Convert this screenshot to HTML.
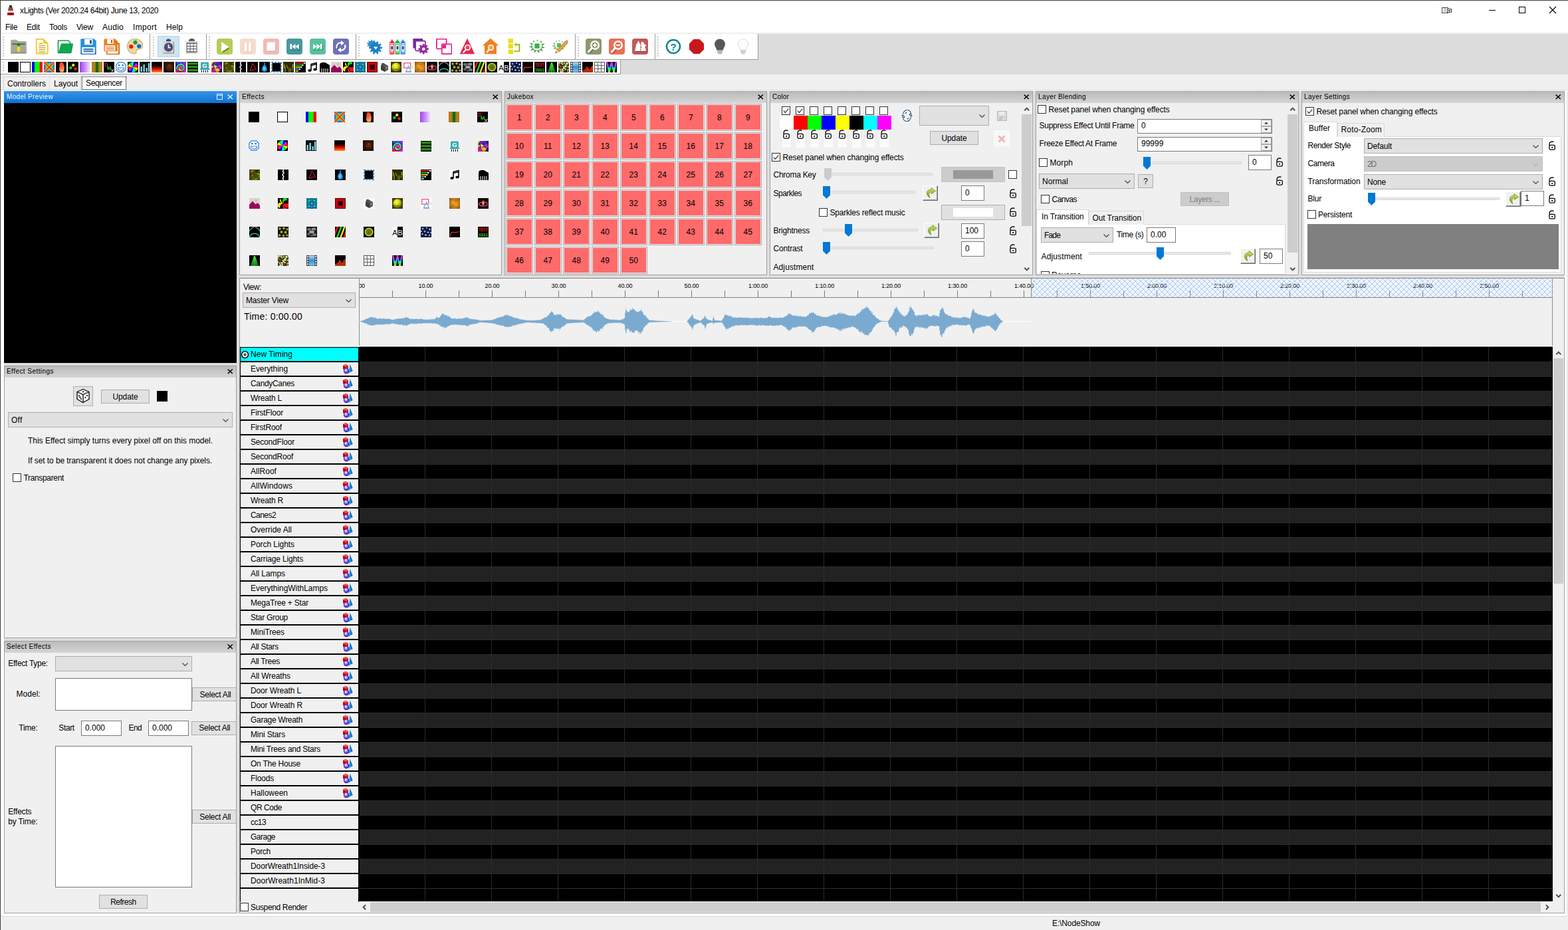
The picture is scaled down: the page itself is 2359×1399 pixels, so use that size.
<!DOCTYPE html>
<html lang="en"><head><meta charset="utf-8"><title>xLights</title><style>
html,body{margin:0;padding:0;background:#f0f0f0}
body{width:2359px;height:1399px;position:relative;overflow:hidden;font:12px/16px "Liberation Sans",sans-serif;color:#000}
div,span.t,svg{position:absolute;box-sizing:border-box}
span.t{white-space:nowrap;line-height:16px}
svg{overflow:visible}
</style></head><body>
<div style="left:0px;top:0px;width:2359px;height:1399px;background:#f0f0f0"></div>
<div style="left:0px;top:0px;width:2359px;height:50px;background:#fff"></div>
<div style="left:0px;top:0px;width:2359px;height:1px;background:#3c3c3c"></div>
<svg style="left:9px;top:7px;" width="14" height="17" viewBox="0 0 14 17"><path d="M5 1h4v3h-4z" fill="#3a2418"/><path d="M4 4h6l1 5h-8z" fill="#8a4a30"/><path d="M3 9h8v3h-8z" fill="#e8d8d0"/><path d="M2 12h10v4h-10z" fill="#b01828"/><path d="M5 13h4v3h-4z" fill="#7a0f1a"/></svg>
<span class="t" style="left:30px;top:8px;line-height:16px;letter-spacing:-0.360px;">xLights (Ver 2020.24 64bit) June 13, 2020</span>
<svg style="left:2165px;top:8px;" width="24" height="16" viewBox="0 0 24 16"><rect x="4.5" y="3.5" width="9" height="8" fill="#fff" stroke="#444" /><path d="M8 4v8M10 4v8" stroke="#999"/><rect x="12.5" y="5.5" width="6" height="5" fill="#fff" stroke="#444"/><rect x="14" y="7" width="3" height="2" fill="#444"/></svg>
<svg style="left:2235px;top:5px;" width="20" height="20" viewBox="0 0 20 20"><path d="M5 10.5h10" stroke="#000" stroke-width="1"/></svg>
<svg style="left:2280px;top:5px;" width="20" height="20" viewBox="0 0 20 20"><rect x="5.5" y="5.5" width="9" height="9" fill="none" stroke="#000"/></svg>
<svg style="left:2326px;top:5px;" width="20" height="20" viewBox="0 0 20 20"><path d="M5 5l10 10M15 5l-10 10" stroke="#000" stroke-width="1.1"/></svg>
<span class="t" style="left:8px;top:33px;line-height:16px;letter-spacing:-0.336px;">File</span>
<span class="t" style="left:40px;top:33px;line-height:16px;letter-spacing:-0.168px;">Edit</span>
<span class="t" style="left:74px;top:33px;line-height:16px;letter-spacing:-0.203px;">Tools</span>
<span class="t" style="left:115px;top:33px;line-height:16px;letter-spacing:-0.199px;">View</span>
<span class="t" style="left:154px;top:33px;line-height:16px;letter-spacing:0.263px;">Audio</span>
<span class="t" style="left:200px;top:33px;line-height:16px;letter-spacing:0.333px;">Import</span>
<span class="t" style="left:250px;top:33px;line-height:16px;letter-spacing:0.078px;">Help</span>
<div style="left:0px;top:51px;width:2359px;height:61px;background:#dcdcdc"></div>
<div style="left:0px;top:49px;width:2359px;height:2px;background:#f0f0f0"></div>
<div style="left:1px;top:51px;width:1140px;height:39px;background:#fff;border-right:1px solid #9a9a9a;border-bottom:1px solid #9a9a9a"></div>
<div style="left:1px;top:90px;width:933px;height:22px;background:#fff;border-right:1px solid #9a9a9a;border-bottom:1px solid #9a9a9a"></div>
<div style="left:225px;top:51px;width:1px;height:38px;background:#9a9a9a"></div>
<div style="left:310px;top:51px;width:1px;height:38px;background:#9a9a9a"></div>
<div style="left:535px;top:51px;width:1px;height:38px;background:#9a9a9a"></div>
<div style="left:865px;top:51px;width:1px;height:38px;background:#9a9a9a"></div>
<div style="left:985px;top:51px;width:1px;height:38px;background:#9a9a9a"></div>
<div style="left:4px;top:55px;width:2px;height:30px;background:repeating-linear-gradient(#c8c8c8 0 2px,#fff 2px 4px)"></div>
<div style="left:230px;top:55px;width:2px;height:30px;background:repeating-linear-gradient(#c8c8c8 0 2px,#fff 2px 4px)"></div>
<div style="left:314px;top:55px;width:2px;height:30px;background:repeating-linear-gradient(#c8c8c8 0 2px,#fff 2px 4px)"></div>
<div style="left:539px;top:55px;width:2px;height:30px;background:repeating-linear-gradient(#c8c8c8 0 2px,#fff 2px 4px)"></div>
<div style="left:869px;top:55px;width:2px;height:30px;background:repeating-linear-gradient(#c8c8c8 0 2px,#fff 2px 4px)"></div>
<div style="left:989px;top:55px;width:2px;height:30px;background:repeating-linear-gradient(#c8c8c8 0 2px,#fff 2px 4px)"></div>
<div style="left:4px;top:93px;width:2px;height:16px;background:repeating-linear-gradient(#c8c8c8 0 2px,#fff 2px 4px)"></div>
<div style="left:5px;top:115px;width:70px;height:21px;background:#f0f0f0;border:1px solid #d9d9d9;border-bottom:none"></div>
<div style="left:74px;top:115px;width:48px;height:21px;background:#f0f0f0;border:1px solid #d9d9d9;border-bottom:none"></div>
<div style="left:122px;top:113px;width:69px;height:23px;background:#fff;border:1px solid #d9d9d9;border-bottom:none"></div>
<div style="left:123px;top:115px;width:67px;height:20px;border:1px dotted #000"></div>
<span class="t" style="left:11px;top:118px;line-height:16px;letter-spacing:-0.003px;">Controllers</span>
<span class="t" style="left:81px;top:118px;line-height:16px;letter-spacing:-0.003px;">Layout</span>
<span class="t" style="left:129px;top:117px;line-height:16px;letter-spacing:-0.337px;">Sequencer</span>
<div style="left:0px;top:0px;width:1px;height:1399px;background:#3c3c3c"></div>
<div style="left:1px;top:137px;width:2355px;height:1237px;background:#dedede"></div>
<div style="left:1px;top:135px;width:2358px;height:1px;background:#dcdcdc"></div>
<div style="left:1px;top:136px;width:2358px;height:1px;background:#fff"></div>
<div style="left:1px;top:137px;width:5px;height:1241px;background:#fff"></div>
<div style="left:1px;top:1374px;width:2358px;height:4px;background:#fff"></div>
<div style="left:2354px;top:137px;width:3px;height:1241px;background:#fff"></div>
<div style="left:2357px;top:137px;width:1px;height:1241px;background:#e6e6e6"></div>
<div style="left:1px;top:1378px;width:2358px;height:1px;background:#dadada"></div>
<div style="left:1px;top:1379px;width:2358px;height:20px;background:#f0f0f0"></div>
<span class="t" style="left:1583px;top:1381px;line-height:16px;letter-spacing:-0.124px;">E:\NodeShow</span>
<div style="left:6px;top:137px;width:350px;height:409px;background:#000"></div>
<div style="left:6px;top:137px;width:350px;height:18px;background:linear-gradient(#3a92e6,#0b74d4)"></div>
<span class="t" style="left:10px;top:138px;font-size:10px;line-height:15px;color:#e6f6ff;letter-spacing:0.340px;">Model Preview</span>
<svg style="left:342px;top:142px;" width="9" height="8" viewBox="0 0 9 8"><path d="M0.7 0.5L7.8 7M7.8 0.5L0.7 7" stroke="#e0f4ff" stroke-width="1.6" fill="none"/></svg>
<svg style="left:326px;top:141px;" width="10" height="10" viewBox="0 0 10 10"><rect x="0.5" y="0.5" width="8" height="8" fill="none" stroke="#e0f4ff"/><path d="M0 2.5h9" stroke="#e0f4ff"/></svg>
<div style="left:6px;top:550px;width:350px;height:410px;background:#f0f0f0;border:1px solid #a0a0a0"></div>
<div style="left:7px;top:551px;width:348px;height:17px;background:linear-gradient(#bbbbbb,#d5d5d5)"></div>
<span class="t" style="left:10px;top:551px;font-size:10px;line-height:15px;letter-spacing:0.446px;">Effect Settings</span>
<svg style="left:342px;top:555px;" width="9" height="8" viewBox="0 0 9 8"><path d="M0.7 0.5L7.8 7M7.8 0.5L0.7 7" stroke="#000" stroke-width="1.6" fill="none"/></svg>
<div style="left:6px;top:964px;width:350px;height:410px;background:#f0f0f0;border:1px solid #a0a0a0"></div>
<div style="left:7px;top:965px;width:348px;height:17px;background:linear-gradient(#bbbbbb,#d5d5d5)"></div>
<span class="t" style="left:10px;top:965px;font-size:10px;line-height:15px;letter-spacing:0.431px;">Select Effects</span>
<svg style="left:342px;top:969px;" width="9" height="8" viewBox="0 0 9 8"><path d="M0.7 0.5L7.8 7M7.8 0.5L0.7 7" stroke="#000" stroke-width="1.6" fill="none"/></svg>
<div style="left:360px;top:137px;width:395px;height:277px;background:#f0f0f0;border:1px solid #a0a0a0"></div>
<div style="left:361px;top:138px;width:393px;height:17px;background:linear-gradient(#bbbbbb,#d5d5d5)"></div>
<span class="t" style="left:364px;top:138px;font-size:10px;line-height:15px;letter-spacing:0.516px;">Effects</span>
<svg style="left:741px;top:142px;" width="9" height="8" viewBox="0 0 9 8"><path d="M0.7 0.5L7.8 7M7.8 0.5L0.7 7" stroke="#000" stroke-width="1.6" fill="none"/></svg>
<div style="left:759px;top:137px;width:395px;height:277px;background:#f0f0f0;border:1px solid #a0a0a0"></div>
<div style="left:760px;top:138px;width:393px;height:17px;background:linear-gradient(#bbbbbb,#d5d5d5)"></div>
<span class="t" style="left:763px;top:138px;font-size:10px;line-height:15px;letter-spacing:0.393px;">Jukebox</span>
<svg style="left:1140px;top:142px;" width="9" height="8" viewBox="0 0 9 8"><path d="M0.7 0.5L7.8 7M7.8 0.5L0.7 7" stroke="#000" stroke-width="1.6" fill="none"/></svg>
<div style="left:1158px;top:137px;width:396px;height:277px;background:#f0f0f0;border:1px solid #a0a0a0"></div>
<div style="left:1159px;top:138px;width:394px;height:17px;background:linear-gradient(#bbbbbb,#d5d5d5)"></div>
<span class="t" style="left:1162px;top:138px;font-size:10px;line-height:15px;letter-spacing:0.222px;">Color</span>
<svg style="left:1540px;top:142px;" width="9" height="8" viewBox="0 0 9 8"><path d="M0.7 0.5L7.8 7M7.8 0.5L0.7 7" stroke="#000" stroke-width="1.6" fill="none"/></svg>
<div style="left:1558px;top:137px;width:396px;height:277px;background:#f0f0f0;border:1px solid #a0a0a0"></div>
<div style="left:1559px;top:138px;width:394px;height:17px;background:linear-gradient(#bbbbbb,#d5d5d5)"></div>
<span class="t" style="left:1562px;top:138px;font-size:10px;line-height:15px;letter-spacing:0.377px;">Layer Blending</span>
<svg style="left:1940px;top:142px;" width="9" height="8" viewBox="0 0 9 8"><path d="M0.7 0.5L7.8 7M7.8 0.5L0.7 7" stroke="#000" stroke-width="1.6" fill="none"/></svg>
<div style="left:1958px;top:137px;width:396px;height:277px;background:#f0f0f0;border:1px solid #a0a0a0"></div>
<div style="left:1959px;top:138px;width:394px;height:17px;background:linear-gradient(#bbbbbb,#d5d5d5)"></div>
<span class="t" style="left:1962px;top:138px;font-size:10px;line-height:15px;letter-spacing:0.362px;">Layer Settings</span>
<svg style="left:2340px;top:142px;" width="9" height="8" viewBox="0 0 9 8"><path d="M0.7 0.5L7.8 7M7.8 0.5L0.7 7" stroke="#000" stroke-width="1.6" fill="none"/></svg>
<div style="left:360px;top:418px;width:1994px;height:956px;background:#f0f0f0;border:1px solid #a0a0a0;border-top-color:#828282"></div>
<div style="left:110px;top:581px;width:30px;height:30px;background:#e1e1e1;border:1px solid #adadad"></div>
<svg style="left:114px;top:584px;" width="22" height="23" viewBox="0 0 22 23"><path d="M11 1.500L20 5.500V16.500L11 21.500L2 16.500V5.500Z" fill="#fff" stroke="#000" stroke-width="1.3" stroke-linejoin="round"/><path d="M2 5.500L11 9.500L20 5.500M11 9.500V21.500" fill="none" stroke="#000" stroke-width="1.3"/><circle cx="11" cy="5.300" r="1.1"/><circle cx="5" cy="11.500" r="1.1"/><circle cx="8" cy="16" r="1.1"/><circle cx="6.500" cy="13.700" r="1.1"/><circle cx="14.500" cy="14" r="1.1"/><circle cx="17" cy="11" r="1.1"/></svg>
<div style="left:152px;top:586px;width:73px;height:21px;background:#e1e1e1;border:1px solid #adadad"></div>
<span class="t" style="left:169.5px;top:588.5px;letter-spacing:-0.115px;">Update</span>
<div style="left:236px;top:588px;width:16px;height:16px;background:#000"></div>
<div style="left:12px;top:620px;width:338px;height:23px;background:#e1e1e1;border:1px solid #adadad"></div>
<span class="t" style="left:17px;top:624px;letter-spacing:0.245px;">Off</span>
<svg style="left:335px;top:630px;" width="9" height="5" viewBox="0 0 9 5"><path d="M0.5 0.5L4.5 4.5L8.5 0.5" fill="none" stroke="#444" stroke-width="1.2"/></svg>
<span class="t" style="left:42px;top:655px;line-height:16px;letter-spacing:-0.017px;">This Effect simply turns every pixel off on this model.</span>
<span class="t" style="left:42px;top:685px;line-height:16px;letter-spacing:-0.080px;">If set to be transparent it does not change any pixels.</span>
<div style="left:19px;top:712px;width:13px;height:13px;background:#fff;border:1px solid #333"></div>
<span class="t" style="left:35.5px;top:711px;line-height:16px;letter-spacing:-0.341px;">Transparent</span>
<span class="t" style="left:12.3px;top:990px;line-height:16px;letter-spacing:-0.283px;">Effect Type:</span>
<div style="left:83px;top:987px;width:206px;height:23px;background:#e1e1e1;border:1px solid #adadad"></div>
<svg style="left:274px;top:997px;" width="9" height="5" viewBox="0 0 9 5"><path d="M0.5 0.5L4.5 4.5L8.5 0.5" fill="none" stroke="#444" stroke-width="1.2"/></svg>
<span class="t" style="left:24.4px;top:1036px;line-height:16px;letter-spacing:0.081px;">Model:</span>
<div style="left:83px;top:1020px;width:206px;height:49px;background:#fff;border:1px solid #7a7a7a"></div>
<div style="left:289px;top:1034px;width:66px;height:21px;background:#e1e1e1;border:1px solid #adadad;border-right:none"></div>
<span class="t" style="left:300.5px;top:1037px;line-height:16px;letter-spacing:-0.236px;">Select All</span>
<span class="t" style="left:28.3px;top:1087px;line-height:16px;letter-spacing:-0.252px;">Time:</span>
<span class="t" style="left:88.3px;top:1087px;line-height:16px;letter-spacing:-0.366px;">Start</span>
<div style="left:122px;top:1084px;width:61px;height:23px;background:#fff;border:1px solid #7a7a7a"></div>
<span class="t" style="left:128px;top:1087px;">0.000</span>
<span class="t" style="left:193.5px;top:1087px;line-height:16px;letter-spacing:-0.615px;">End</span>
<div style="left:223px;top:1084px;width:61px;height:23px;background:#fff;border:1px solid #7a7a7a"></div>
<span class="t" style="left:229px;top:1087px;">0.000</span>
<div style="left:288px;top:1085px;width:67px;height:21px;background:#e1e1e1;border:1px solid #adadad;border-right:none"></div>
<span class="t" style="left:299.3px;top:1087px;line-height:16px;letter-spacing:-0.236px;">Select All</span>
<div style="left:83px;top:1122px;width:206px;height:213px;background:#fff;border:1px solid #7a7a7a"></div>
<span class="t" style="left:12.3px;top:1213px;line-height:16px;letter-spacing:-0.205px;">Effects</span>
<span class="t" style="left:12.3px;top:1228px;line-height:16px;letter-spacing:-0.168px;">by Time:</span>
<div style="left:289px;top:1218px;width:66px;height:21px;background:#e1e1e1;border:1px solid #adadad;border-right:none"></div>
<span class="t" style="left:300.2px;top:1221px;line-height:16px;letter-spacing:-0.236px;">Select All</span>
<div style="left:149px;top:1346px;width:73px;height:21px;background:#e1e1e1;border:1px solid #adadad"></div>
<span class="t" style="left:166.2px;top:1348.5px;letter-spacing:-0.502px;">Refresh</span>
<svg style="left:12px;top:93px;overflow:hidden" width="16" height="16" viewBox="0 0 16 16"><rect width="16" height="16" fill="#000"/></svg>
<svg style="left:30px;top:93px;overflow:hidden" width="16" height="16" viewBox="0 0 16 16"><rect x="0.5" y="0.5" width="15" height="15" fill="#fff" stroke="#000" stroke-width="1.1"/></svg>
<svg style="left:48px;top:93px;overflow:hidden" width="16" height="16" viewBox="0 0 16 16"><rect width="4.2" height="16" fill="#0000ff"/><rect x="4" width="7.7" height="16" fill="#00ff00"/><rect x="11.5" width="4.5" height="16" fill="#ff0000"/></svg>
<svg style="left:66px;top:93px;overflow:hidden" width="16" height="16" viewBox="0 0 16 16"><radialGradient id="bft3" cx="0.5" cy="0.5" r="0.56"><stop offset="0" stop-color="#ff1000"/><stop offset="0.18" stop-color="#ff9000"/><stop offset="0.3" stop-color="#e0e020"/><stop offset="0.45" stop-color="#30d030"/><stop offset="0.62" stop-color="#20c0d0"/><stop offset="0.8" stop-color="#3050f0"/><stop offset="1" stop-color="#d020c0"/></radialGradient><rect width="16" height="16" fill="url(#bft3)"/><path d="M0 0L16 16M16 0L0 16" stroke="#40d040" stroke-width="5.5" opacity=".55"/><path d="M0 0L16 16M16 0L0 16" stroke="#e8d020" stroke-width="3.6" opacity=".8"/><path d="M0 0L16 16M16 0L0 16" stroke="#ff2a08" stroke-width="1.9"/></svg>
<svg style="left:84px;top:93px;overflow:hidden" width="16" height="16" viewBox="0 0 16 16"><rect width="16" height="16" fill="#0c0400"/><linearGradient id="cdt4" x1="0" y1="0" x2="0.3" y2="1"><stop offset="0" stop-color="#e83818"/><stop offset="0.5" stop-color="#ff5a30"/><stop offset="1" stop-color="#ffb070"/></linearGradient><path d="M7 0.500C9.500 0.500 11.500 2 12 4.500C12.500 7 13 8.500 12.500 11C12.300 13 12 14.500 11 15.500H6.500C6.500 14 5.500 13.500 5 12C4.500 10.500 5.500 9.500 5.500 8C5 6 5.500 2 7 0.500Z" fill="url(#cdt4)"/><path d="M6 10C7 9 8 9.500 8 11" stroke="#ff8050" stroke-width="1" fill="none"/></svg>
<svg style="left:102px;top:93px;overflow:hidden" width="16" height="16" viewBox="0 0 16 16"><rect width="16" height="16" fill="#000"/><circle cx="4.5" cy="9" r="2.3" fill="#18c818"/><circle cx="8.2" cy="5" r="2.2" fill="#f0e020"/><circle cx="11.5" cy="10.5" r="2.3" fill="#e82020"/></svg>
<svg style="left:120px;top:93px;overflow:hidden" width="16" height="16" viewBox="0 0 16 16"><linearGradient id="cwt6"><stop offset="0" stop-color="#a040f0"/><stop offset="0.5" stop-color="#c890f8"/><stop offset="1" stop-color="#f4e8ff"/></linearGradient><rect width="16" height="16" fill="url(#cwt6)"/></svg>
<svg style="left:138px;top:93px;overflow:hidden" width="16" height="16" viewBox="0 0 16 16"><linearGradient id="cut7"><stop offset="0" stop-color="#e86010"/><stop offset="0.25" stop-color="#a09020"/><stop offset="0.45" stop-color="#207010"/><stop offset="0.5" stop-color="#0a3a08"/><stop offset="0.55" stop-color="#207010"/><stop offset="0.75" stop-color="#a09020"/><stop offset="1" stop-color="#e86010"/></linearGradient><rect width="16" height="16" fill="url(#cut7)"/></svg>
<svg style="left:156px;top:93px;overflow:hidden" width="16" height="16" viewBox="0 0 16 16"><rect width="16" height="16" fill="#000"/><text x="1" y="7" font-family="Liberation Sans, sans-serif" font-size="7.5" font-weight="bold" fill="#e01818">D</text><text x="5" y="12" font-family="Liberation Sans, sans-serif" font-size="7.5" font-weight="bold" fill="#20d020">M</text><text x="10.5" y="16" font-family="Liberation Sans, sans-serif" font-size="7.5" fill="#fff">X</text></svg>
<svg style="left:174px;top:93px;overflow:hidden" width="16" height="16" viewBox="0 0 16 16"><path d="M4.5 0.8h7l3.7 3.7v7l-3.7 3.7h-7l-3.7-3.7v-7z" fill="#fff" stroke="#2a7fd8" stroke-width="1.2"/><rect x="4" y="4" width="2.6" height="2.3" fill="#2a7fd8"/><rect x="9.4" y="4" width="2.6" height="2.3" fill="#2a7fd8"/><path d="M3.3 9h9.4c0 2.5-2 4-4.7 4s-4.7-1.5-4.7-4z" fill="#fff" stroke="#2a7fd8" stroke-width="1.1"/></svg>
<svg style="left:192px;top:93px;overflow:hidden" width="16" height="16" viewBox="0 0 16 16"><rect width="16" height="16" fill="#000"/><path d="M8 8L15.05 5.43A7.5 7.5 0 0 1 15.39 9.30Z" fill="#ff0000" stroke="#ff0000" stroke-width="0.4"/><path d="M8 8L15.39 9.30A7.5 7.5 0 0 1 13.75 12.82Z" fill="#ffff00" stroke="#ffff00" stroke-width="0.4"/><path d="M8 8L13.75 12.82A7.5 7.5 0 0 1 10.57 15.05Z" fill="#00ff00" stroke="#00ff00" stroke-width="0.4"/><path d="M8 8L10.57 15.05A7.5 7.5 0 0 1 6.70 15.39Z" fill="#00ffff" stroke="#00ffff" stroke-width="0.4"/><path d="M8 8L6.70 15.39A7.5 7.5 0 0 1 3.18 13.75Z" fill="#0000ff" stroke="#0000ff" stroke-width="0.4"/><path d="M8 8L3.18 13.75A7.5 7.5 0 0 1 0.95 10.57Z" fill="#ff00ff" stroke="#ff00ff" stroke-width="0.4"/><path d="M8 8L0.95 10.57A7.5 7.5 0 0 1 0.61 6.70Z" fill="#ff0000" stroke="#ff0000" stroke-width="0.4"/><path d="M8 8L0.61 6.70A7.5 7.5 0 0 1 2.25 3.18Z" fill="#ffff00" stroke="#ffff00" stroke-width="0.4"/><path d="M8 8L2.25 3.18A7.5 7.5 0 0 1 5.43 0.95Z" fill="#00ff00" stroke="#00ff00" stroke-width="0.4"/><path d="M8 8L5.43 0.95A7.5 7.5 0 0 1 9.30 0.61Z" fill="#00ffff" stroke="#00ffff" stroke-width="0.4"/><path d="M8 8L9.30 0.61A7.5 7.5 0 0 1 12.82 2.25Z" fill="#0000ff" stroke="#0000ff" stroke-width="0.4"/><path d="M8 8L12.82 2.25A7.5 7.5 0 0 1 15.05 5.43Z" fill="#ff00ff" stroke="#ff00ff" stroke-width="0.4"/></svg>
<svg style="left:210px;top:93px;overflow:hidden" width="16" height="16" viewBox="0 0 16 16"><rect width="16" height="16" fill="#0a1018"/><rect x="1.5" y="7" width="2.3" height="8" fill="#88d8e0"/><rect x="5.5" y="4" width="2.3" height="11" fill="#88d8e0"/><rect x="9.5" y="9" width="2.3" height="6" fill="#88d8e0"/><rect x="13" y="2" width="2.3" height="13" fill="#88d8e0"/></svg>
<svg style="left:228px;top:93px;overflow:hidden" width="16" height="16" viewBox="0 0 16 16"><linearGradient id="fit12" x1="0" y1="0" x2="0" y2="1"><stop offset="0" stop-color="#000"/><stop offset="0.35" stop-color="#100000"/><stop offset="0.6" stop-color="#a00800"/><stop offset="0.8" stop-color="#ff3000"/><stop offset="1" stop-color="#ff9020"/></linearGradient><rect width="16" height="16" fill="url(#fit12)"/></svg>
<svg style="left:246px;top:93px;overflow:hidden" width="16" height="16" viewBox="0 0 16 16"><radialGradient id="fwt13" cx="0.55" cy="0.45" r="0.6"><stop offset="0" stop-color="#7a3010"/><stop offset="0.5" stop-color="#3a1808"/><stop offset="1" stop-color="#180a06"/></radialGradient><rect width="16" height="16" fill="url(#fwt13)"/><circle cx="9" cy="5" r="0.8" fill="#c05020"/><circle cx="6" cy="9" r="0.7" fill="#904018"/><circle cx="11" cy="10" r="0.7" fill="#a04818"/><circle cx="8" cy="12" r="0.6" fill="#803010"/></svg>
<svg style="left:264px;top:93px;overflow:hidden" width="16" height="16" viewBox="0 0 16 16"><linearGradient id="gxt14" x1="0" y1="0" x2="1" y2="1"><stop offset="0" stop-color="#2060ff"/><stop offset="0.5" stop-color="#8030f0"/><stop offset="1" stop-color="#ff10d0"/></linearGradient><rect width="16" height="16" fill="url(#gxt14)"/><path d="M0 16V11.500C2 13 4 14 6.500 14.500L4 16Z" fill="#e81020"/><path d="M0 0V11C1 6 4 3 8 3C11.500 3 13.500 5.500 13.500 8.500C13.500 11.500 11.500 13.500 8.500 13.500C6 13.500 4.500 11.500 4.500 9.500C4.500 7.500 6 6.500 7.500 6.500" fill="none" stroke="#101018" stroke-width="2.6"/><path d="M2 11C1.500 7 4.500 3.500 8 3.500" fill="none" stroke="#20d8e8" stroke-width="2.4"/><path d="M8 3.500C11 3.500 13 5.800 13 8.500" fill="none" stroke="#30e0a0" stroke-width="2.4"/><path d="M13 8.500C13 11 11 13 8.500 13" fill="none" stroke="#40e020" stroke-width="2.4"/><path d="M8.500 13C6.500 13 5 11.500 5 9.800" fill="none" stroke="#e0e020" stroke-width="2.2"/><path d="M5 9.800C5 8 6.300 7 7.600 7C9 7 9.800 8 9.800 9" fill="none" stroke="#f06010" stroke-width="1.8"/><circle cx="8.300" cy="9.300" r="1" fill="#e01080"/></svg>
<svg style="left:282px;top:93px;overflow:hidden" width="16" height="16" viewBox="0 0 16 16"><linearGradient id="gat15" x1="0" y1="0" x2="0" y2="1"><stop offset="0" stop-color="#40c020"/><stop offset="1" stop-color="#186008"/></linearGradient><rect width="16" height="16" fill="#000"/><rect x="0.5" y="1.5" width="15" height="3.2" fill="url(#gat15)"/><rect x="0.5" y="6.4" width="15" height="3.2" fill="url(#gat15)"/><rect x="0.5" y="11.3" width="15" height="3.2" fill="url(#gat15)"/></svg>
<svg style="left:300px;top:93px;overflow:hidden" width="16" height="16" viewBox="0 0 16 16"><rect width="16" height="16" fill="#fff" opacity=".9"/><path d="M3.500 0.500h9c1 0 1.500 .500 1.500 1.500v7.500l2 2.500H0l2-2.500V2c0-1 .500-1.500 1.500-1.500z" fill="#38a8b0"/><text x="4.3" y="9.3" font-family="Liberation Sans, sans-serif" font-size="9.5" font-weight="bold" fill="#fff">G</text><path d="M3.500 12.500v3.500M6.500 12.500v3.500M9.500 12.500v3.500M12.500 12.500v3.500" stroke="#101010" stroke-width="1.1"/></svg>
<svg style="left:318px;top:93px;overflow:hidden" width="16" height="16" viewBox="0 0 16 16"><rect width="16" height="16" fill="#4020b0"/><path d="M0 0h3.500L0 5z" fill="#f0d020"/><path d="M3 0h5L5 4z" fill="#c01880"/><path d="M8 0h5l-2 6z" fill="#3030d0"/><path d="M13 0h3v6z" fill="#181030"/><path d="M0 5l4 2-4 4z" fill="#e8a818"/><path d="M4 4l5 3-4 4z" fill="#f0d820"/><path d="M9 7l4-3 3 5-4 3z" fill="#e02090"/><path d="M0 11l5 0 2 5H0z" fill="#d01888"/><path d="M5 11l5-2 3 4-5 3z" fill="#f0c020"/><path d="M13 13l3-4v7h-5z" fill="#181030"/><path d="M7 16l2-3 3 3z" fill="#e86818"/><path d="M10 6l3 3-3 2z" fill="#2840d8"/></svg>
<svg style="left:336px;top:93px;overflow:hidden" width="16" height="16" viewBox="0 0 16 16"><rect width="16" height="16" fill="#4a4a08"/><ellipse cx="4.1" cy="8.7" rx="1.3" ry="1.2" fill="#8a8a18"/><ellipse cx="9.6" cy="14.1" rx="1.4" ry="1.1" fill="#9a9820"/><ellipse cx="15.4" cy="7.6" rx="1.7" ry="1.1" fill="#9a9820"/><ellipse cx="4.0" cy="2.8" rx="1.7" ry="1.0" fill="#8a8a18"/><ellipse cx="10.6" cy="1.5" rx="1.6" ry="1.2" fill="#2a2a04"/><ellipse cx="12.2" cy="12.9" rx="1.2" ry="1.2" fill="#707010"/><ellipse cx="11.2" cy="14.3" rx="1.3" ry="1.3" fill="#707010"/><ellipse cx="15.0" cy="2.5" rx="1.3" ry="0.8" fill="#707010"/><ellipse cx="3.8" cy="15.0" rx="1.3" ry="1.2" fill="#2a2a04"/><ellipse cx="6.8" cy="13.0" rx="1.5" ry="1.1" fill="#707010"/><ellipse cx="9.3" cy="14.1" rx="1.5" ry="1.4" fill="#2a2a04"/><ellipse cx="15.4" cy="10.6" rx="1.1" ry="1.3" fill="#8a8a18"/><ellipse cx="11.2" cy="3.7" rx="1.7" ry="1.1" fill="#2a2a04"/><ellipse cx="2.4" cy="7.7" rx="1.5" ry="1.1" fill="#2a2a04"/><ellipse cx="12.5" cy="6.7" rx="1.1" ry="1.0" fill="#707010"/><ellipse cx="13.6" cy="1.2" rx="1.5" ry="0.8" fill="#2a2a04"/><ellipse cx="8.8" cy="14.3" rx="1.2" ry="0.9" fill="#8a8a18"/><ellipse cx="5.1" cy="1.7" rx="1.5" ry="0.8" fill="#9a9820"/><ellipse cx="15.1" cy="4.9" rx="1.2" ry="1.2" fill="#2a2a04"/><ellipse cx="5.2" cy="14.9" rx="1.7" ry="1.0" fill="#707010"/><ellipse cx="13.5" cy="6.3" rx="1.7" ry="1.2" fill="#8a8a18"/><ellipse cx="9.8" cy="14.6" rx="1.4" ry="1.1" fill="#9a9820"/></svg>
<svg style="left:354px;top:93px;overflow:hidden" width="16" height="16" viewBox="0 0 16 16"><rect width="16" height="16" fill="#000"/><path d="M8.5 0L7.5 3 9 5 7 8 8.8 10.5 7.5 13 8.5 16" fill="none" stroke="#fff" stroke-width="1.5"/></svg>
<svg style="left:372px;top:93px;overflow:hidden" width="16" height="16" viewBox="0 0 16 16"><rect width="16" height="16" fill="#080004"/><path d="M8 2.5L13.5 10.5 4 13Z" fill="none" stroke="#e02038" stroke-width="1"/></svg>
<svg style="left:390px;top:93px;overflow:hidden" width="16" height="16" viewBox="0 0 16 16"><rect width="16" height="16" fill="#02040c"/><radialGradient id="lqt21" cx="0.45" cy="0.6" r="0.6"><stop offset="0" stop-color="#80e0ff"/><stop offset="0.6" stop-color="#1890e0"/><stop offset="1" stop-color="#0850a0"/></radialGradient><path d="M8 2.5C8.5 5 12 7.5 12 11A4 4 0 0 1 4 11C4 7.5 7.5 5 8 2.5Z" fill="url(#lqt21)"/><rect x="7.2" y="1" width="1.6" height="5" fill="#2080d0"/></svg>
<svg style="left:408px;top:93px;overflow:hidden" width="16" height="16" viewBox="0 0 16 16"><rect x="1.5" y="1.5" width="13" height="13" fill="#000"/><rect x="1" y="1" width="14" height="14" fill="none" stroke="#3a78c8" stroke-width="2" stroke-dasharray="2.2 2.45"/></svg>
<svg style="left:426px;top:93px;overflow:hidden" width="16" height="16" viewBox="0 0 16 16"><rect width="16" height="16" fill="#2a2a04"/><rect x="9.8" y="8.9" width="1.4" height="6.8" fill="#8a8a18"/><rect x="13.1" y="9.3" width="1.0" height="3.2" fill="#a0a028"/><rect x="2.2" y="5.6" width="1.0" height="5.2" fill="#a0a028"/><rect x="0.7" y="2.6" width="1.0" height="6.7" fill="#6a6a10"/><rect x="2.9" y="9.6" width="0.9" height="5.5" fill="#a0a028"/><rect x="2.5" y="11.7" width="0.8" height="6.1" fill="#a0a028"/><rect x="13.6" y="3.5" width="1.5" height="5.2" fill="#a0a028"/><rect x="3.2" y="11.6" width="0.9" height="6.9" fill="#6a6a10"/><rect x="5.0" y="4.3" width="0.9" height="3.6" fill="#8a8a18"/><rect x="5.5" y="9.8" width="1.2" height="5.4" fill="#1a1a02"/><rect x="1.5" y="4.3" width="1.0" height="5.8" fill="#a0a028"/><rect x="7.7" y="8.5" width="0.8" height="6.9" fill="#8a8a18"/><rect x="14.7" y="4.3" width="1.1" height="5.2" fill="#6a6a10"/><rect x="6.0" y="6.9" width="0.8" height="3.2" fill="#a0a028"/></svg>
<svg style="left:444px;top:93px;overflow:hidden" width="16" height="16" viewBox="0 0 16 16"><rect width="16" height="16" fill="#000"/><rect x="0.5" y="1" width="14" height="1.8" fill="#e82020"/><rect x="13" y="1" width="2.5" height="1.8" fill="#fff"/><rect x="0.5" y="4" width="11" height="1.8" fill="#20c020"/><rect x="10" y="4" width="2.5" height="1.8" fill="#fff"/><rect x="0.5" y="7" width="9" height="1.8" fill="#f0d020"/><rect x="8.5" y="7" width="2" height="1.8" fill="#fff"/><rect x="0.5" y="10" width="6.5" height="1.8" fill="#40b0e8"/><rect x="6" y="10" width="2" height="1.8" fill="#fff"/><rect x="0.5" y="13" width="4.5" height="1.8" fill="#f0d020"/></svg>
<svg style="left:462px;top:93px;overflow:hidden" width="16" height="16" viewBox="0 0 16 16"><rect width="16" height="16" fill="#fff" opacity=".85"/><path d="M6 3.5L14 1.5V11.5M6 3.5V13" fill="none" stroke="#000" stroke-width="1.6"/><path d="M6 5.5L14 3.5" stroke="#000" stroke-width="1.6"/><ellipse cx="4" cy="13" rx="2.7" ry="2" fill="#000"/><ellipse cx="12" cy="11.5" rx="2.7" ry="2" fill="#000"/></svg>
<svg style="left:480px;top:93px;overflow:hidden" width="16" height="16" viewBox="0 0 16 16"><rect width="16" height="16" fill="#fff" opacity=".85"/><path d="M1 16V4.5C1 2 3 1 5 1h3c3 0 4 2.5 6.5 3 1 .3 1.500 1 1.500 2V16z" fill="#000"/><path d="M4 10v6M7 10v6M10 10v6M13 10v6" stroke="#fff" stroke-width="1"/></svg>
<svg style="left:498px;top:93px;overflow:hidden" width="16" height="16" viewBox="0 0 16 16"><rect width="16" height="16" fill="#d8d4d0"/><circle cx="10.5" cy="3.5" r="1.8" fill="#f0b0a0"/><path d="M0 16V10L5 4.500 9.500 9.500 12.500 7 16 11V16Z" fill="#980858"/></svg>
<svg style="left:516px;top:93px;overflow:hidden" width="16" height="16" viewBox="0 0 16 16"><rect width="16" height="16" fill="#000"/><path d="M8 8C8.500 5 10 3 13.500 3.500C15 1.500 13 0 10.500 0C7 0 6 4.500 8 8Z" fill="#10e020"/><path d="M8 8C5 8.500 3 10.500 3.500 14C1.500 16 0 13 0 10.500C0 6.500 4.500 5.500 8 8Z" fill="#f8f010"/><path d="M3.500 1C2 3.500 3.500 6.500 8 8C4.500 5.500 5.500 2.500 3.500 1Z" fill="#f8f010"/><path d="M8 8C11 8 13.500 9 16 7.500V14C14 15.500 9 14 8 8Z" fill="#f01010"/><path d="M8 8C8 11.500 10 14.500 13.500 16H8.500C6.500 13.500 7 10.500 8 8Z" fill="#f01010"/></svg>
<svg style="left:534px;top:93px;overflow:hidden" width="16" height="16" viewBox="0 0 16 16"><rect width="16" height="16" fill="#18c040"/><circle cx="4" cy="4" r="2.6" fill="none" stroke="#1850d8" stroke-width="1.5"/><circle cx="4" cy="4" r="0.9" fill="#20e0c0"/><circle cx="12" cy="4" r="2.6" fill="none" stroke="#1850d8" stroke-width="1.5"/><circle cx="12" cy="4" r="0.9" fill="#20e0c0"/><circle cx="4" cy="12" r="2.6" fill="none" stroke="#1850d8" stroke-width="1.5"/><circle cx="4" cy="12" r="0.9" fill="#20e0c0"/><circle cx="12" cy="12" r="2.6" fill="none" stroke="#1850d8" stroke-width="1.5"/><circle cx="12" cy="12" r="0.9" fill="#20e0c0"/><circle cx="8" cy="8" r="2.6" fill="none" stroke="#1850d8" stroke-width="1.5"/><circle cx="8" cy="8" r="0.9" fill="#20e0c0"/><circle cx="0" cy="8" r="1.8" fill="#1040c0"/><circle cx="8" cy="0" r="1.8" fill="#1040c0"/><circle cx="16" cy="8" r="1.8" fill="#1040c0"/><circle cx="8" cy="16" r="1.8" fill="#1040c0"/><circle cx="0" cy="0" r="1.8" fill="#1040c0"/><circle cx="16" cy="0" r="1.8" fill="#1040c0"/><circle cx="0" cy="16" r="1.8" fill="#1040c0"/><circle cx="16" cy="16" r="1.8" fill="#1040c0"/></svg>
<svg style="left:552px;top:93px;overflow:hidden" width="16" height="16" viewBox="0 0 16 16"><rect width="16" height="16" fill="#700000"/><rect x="1.5" y="1.5" width="13" height="13" fill="#e00808"/><rect x="3.5" y="3.5" width="9" height="9" fill="#900000"/><rect x="5" y="5" width="6" height="6" fill="#100000"/></svg>
<svg style="left:570px;top:93px;overflow:hidden" width="16" height="16" viewBox="0 0 16 16"><rect width="16" height="16" fill="#fff" opacity=".7"/><path d="M3 5l6-2 5 3v6l-5 3-6-3z" fill="#5a5a58"/><path d="M3 5l6 3v7l-6-3z" fill="#3e3e3c"/><path d="M4 2.500c1.500-1 3.500-1 4.500 0v3h-4.500z" fill="#484846"/><circle cx="11.500" cy="9" r="1.500" fill="#8a8a88"/></svg>
<svg style="left:588px;top:93px;overflow:hidden" width="16" height="16" viewBox="0 0 16 16"><radialGradient id="sht32" cx="0.4" cy="0.35" r="0.65"><stop offset="0" stop-color="#ffff60"/><stop offset="0.5" stop-color="#d0d010"/><stop offset="1" stop-color="#606000"/></radialGradient><rect width="16" height="16" fill="#3a3a08"/><circle cx="8" cy="8" r="6.8" fill="url(#sht32)"/><path d="M1.500 10c4 2 9 2 13 0" stroke="#707008" stroke-width="1" fill="none"/></svg>
<svg style="left:606px;top:93px;overflow:hidden" width="16" height="16" viewBox="0 0 16 16"><rect width="16" height="16" fill="#fff" opacity=".85"/><rect x="1.700" y="1.700" width="10" height="7.500" fill="none" stroke="#f06080" stroke-width="1.400"/><path d="M8.500 6L12.500 14.500H4.500Z" fill="none" stroke="#88a8e0" stroke-width="1.300"/><path d="M4 15.300h9" stroke="#88a8e0" stroke-width="1.200"/><circle cx="13.500" cy="8.500" r="1.800" fill="none" stroke="#a8e0b8" stroke-width="1"/></svg>
<svg style="left:624px;top:93px;overflow:hidden" width="16" height="16" viewBox="0 0 16 16"><radialGradient id="smt34" cx="0.5" cy="0.5" r="0.7"><stop offset="0" stop-color="#f0a020"/><stop offset="0.6" stop-color="#c07818"/><stop offset="1" stop-color="#7a4a10"/></radialGradient><rect width="16" height="16" fill="url(#smt34)"/><circle cx="5" cy="6" r="1.500" fill="#f8b838" opacity=".7"/><circle cx="11" cy="10" r="1.500" fill="#f8b838" opacity=".6"/><circle cx="10" cy="4" r="1" fill="#905810" opacity=".7"/><circle cx="5" cy="12" r="1.200" fill="#905810" opacity=".7"/></svg>
<svg style="left:642px;top:93px;overflow:hidden" width="16" height="16" viewBox="0 0 16 16"><radialGradient id="swt35" cx="0.5" cy="0.5" r="0.5"><stop offset="0" stop-color="#ffe060"/><stop offset="0.35" stop-color="#f09040"/><stop offset="1" stop-color="#301010" stop-opacity="0"/></radialGradient><rect width="16" height="16" fill="#100808"/><ellipse cx="8" cy="9" rx="6.500" ry="3" fill="none" stroke="#e83898" stroke-width="1.300"/><ellipse cx="8" cy="7.500" rx="3" ry="6" fill="url(#swt35)"/></svg>
<svg style="left:660px;top:93px;overflow:hidden" width="16" height="16" viewBox="0 0 16 16"><rect width="16" height="16" fill="#000"/><path d="M0.500 16C2 8.500 14 8.500 15.500 16" fill="none" stroke="#20d8c0" stroke-width="1.300"/><path d="M0 6.500C2.500 3 5 1 7 0M16 6.500C13.500 3 11 1 9 0" fill="none" stroke="#20d8c0" stroke-width="1.100"/><path d="M4.500 2.500C5.500 1.500 6.500 0.800 8 0.300C9.500 0.800 10.500 1.500 11.500 2.500" fill="none" stroke="#e82840" stroke-width="1.200"/></svg>
<svg style="left:678px;top:93px;overflow:hidden" width="16" height="16" viewBox="0 0 16 16"><rect width="16" height="16" fill="#0c0c02"/><circle cx="3" cy="3" r="2" fill="#8a8a30"/><circle cx="3" cy="3" r="1.0" fill="#b0b050"/><circle cx="9" cy="2.5" r="2" fill="#8a8a30"/><circle cx="9" cy="2.5" r="1.0" fill="#b0b050"/><circle cx="14" cy="4" r="1.8" fill="#8a8a30"/><circle cx="14" cy="4" r="0.9" fill="#b0b050"/><circle cx="5.5" cy="8" r="2.2" fill="#8a8a30"/><circle cx="5.5" cy="8" r="1.1" fill="#b0b050"/><circle cx="11.5" cy="8.5" r="2.2" fill="#8a8a30"/><circle cx="11.5" cy="8.5" r="1.1" fill="#b0b050"/><circle cx="2.5" cy="13" r="2" fill="#8a8a30"/><circle cx="2.5" cy="13" r="1.0" fill="#b0b050"/><circle cx="8.5" cy="13.5" r="2" fill="#8a8a30"/><circle cx="8.5" cy="13.5" r="1.0" fill="#b0b050"/><circle cx="14" cy="13" r="1.8" fill="#8a8a30"/><circle cx="14" cy="13" r="0.9" fill="#b0b050"/></svg>
<svg style="left:696px;top:93px;overflow:hidden" width="16" height="16" viewBox="0 0 16 16"><rect width="16" height="16" fill="#181818"/><ellipse cx="4" cy="4" rx="3" ry="2" fill="#707070"/><ellipse cx="11" cy="3.5" rx="3.5" ry="2" fill="#8a8a8a"/><ellipse cx="8" cy="8" rx="4" ry="2.2" fill="#a0a0a0"/><ellipse cx="3.5" cy="11" rx="2.5" ry="2" fill="#606060"/><ellipse cx="12" cy="12" rx="3" ry="2" fill="#787878"/><ellipse cx="8" cy="13.5" rx="2.5" ry="1.5" fill="#505050"/></svg>
<svg style="left:714px;top:93px;overflow:hidden" width="16" height="16" viewBox="0 0 16 16"><rect width="16" height="16" fill="#000"/><path d="M-8.5 16L-2.5 0h2.700L-5.8 16z" fill="#f0e020"/><path d="M-3.3 16L2.7 0h2.700L-0.6 16z" fill="#e01818"/><path d="M1.9 16L7.9 0h2.700L4.6 16z" fill="#20d020"/><path d="M7.1 16L13.1 0h2.700L9.8 16z" fill="#f0e020"/><path d="M12.3 16L18.3 0h2.700L15.0 16z" fill="#e01818"/><path d="M17.5 16L23.5 0h2.700L20.2 16z" fill="#20d020"/></svg>
<svg style="left:732px;top:93px;overflow:hidden" width="16" height="16" viewBox="0 0 16 16"><rect width="16" height="16" fill="#000"/><circle cx="8" cy="8" r="5.600" fill="#607010" stroke="#b8d020" stroke-width="1.800"/><circle cx="8" cy="8" r="3.200" fill="#30a020"/><path d="M8 5.500l.800 1.700 1.800.300-1.300 1.300.300 1.800L8 9.800l-1.600.800.300-1.800-1.300-1.300 1.800-.300z" fill="#e01818"/></svg>
<svg style="left:750px;top:93px;overflow:hidden" width="16" height="16" viewBox="0 0 16 16"><rect width="8" height="16" fill="#fff"/><rect x="8" width="8" height="16" fill="#000"/><text x="0.3" y="13" font-family="Liberation Sans, sans-serif" font-size="11" fill="#000" textLength="7.4" lengthAdjust="spacingAndGlyphs">A</text><text x="8.6" y="13" font-family="Liberation Sans, sans-serif" font-size="11" fill="#fff" textLength="7" lengthAdjust="spacingAndGlyphs">B</text></svg>
<svg style="left:768px;top:93px;overflow:hidden" width="16" height="16" viewBox="0 0 16 16"><rect width="16" height="16" fill="#0a1840"/><path d="M1.6 3h2.8M3 1.6v2.8" stroke="#fff" stroke-width="0.9"/><path d="M2.2 2.2l1.7 1.7M3.8 2.2l-1.7 1.7" stroke="#6090e0" stroke-width="0.6"/><path d="M8 2h2M9 1v2" stroke="#fff" stroke-width="0.9"/><path d="M8.4 1.4l1.2 1.2M9.6 1.4l-1.2 1.2" stroke="#6090e0" stroke-width="0.6"/><path d="M12.1 4h2.8M13.5 2.6v2.8" stroke="#fff" stroke-width="0.9"/><path d="M12.7 3.2l1.7 1.7M14.3 3.2l-1.7 1.7" stroke="#6090e0" stroke-width="0.6"/><path d="M4.6 7h2.8M6 5.6v2.8" stroke="#fff" stroke-width="0.9"/><path d="M5.2 6.2l1.7 1.7M6.8 6.2l-1.7 1.7" stroke="#6090e0" stroke-width="0.6"/><path d="M9.6 8.5h2.8M11 7.1v2.8" stroke="#fff" stroke-width="0.9"/><path d="M10.2 7.7l1.7 1.7M11.8 7.7l-1.7 1.7" stroke="#6090e0" stroke-width="0.6"/><path d="M1.3 11h2.4M2.5 9.8v2.4" stroke="#fff" stroke-width="0.9"/><path d="M1.8 10.3l1.4 1.4M3.2 10.3l-1.4 1.4" stroke="#6090e0" stroke-width="0.6"/><path d="M6.1 12.5h2.8M7.5 11.1v2.8" stroke="#fff" stroke-width="0.9"/><path d="M6.7 11.7l1.7 1.7M8.3 11.7l-1.7 1.7" stroke="#6090e0" stroke-width="0.6"/><path d="M11.8 13h2.4M13 11.8v2.4" stroke="#fff" stroke-width="0.9"/><path d="M12.3 12.3l1.4 1.4M13.7 12.3l-1.4 1.4" stroke="#6090e0" stroke-width="0.6"/><path d="M14.2 9h1.6M15 8.2v1.6" stroke="#fff" stroke-width="0.9"/><path d="M14.5 8.5l1.0 1.0M15.5 8.5l-1.0 1.0" stroke="#6090e0" stroke-width="0.6"/><path d="M0.19999999999999996 7h1.6M1 6.2v1.6" stroke="#fff" stroke-width="0.9"/><path d="M0.5 6.5l1.0 1.0M1.5 6.5l-1.0 1.0" stroke="#6090e0" stroke-width="0.6"/></svg>
<svg style="left:786px;top:93px;overflow:hidden" width="16" height="16" viewBox="0 0 16 16"><rect width="16" height="16" fill="#0a0000"/><path d="M1.500 14.500C1.500 9 3 7.500 7 8.500C10 9.200 12 8 14.500 7.500" fill="none" stroke="#e83040" stroke-width="1.200"/></svg>
<svg style="left:804px;top:93px;overflow:hidden" width="16" height="16" viewBox="0 0 16 16"><rect width="16" height="16" fill="#100000"/><text x="1" y="7" font-family="Liberation Sans, sans-serif" font-size="6.5" font-weight="bold" fill="#e01818" textLength="14" lengthAdjust="spacingAndGlyphs">TEXT</text><text x="1" y="14.5" font-family="Liberation Sans, sans-serif" font-size="6.5" font-weight="bold" fill="#18b818" textLength="14" lengthAdjust="spacingAndGlyphs">XMAS</text></svg>
<svg style="left:822px;top:93px;overflow:hidden" width="16" height="16" viewBox="0 0 16 16"><rect width="16" height="16" fill="#000"/><linearGradient id="trt45" x1="0" y1="0" x2="0" y2="1"><stop offset="0" stop-color="#40e040"/><stop offset="1" stop-color="#107010"/></linearGradient><path d="M7 1h2l5 15H2z" fill="url(#trt45)"/><path d="M8 1v15" stroke="#60ff60" stroke-width="0.8" opacity=".6"/></svg>
<svg style="left:840px;top:93px;overflow:hidden" width="16" height="16" viewBox="0 0 16 16"><rect width="16" height="16" fill="#283808"/><rect x="6.2" y="8.0" width="2.9" height="2.2" fill="#d0d8a0"/><rect x="12.7" y="2.0" width="2.7" height="2.2" fill="#20a020"/><rect x="0.5" y="3.9" width="1.6" height="2.7" fill="#f0e8c0"/><rect x="8.5" y="5.3" width="2.2" height="2.6" fill="#20a020"/><rect x="9.0" y="12.3" width="1.6" height="1.6" fill="#d82020"/><rect x="8.6" y="11.4" width="2.0" height="2.4" fill="#d82020"/><rect x="7.3" y="9.2" width="2.2" height="2.5" fill="#101808"/><rect x="9.5" y="5.5" width="2.3" height="2.9" fill="#e8e0b0"/><rect x="10.3" y="4.0" width="1.8" height="1.9" fill="#e8e0b0"/><rect x="8.0" y="0.7" width="1.7" height="1.9" fill="#e8e0b0"/><rect x="14.3" y="12.6" width="1.5" height="1.8" fill="#f0e8c0"/><rect x="6.5" y="14.7" width="2.1" height="1.6" fill="#d82020"/><rect x="11.5" y="3.3" width="1.6" height="2.0" fill="#c8c890"/><rect x="11.1" y="0.9" width="1.9" height="1.7" fill="#f0e8c0"/><rect x="6.4" y="6.8" width="2.5" height="1.8" fill="#d0d8a0"/><rect x="2.1" y="10.7" width="1.7" height="2.5" fill="#e8e0b0"/><rect x="5.3" y="14.8" width="1.5" height="2.8" fill="#f8f0d8"/><rect x="15.0" y="-0.7" width="1.8" height="3.0" fill="#e8e0b0"/><rect x="-0.3" y="1.3" width="2.2" height="1.5" fill="#a8b840"/><rect x="12.3" y="5.2" width="1.6" height="1.8" fill="#d82020"/><rect x="-0.8" y="4.9" width="2.4" height="1.7" fill="#101808"/><rect x="12.3" y="1.2" width="2.1" height="2.4" fill="#f8f0d8"/><rect x="13.5" y="12.1" width="1.9" height="1.8" fill="#d0d8a0"/><rect x="2.1" y="14.2" width="2.8" height="2.4" fill="#c8c890"/><rect x="-0.2" y="0.7" width="2.3" height="1.9" fill="#c8c890"/><rect x="3.1" y="12.2" width="2.4" height="1.9" fill="#20a020"/><rect x="13.9" y="14.6" width="1.7" height="2.2" fill="#e8e0b0"/><rect x="3.5" y="13.7" width="1.8" height="1.5" fill="#f8f0d8"/><rect x="5.6" y="3.0" width="1.6" height="1.9" fill="#d0d8a0"/><rect x="8.2" y="1.1" width="2.0" height="2.8" fill="#a8b840"/><rect x="9.5" y="10.1" width="2.4" height="1.7" fill="#f0e8c0"/><rect x="13.8" y="6.6" width="2.0" height="2.0" fill="#f0e8c0"/><rect x="-0.7" y="9.2" width="2.2" height="2.6" fill="#a8b840"/><rect x="1.2" y="0.2" width="2.2" height="2.1" fill="#f0e8c0"/><rect x="13.4" y="10.8" width="2.6" height="2.7" fill="#a8b840"/><rect x="4.6" y="10.0" width="2.9" height="2.8" fill="#c8c890"/><rect x="14.1" y="-0.5" width="2.2" height="1.5" fill="#c8c890"/><rect x="5.1" y="-0.8" width="1.6" height="1.6" fill="#e8e0b0"/><rect x="14.9" y="13.1" width="2.6" height="2.1" fill="#101808"/><rect x="6.0" y="12.4" width="1.6" height="2.6" fill="#f0e8c0"/><rect x="4.0" y="0.4" width="1.5" height="2.9" fill="#e8e0b0"/><rect x="7.0" y="8.8" width="2.9" height="1.9" fill="#f0e8c0"/><rect x="4.9" y="1.3" width="2.4" height="2.3" fill="#a8b840"/><rect x="9.6" y="6.1" width="2.8" height="2.0" fill="#f8f0d8"/><rect x="2.2" y="5.9" width="2.7" height="2.9" fill="#d82020"/><rect x="5.2" y="8.3" width="2.0" height="1.7" fill="#101808"/></svg>
<svg style="left:858px;top:93px;overflow:hidden" width="16" height="16" viewBox="0 0 16 16"><linearGradient id="vdt47" x1="0" y1="0" x2="0" y2="1"><stop offset="0" stop-color="#b0e0f8"/><stop offset="0.5" stop-color="#3890d0"/><stop offset="1" stop-color="#80c8f0"/></linearGradient><rect width="16" height="16" rx="1" fill="#202830"/><rect x="3.500" y="0.500" width="9" height="15" fill="url(#vdt47)"/><rect x="0.800" y="1" width="1.900" height="2.400" fill="#fff"/><rect x="13.300" y="1" width="1.900" height="2.400" fill="#fff"/><rect x="0.800" y="4.7" width="1.900" height="2.400" fill="#fff"/><rect x="13.300" y="4.7" width="1.900" height="2.400" fill="#fff"/><rect x="0.800" y="8.4" width="1.900" height="2.400" fill="#fff"/><rect x="13.300" y="8.4" width="1.900" height="2.400" fill="#fff"/><rect x="0.800" y="12.1" width="1.900" height="2.400" fill="#fff"/><rect x="13.300" y="12.1" width="1.900" height="2.400" fill="#fff"/></svg>
<svg style="left:876px;top:93px;overflow:hidden" width="16" height="16" viewBox="0 0 16 16"><rect width="16" height="16" fill="#080000"/><rect x="0.3" y="13" width="1.400" height="3" fill="#ff4010"/><rect x="2.3" y="12" width="1.400" height="4" fill="#ff4010"/><rect x="4.3" y="10" width="1.400" height="6" fill="#ff4010"/><rect x="6.3" y="7" width="1.400" height="9" fill="#ff4010"/><rect x="8.3" y="9" width="1.400" height="7" fill="#ff4010"/><rect x="10.3" y="11" width="1.400" height="5" fill="#ff4010"/><rect x="12.3" y="8" width="1.400" height="8" fill="#ff4010"/><rect x="14.3" y="6" width="1.400" height="10" fill="#ff4010"/></svg>
<svg style="left:894px;top:93px;overflow:hidden" width="16" height="16" viewBox="0 0 16 16"><rect x="0.500" y="0.500" width="15" height="15" fill="#fff" stroke="#555" stroke-width="1"/><path d="M5 0.500C6 3 4.500 5 5.500 8S5 13 5.500 15.500M10.500 0.500C9.500 3 11.500 6 10.500 9S11 13 10.500 15.500M0.500 5C3 6 5 4.500 8 5.500S13 5 15.500 5.500M0.500 10.500C3 9.500 6 11.500 9 10.500S13 11 15.500 10.500" fill="none" stroke="#555" stroke-width="1"/></svg>
<svg style="left:912px;top:93px;overflow:hidden" width="16" height="16" viewBox="0 0 16 16"><rect width="16" height="16" fill="#000"/><linearGradient id="wvt50" x1="0" y1="0" x2="0" y2="1"><stop offset="0" stop-color="#b020e0"/><stop offset="0.3" stop-color="#e040e0"/><stop offset="0.45" stop-color="#2080ff"/><stop offset="0.6" stop-color="#20e0e0"/><stop offset="0.78" stop-color="#40e040"/><stop offset="1" stop-color="#f0e020"/></linearGradient><path d="M0 0H2.500L4.500 9.500L6.800 0H9.200L11.500 9.500L13.500 0H16L13 16H10.200L8 6.500L5.800 16H3Z" fill="url(#wvt50)"/></svg>
<svg style="left:374px;top:168px;overflow:hidden" width="16" height="16" viewBox="0 0 16 16"><rect width="16" height="16" fill="#000"/></svg>
<svg style="left:417px;top:168px;overflow:hidden" width="16" height="16" viewBox="0 0 16 16"><rect x="0.5" y="0.5" width="15" height="15" fill="#fff" stroke="#000" stroke-width="1.1"/></svg>
<svg style="left:460px;top:168px;overflow:hidden" width="16" height="16" viewBox="0 0 16 16"><rect width="4.2" height="16" fill="#0000ff"/><rect x="4" width="7.7" height="16" fill="#00ff00"/><rect x="11.5" width="4.5" height="16" fill="#ff0000"/></svg>
<svg style="left:503px;top:168px;overflow:hidden" width="16" height="16" viewBox="0 0 16 16"><radialGradient id="bfp3" cx="0.5" cy="0.5" r="0.56"><stop offset="0" stop-color="#ff1000"/><stop offset="0.18" stop-color="#ff9000"/><stop offset="0.3" stop-color="#e0e020"/><stop offset="0.45" stop-color="#30d030"/><stop offset="0.62" stop-color="#20c0d0"/><stop offset="0.8" stop-color="#3050f0"/><stop offset="1" stop-color="#d020c0"/></radialGradient><rect width="16" height="16" fill="url(#bfp3)"/><path d="M0 0L16 16M16 0L0 16" stroke="#40d040" stroke-width="5.5" opacity=".55"/><path d="M0 0L16 16M16 0L0 16" stroke="#e8d020" stroke-width="3.6" opacity=".8"/><path d="M0 0L16 16M16 0L0 16" stroke="#ff2a08" stroke-width="1.9"/></svg>
<svg style="left:546px;top:168px;overflow:hidden" width="16" height="16" viewBox="0 0 16 16"><rect width="16" height="16" fill="#0c0400"/><linearGradient id="cdp4" x1="0" y1="0" x2="0.3" y2="1"><stop offset="0" stop-color="#e83818"/><stop offset="0.5" stop-color="#ff5a30"/><stop offset="1" stop-color="#ffb070"/></linearGradient><path d="M7 0.500C9.500 0.500 11.500 2 12 4.500C12.500 7 13 8.500 12.500 11C12.300 13 12 14.500 11 15.500H6.500C6.500 14 5.500 13.500 5 12C4.500 10.500 5.500 9.500 5.500 8C5 6 5.500 2 7 0.500Z" fill="url(#cdp4)"/><path d="M6 10C7 9 8 9.500 8 11" stroke="#ff8050" stroke-width="1" fill="none"/></svg>
<svg style="left:589px;top:168px;overflow:hidden" width="16" height="16" viewBox="0 0 16 16"><rect width="16" height="16" fill="#000"/><circle cx="4.5" cy="9" r="2.3" fill="#18c818"/><circle cx="8.2" cy="5" r="2.2" fill="#f0e020"/><circle cx="11.5" cy="10.5" r="2.3" fill="#e82020"/></svg>
<svg style="left:632px;top:168px;overflow:hidden" width="16" height="16" viewBox="0 0 16 16"><linearGradient id="cwp6"><stop offset="0" stop-color="#a040f0"/><stop offset="0.5" stop-color="#c890f8"/><stop offset="1" stop-color="#f4e8ff"/></linearGradient><rect width="16" height="16" fill="url(#cwp6)"/></svg>
<svg style="left:675px;top:168px;overflow:hidden" width="16" height="16" viewBox="0 0 16 16"><linearGradient id="cup7"><stop offset="0" stop-color="#e86010"/><stop offset="0.25" stop-color="#a09020"/><stop offset="0.45" stop-color="#207010"/><stop offset="0.5" stop-color="#0a3a08"/><stop offset="0.55" stop-color="#207010"/><stop offset="0.75" stop-color="#a09020"/><stop offset="1" stop-color="#e86010"/></linearGradient><rect width="16" height="16" fill="url(#cup7)"/></svg>
<svg style="left:718px;top:168px;overflow:hidden" width="16" height="16" viewBox="0 0 16 16"><rect width="16" height="16" fill="#000"/><text x="1" y="7" font-family="Liberation Sans, sans-serif" font-size="7.5" font-weight="bold" fill="#e01818">D</text><text x="5" y="12" font-family="Liberation Sans, sans-serif" font-size="7.5" font-weight="bold" fill="#20d020">M</text><text x="10.5" y="16" font-family="Liberation Sans, sans-serif" font-size="7.5" fill="#fff">X</text></svg>
<svg style="left:374px;top:211px;overflow:hidden" width="16" height="16" viewBox="0 0 16 16"><path d="M4.5 0.8h7l3.7 3.7v7l-3.7 3.7h-7l-3.7-3.7v-7z" fill="#fff" stroke="#2a7fd8" stroke-width="1.2"/><rect x="4" y="4" width="2.6" height="2.3" fill="#2a7fd8"/><rect x="9.4" y="4" width="2.6" height="2.3" fill="#2a7fd8"/><path d="M3.3 9h9.4c0 2.5-2 4-4.7 4s-4.7-1.5-4.7-4z" fill="#fff" stroke="#2a7fd8" stroke-width="1.1"/></svg>
<svg style="left:417px;top:211px;overflow:hidden" width="16" height="16" viewBox="0 0 16 16"><rect width="16" height="16" fill="#000"/><path d="M8 8L15.05 5.43A7.5 7.5 0 0 1 15.39 9.30Z" fill="#ff0000" stroke="#ff0000" stroke-width="0.4"/><path d="M8 8L15.39 9.30A7.5 7.5 0 0 1 13.75 12.82Z" fill="#ffff00" stroke="#ffff00" stroke-width="0.4"/><path d="M8 8L13.75 12.82A7.5 7.5 0 0 1 10.57 15.05Z" fill="#00ff00" stroke="#00ff00" stroke-width="0.4"/><path d="M8 8L10.57 15.05A7.5 7.5 0 0 1 6.70 15.39Z" fill="#00ffff" stroke="#00ffff" stroke-width="0.4"/><path d="M8 8L6.70 15.39A7.5 7.5 0 0 1 3.18 13.75Z" fill="#0000ff" stroke="#0000ff" stroke-width="0.4"/><path d="M8 8L3.18 13.75A7.5 7.5 0 0 1 0.95 10.57Z" fill="#ff00ff" stroke="#ff00ff" stroke-width="0.4"/><path d="M8 8L0.95 10.57A7.5 7.5 0 0 1 0.61 6.70Z" fill="#ff0000" stroke="#ff0000" stroke-width="0.4"/><path d="M8 8L0.61 6.70A7.5 7.5 0 0 1 2.25 3.18Z" fill="#ffff00" stroke="#ffff00" stroke-width="0.4"/><path d="M8 8L2.25 3.18A7.5 7.5 0 0 1 5.43 0.95Z" fill="#00ff00" stroke="#00ff00" stroke-width="0.4"/><path d="M8 8L5.43 0.95A7.5 7.5 0 0 1 9.30 0.61Z" fill="#00ffff" stroke="#00ffff" stroke-width="0.4"/><path d="M8 8L9.30 0.61A7.5 7.5 0 0 1 12.82 2.25Z" fill="#0000ff" stroke="#0000ff" stroke-width="0.4"/><path d="M8 8L12.82 2.25A7.5 7.5 0 0 1 15.05 5.43Z" fill="#ff00ff" stroke="#ff00ff" stroke-width="0.4"/></svg>
<svg style="left:460px;top:211px;overflow:hidden" width="16" height="16" viewBox="0 0 16 16"><rect width="16" height="16" fill="#0a1018"/><rect x="1.5" y="7" width="2.3" height="8" fill="#88d8e0"/><rect x="5.5" y="4" width="2.3" height="11" fill="#88d8e0"/><rect x="9.5" y="9" width="2.3" height="6" fill="#88d8e0"/><rect x="13" y="2" width="2.3" height="13" fill="#88d8e0"/></svg>
<svg style="left:503px;top:211px;overflow:hidden" width="16" height="16" viewBox="0 0 16 16"><linearGradient id="fip12" x1="0" y1="0" x2="0" y2="1"><stop offset="0" stop-color="#000"/><stop offset="0.35" stop-color="#100000"/><stop offset="0.6" stop-color="#a00800"/><stop offset="0.8" stop-color="#ff3000"/><stop offset="1" stop-color="#ff9020"/></linearGradient><rect width="16" height="16" fill="url(#fip12)"/></svg>
<svg style="left:546px;top:211px;overflow:hidden" width="16" height="16" viewBox="0 0 16 16"><radialGradient id="fwp13" cx="0.55" cy="0.45" r="0.6"><stop offset="0" stop-color="#7a3010"/><stop offset="0.5" stop-color="#3a1808"/><stop offset="1" stop-color="#180a06"/></radialGradient><rect width="16" height="16" fill="url(#fwp13)"/><circle cx="9" cy="5" r="0.8" fill="#c05020"/><circle cx="6" cy="9" r="0.7" fill="#904018"/><circle cx="11" cy="10" r="0.7" fill="#a04818"/><circle cx="8" cy="12" r="0.6" fill="#803010"/></svg>
<svg style="left:590px;top:212px;overflow:hidden" width="16" height="16" viewBox="0 0 16 16"><linearGradient id="gxp14" x1="0" y1="0" x2="1" y2="1"><stop offset="0" stop-color="#2060ff"/><stop offset="0.5" stop-color="#8030f0"/><stop offset="1" stop-color="#ff10d0"/></linearGradient><rect width="16" height="16" fill="url(#gxp14)"/><path d="M0 16V11.500C2 13 4 14 6.500 14.500L4 16Z" fill="#e81020"/><path d="M0 0V11C1 6 4 3 8 3C11.500 3 13.500 5.500 13.500 8.500C13.500 11.500 11.500 13.500 8.500 13.500C6 13.500 4.500 11.500 4.500 9.500C4.500 7.500 6 6.500 7.500 6.500" fill="none" stroke="#101018" stroke-width="2.6"/><path d="M2 11C1.500 7 4.500 3.500 8 3.500" fill="none" stroke="#20d8e8" stroke-width="2.4"/><path d="M8 3.500C11 3.500 13 5.800 13 8.500" fill="none" stroke="#30e0a0" stroke-width="2.4"/><path d="M13 8.500C13 11 11 13 8.500 13" fill="none" stroke="#40e020" stroke-width="2.4"/><path d="M8.500 13C6.500 13 5 11.500 5 9.800" fill="none" stroke="#e0e020" stroke-width="2.2"/><path d="M5 9.800C5 8 6.300 7 7.600 7C9 7 9.800 8 9.800 9" fill="none" stroke="#f06010" stroke-width="1.8"/><circle cx="8.300" cy="9.300" r="1" fill="#e01080"/></svg>
<svg style="left:633px;top:212px;overflow:hidden" width="16" height="16" viewBox="0 0 16 16"><linearGradient id="gap15" x1="0" y1="0" x2="0" y2="1"><stop offset="0" stop-color="#40c020"/><stop offset="1" stop-color="#186008"/></linearGradient><rect width="16" height="16" fill="#000"/><rect x="0.5" y="1.5" width="15" height="3.2" fill="url(#gap15)"/><rect x="0.5" y="6.4" width="15" height="3.2" fill="url(#gap15)"/><rect x="0.5" y="11.3" width="15" height="3.2" fill="url(#gap15)"/></svg>
<svg style="left:676px;top:212px;overflow:hidden" width="16" height="16" viewBox="0 0 16 16"><rect width="16" height="16" fill="#fff" opacity=".9"/><path d="M3.500 0.500h9c1 0 1.500 .500 1.500 1.500v7.500l2 2.500H0l2-2.500V2c0-1 .500-1.500 1.500-1.500z" fill="#38a8b0"/><text x="4.3" y="9.3" font-family="Liberation Sans, sans-serif" font-size="9.5" font-weight="bold" fill="#fff">G</text><path d="M3.500 12.500v3.500M6.500 12.500v3.500M9.500 12.500v3.500M12.500 12.500v3.500" stroke="#101010" stroke-width="1.1"/></svg>
<svg style="left:719px;top:212px;overflow:hidden" width="16" height="16" viewBox="0 0 16 16"><rect width="16" height="16" fill="#4020b0"/><path d="M0 0h3.500L0 5z" fill="#f0d020"/><path d="M3 0h5L5 4z" fill="#c01880"/><path d="M8 0h5l-2 6z" fill="#3030d0"/><path d="M13 0h3v6z" fill="#181030"/><path d="M0 5l4 2-4 4z" fill="#e8a818"/><path d="M4 4l5 3-4 4z" fill="#f0d820"/><path d="M9 7l4-3 3 5-4 3z" fill="#e02090"/><path d="M0 11l5 0 2 5H0z" fill="#d01888"/><path d="M5 11l5-2 3 4-5 3z" fill="#f0c020"/><path d="M13 13l3-4v7h-5z" fill="#181030"/><path d="M7 16l2-3 3 3z" fill="#e86818"/><path d="M10 6l3 3-3 2z" fill="#2840d8"/></svg>
<svg style="left:375px;top:255px;overflow:hidden" width="16" height="16" viewBox="0 0 16 16"><rect width="16" height="16" fill="#4a4a08"/><ellipse cx="4.1" cy="8.7" rx="1.3" ry="1.2" fill="#8a8a18"/><ellipse cx="9.6" cy="14.1" rx="1.4" ry="1.1" fill="#9a9820"/><ellipse cx="15.4" cy="7.6" rx="1.7" ry="1.1" fill="#9a9820"/><ellipse cx="4.0" cy="2.8" rx="1.7" ry="1.0" fill="#8a8a18"/><ellipse cx="10.6" cy="1.5" rx="1.6" ry="1.2" fill="#2a2a04"/><ellipse cx="12.2" cy="12.9" rx="1.2" ry="1.2" fill="#707010"/><ellipse cx="11.2" cy="14.3" rx="1.3" ry="1.3" fill="#707010"/><ellipse cx="15.0" cy="2.5" rx="1.3" ry="0.8" fill="#707010"/><ellipse cx="3.8" cy="15.0" rx="1.3" ry="1.2" fill="#2a2a04"/><ellipse cx="6.8" cy="13.0" rx="1.5" ry="1.1" fill="#707010"/><ellipse cx="9.3" cy="14.1" rx="1.5" ry="1.4" fill="#2a2a04"/><ellipse cx="15.4" cy="10.6" rx="1.1" ry="1.3" fill="#8a8a18"/><ellipse cx="11.2" cy="3.7" rx="1.7" ry="1.1" fill="#2a2a04"/><ellipse cx="2.4" cy="7.7" rx="1.5" ry="1.1" fill="#2a2a04"/><ellipse cx="12.5" cy="6.7" rx="1.1" ry="1.0" fill="#707010"/><ellipse cx="13.6" cy="1.2" rx="1.5" ry="0.8" fill="#2a2a04"/><ellipse cx="8.8" cy="14.3" rx="1.2" ry="0.9" fill="#8a8a18"/><ellipse cx="5.1" cy="1.7" rx="1.5" ry="0.8" fill="#9a9820"/><ellipse cx="15.1" cy="4.9" rx="1.2" ry="1.2" fill="#2a2a04"/><ellipse cx="5.2" cy="14.9" rx="1.7" ry="1.0" fill="#707010"/><ellipse cx="13.5" cy="6.3" rx="1.7" ry="1.2" fill="#8a8a18"/><ellipse cx="9.8" cy="14.6" rx="1.4" ry="1.1" fill="#9a9820"/></svg>
<svg style="left:418px;top:255px;overflow:hidden" width="16" height="16" viewBox="0 0 16 16"><rect width="16" height="16" fill="#000"/><path d="M8.5 0L7.5 3 9 5 7 8 8.8 10.5 7.5 13 8.5 16" fill="none" stroke="#fff" stroke-width="1.5"/></svg>
<svg style="left:461px;top:255px;overflow:hidden" width="16" height="16" viewBox="0 0 16 16"><rect width="16" height="16" fill="#080004"/><path d="M8 2.5L13.5 10.5 4 13Z" fill="none" stroke="#e02038" stroke-width="1"/></svg>
<svg style="left:504px;top:255px;overflow:hidden" width="16" height="16" viewBox="0 0 16 16"><rect width="16" height="16" fill="#02040c"/><radialGradient id="lqp21" cx="0.45" cy="0.6" r="0.6"><stop offset="0" stop-color="#80e0ff"/><stop offset="0.6" stop-color="#1890e0"/><stop offset="1" stop-color="#0850a0"/></radialGradient><path d="M8 2.5C8.5 5 12 7.5 12 11A4 4 0 0 1 4 11C4 7.5 7.5 5 8 2.5Z" fill="url(#lqp21)"/><rect x="7.2" y="1" width="1.6" height="5" fill="#2080d0"/></svg>
<svg style="left:547px;top:255px;overflow:hidden" width="16" height="16" viewBox="0 0 16 16"><rect x="1.5" y="1.5" width="13" height="13" fill="#000"/><rect x="1" y="1" width="14" height="14" fill="none" stroke="#3a78c8" stroke-width="2" stroke-dasharray="2.2 2.45"/></svg>
<svg style="left:590px;top:255px;overflow:hidden" width="16" height="16" viewBox="0 0 16 16"><rect width="16" height="16" fill="#2a2a04"/><rect x="9.8" y="8.9" width="1.4" height="6.8" fill="#8a8a18"/><rect x="13.1" y="9.3" width="1.0" height="3.2" fill="#a0a028"/><rect x="2.2" y="5.6" width="1.0" height="5.2" fill="#a0a028"/><rect x="0.7" y="2.6" width="1.0" height="6.7" fill="#6a6a10"/><rect x="2.9" y="9.6" width="0.9" height="5.5" fill="#a0a028"/><rect x="2.5" y="11.7" width="0.8" height="6.1" fill="#a0a028"/><rect x="13.6" y="3.5" width="1.5" height="5.2" fill="#a0a028"/><rect x="3.2" y="11.6" width="0.9" height="6.9" fill="#6a6a10"/><rect x="5.0" y="4.3" width="0.9" height="3.6" fill="#8a8a18"/><rect x="5.5" y="9.8" width="1.2" height="5.4" fill="#1a1a02"/><rect x="1.5" y="4.3" width="1.0" height="5.8" fill="#a0a028"/><rect x="7.7" y="8.5" width="0.8" height="6.9" fill="#8a8a18"/><rect x="14.7" y="4.3" width="1.1" height="5.2" fill="#6a6a10"/><rect x="6.0" y="6.9" width="0.8" height="3.2" fill="#a0a028"/></svg>
<svg style="left:633px;top:255px;overflow:hidden" width="16" height="16" viewBox="0 0 16 16"><rect width="16" height="16" fill="#000"/><rect x="0.5" y="1" width="14" height="1.8" fill="#e82020"/><rect x="13" y="1" width="2.5" height="1.8" fill="#fff"/><rect x="0.5" y="4" width="11" height="1.8" fill="#20c020"/><rect x="10" y="4" width="2.5" height="1.8" fill="#fff"/><rect x="0.5" y="7" width="9" height="1.8" fill="#f0d020"/><rect x="8.5" y="7" width="2" height="1.8" fill="#fff"/><rect x="0.5" y="10" width="6.5" height="1.8" fill="#40b0e8"/><rect x="6" y="10" width="2" height="1.8" fill="#fff"/><rect x="0.5" y="13" width="4.5" height="1.8" fill="#f0d020"/></svg>
<svg style="left:676px;top:255px;overflow:hidden" width="16" height="16" viewBox="0 0 16 16"><rect width="16" height="16" fill="#fff" opacity=".85"/><path d="M6 3.5L14 1.5V11.5M6 3.5V13" fill="none" stroke="#000" stroke-width="1.6"/><path d="M6 5.5L14 3.5" stroke="#000" stroke-width="1.6"/><ellipse cx="4" cy="13" rx="2.7" ry="2" fill="#000"/><ellipse cx="12" cy="11.5" rx="2.7" ry="2" fill="#000"/></svg>
<svg style="left:719px;top:255px;overflow:hidden" width="16" height="16" viewBox="0 0 16 16"><rect width="16" height="16" fill="#fff" opacity=".85"/><path d="M1 16V4.5C1 2 3 1 5 1h3c3 0 4 2.5 6.5 3 1 .3 1.500 1 1.500 2V16z" fill="#000"/><path d="M4 10v6M7 10v6M10 10v6M13 10v6" stroke="#fff" stroke-width="1"/></svg>
<svg style="left:375px;top:298px;overflow:hidden" width="16" height="16" viewBox="0 0 16 16"><rect width="16" height="16" fill="#d8d4d0"/><circle cx="10.5" cy="3.5" r="1.8" fill="#f0b0a0"/><path d="M0 16V10L5 4.500 9.500 9.500 12.500 7 16 11V16Z" fill="#980858"/></svg>
<svg style="left:418px;top:298px;overflow:hidden" width="16" height="16" viewBox="0 0 16 16"><rect width="16" height="16" fill="#000"/><path d="M8 8C8.500 5 10 3 13.500 3.500C15 1.500 13 0 10.500 0C7 0 6 4.500 8 8Z" fill="#10e020"/><path d="M8 8C5 8.500 3 10.500 3.500 14C1.500 16 0 13 0 10.500C0 6.500 4.500 5.500 8 8Z" fill="#f8f010"/><path d="M3.500 1C2 3.500 3.500 6.500 8 8C4.500 5.500 5.500 2.500 3.500 1Z" fill="#f8f010"/><path d="M8 8C11 8 13.500 9 16 7.500V14C14 15.500 9 14 8 8Z" fill="#f01010"/><path d="M8 8C8 11.500 10 14.500 13.500 16H8.500C6.500 13.500 7 10.500 8 8Z" fill="#f01010"/></svg>
<svg style="left:461px;top:298px;overflow:hidden" width="16" height="16" viewBox="0 0 16 16"><rect width="16" height="16" fill="#18c040"/><circle cx="4" cy="4" r="2.6" fill="none" stroke="#1850d8" stroke-width="1.5"/><circle cx="4" cy="4" r="0.9" fill="#20e0c0"/><circle cx="12" cy="4" r="2.6" fill="none" stroke="#1850d8" stroke-width="1.5"/><circle cx="12" cy="4" r="0.9" fill="#20e0c0"/><circle cx="4" cy="12" r="2.6" fill="none" stroke="#1850d8" stroke-width="1.5"/><circle cx="4" cy="12" r="0.9" fill="#20e0c0"/><circle cx="12" cy="12" r="2.6" fill="none" stroke="#1850d8" stroke-width="1.5"/><circle cx="12" cy="12" r="0.9" fill="#20e0c0"/><circle cx="8" cy="8" r="2.6" fill="none" stroke="#1850d8" stroke-width="1.5"/><circle cx="8" cy="8" r="0.9" fill="#20e0c0"/><circle cx="0" cy="8" r="1.8" fill="#1040c0"/><circle cx="8" cy="0" r="1.8" fill="#1040c0"/><circle cx="16" cy="8" r="1.8" fill="#1040c0"/><circle cx="8" cy="16" r="1.8" fill="#1040c0"/><circle cx="0" cy="0" r="1.8" fill="#1040c0"/><circle cx="16" cy="0" r="1.8" fill="#1040c0"/><circle cx="0" cy="16" r="1.8" fill="#1040c0"/><circle cx="16" cy="16" r="1.8" fill="#1040c0"/></svg>
<svg style="left:504px;top:298px;overflow:hidden" width="16" height="16" viewBox="0 0 16 16"><rect width="16" height="16" fill="#700000"/><rect x="1.5" y="1.5" width="13" height="13" fill="#e00808"/><rect x="3.5" y="3.5" width="9" height="9" fill="#900000"/><rect x="5" y="5" width="6" height="6" fill="#100000"/></svg>
<svg style="left:547px;top:298px;overflow:hidden" width="16" height="16" viewBox="0 0 16 16"><rect width="16" height="16" fill="#fff" opacity=".7"/><path d="M3 5l6-2 5 3v6l-5 3-6-3z" fill="#5a5a58"/><path d="M3 5l6 3v7l-6-3z" fill="#3e3e3c"/><path d="M4 2.500c1.500-1 3.500-1 4.500 0v3h-4.500z" fill="#484846"/><circle cx="11.500" cy="9" r="1.500" fill="#8a8a88"/></svg>
<svg style="left:590px;top:298px;overflow:hidden" width="16" height="16" viewBox="0 0 16 16"><radialGradient id="shp32" cx="0.4" cy="0.35" r="0.65"><stop offset="0" stop-color="#ffff60"/><stop offset="0.5" stop-color="#d0d010"/><stop offset="1" stop-color="#606000"/></radialGradient><rect width="16" height="16" fill="#3a3a08"/><circle cx="8" cy="8" r="6.8" fill="url(#shp32)"/><path d="M1.500 10c4 2 9 2 13 0" stroke="#707008" stroke-width="1" fill="none"/></svg>
<svg style="left:633px;top:298px;overflow:hidden" width="16" height="16" viewBox="0 0 16 16"><rect width="16" height="16" fill="#fff" opacity=".85"/><rect x="1.700" y="1.700" width="10" height="7.500" fill="none" stroke="#f06080" stroke-width="1.400"/><path d="M8.500 6L12.500 14.500H4.500Z" fill="none" stroke="#88a8e0" stroke-width="1.300"/><path d="M4 15.300h9" stroke="#88a8e0" stroke-width="1.200"/><circle cx="13.500" cy="8.500" r="1.800" fill="none" stroke="#a8e0b8" stroke-width="1"/></svg>
<svg style="left:676px;top:298px;overflow:hidden" width="16" height="16" viewBox="0 0 16 16"><radialGradient id="smp34" cx="0.5" cy="0.5" r="0.7"><stop offset="0" stop-color="#f0a020"/><stop offset="0.6" stop-color="#c07818"/><stop offset="1" stop-color="#7a4a10"/></radialGradient><rect width="16" height="16" fill="url(#smp34)"/><circle cx="5" cy="6" r="1.500" fill="#f8b838" opacity=".7"/><circle cx="11" cy="10" r="1.500" fill="#f8b838" opacity=".6"/><circle cx="10" cy="4" r="1" fill="#905810" opacity=".7"/><circle cx="5" cy="12" r="1.200" fill="#905810" opacity=".7"/></svg>
<svg style="left:719px;top:298px;overflow:hidden" width="16" height="16" viewBox="0 0 16 16"><radialGradient id="swp35" cx="0.5" cy="0.5" r="0.5"><stop offset="0" stop-color="#ffe060"/><stop offset="0.35" stop-color="#f09040"/><stop offset="1" stop-color="#301010" stop-opacity="0"/></radialGradient><rect width="16" height="16" fill="#100808"/><ellipse cx="8" cy="9" rx="6.500" ry="3" fill="none" stroke="#e83898" stroke-width="1.300"/><ellipse cx="8" cy="7.500" rx="3" ry="6" fill="url(#swp35)"/></svg>
<svg style="left:375px;top:341px;overflow:hidden" width="16" height="16" viewBox="0 0 16 16"><rect width="16" height="16" fill="#000"/><path d="M0.500 16C2 8.500 14 8.500 15.500 16" fill="none" stroke="#20d8c0" stroke-width="1.300"/><path d="M0 6.500C2.500 3 5 1 7 0M16 6.500C13.500 3 11 1 9 0" fill="none" stroke="#20d8c0" stroke-width="1.100"/><path d="M4.500 2.500C5.500 1.500 6.500 0.800 8 0.300C9.500 0.800 10.500 1.500 11.500 2.500" fill="none" stroke="#e82840" stroke-width="1.200"/></svg>
<svg style="left:418px;top:341px;overflow:hidden" width="16" height="16" viewBox="0 0 16 16"><rect width="16" height="16" fill="#0c0c02"/><circle cx="3" cy="3" r="2" fill="#8a8a30"/><circle cx="3" cy="3" r="1.0" fill="#b0b050"/><circle cx="9" cy="2.5" r="2" fill="#8a8a30"/><circle cx="9" cy="2.5" r="1.0" fill="#b0b050"/><circle cx="14" cy="4" r="1.8" fill="#8a8a30"/><circle cx="14" cy="4" r="0.9" fill="#b0b050"/><circle cx="5.5" cy="8" r="2.2" fill="#8a8a30"/><circle cx="5.5" cy="8" r="1.1" fill="#b0b050"/><circle cx="11.5" cy="8.5" r="2.2" fill="#8a8a30"/><circle cx="11.5" cy="8.5" r="1.1" fill="#b0b050"/><circle cx="2.5" cy="13" r="2" fill="#8a8a30"/><circle cx="2.5" cy="13" r="1.0" fill="#b0b050"/><circle cx="8.5" cy="13.5" r="2" fill="#8a8a30"/><circle cx="8.5" cy="13.5" r="1.0" fill="#b0b050"/><circle cx="14" cy="13" r="1.8" fill="#8a8a30"/><circle cx="14" cy="13" r="0.9" fill="#b0b050"/></svg>
<svg style="left:461px;top:341px;overflow:hidden" width="16" height="16" viewBox="0 0 16 16"><rect width="16" height="16" fill="#181818"/><ellipse cx="4" cy="4" rx="3" ry="2" fill="#707070"/><ellipse cx="11" cy="3.5" rx="3.5" ry="2" fill="#8a8a8a"/><ellipse cx="8" cy="8" rx="4" ry="2.2" fill="#a0a0a0"/><ellipse cx="3.5" cy="11" rx="2.5" ry="2" fill="#606060"/><ellipse cx="12" cy="12" rx="3" ry="2" fill="#787878"/><ellipse cx="8" cy="13.5" rx="2.5" ry="1.5" fill="#505050"/></svg>
<svg style="left:504px;top:341px;overflow:hidden" width="16" height="16" viewBox="0 0 16 16"><rect width="16" height="16" fill="#000"/><path d="M-8.5 16L-2.5 0h2.700L-5.8 16z" fill="#f0e020"/><path d="M-3.3 16L2.7 0h2.700L-0.6 16z" fill="#e01818"/><path d="M1.9 16L7.9 0h2.700L4.6 16z" fill="#20d020"/><path d="M7.1 16L13.1 0h2.700L9.8 16z" fill="#f0e020"/><path d="M12.3 16L18.3 0h2.700L15.0 16z" fill="#e01818"/><path d="M17.5 16L23.5 0h2.700L20.2 16z" fill="#20d020"/></svg>
<svg style="left:547px;top:341px;overflow:hidden" width="16" height="16" viewBox="0 0 16 16"><rect width="16" height="16" fill="#000"/><circle cx="8" cy="8" r="5.600" fill="#607010" stroke="#b8d020" stroke-width="1.800"/><circle cx="8" cy="8" r="3.200" fill="#30a020"/><path d="M8 5.500l.800 1.700 1.800.300-1.300 1.300.300 1.800L8 9.800l-1.600.800.300-1.800-1.300-1.300 1.800-.300z" fill="#e01818"/></svg>
<svg style="left:590px;top:341px;overflow:hidden" width="16" height="16" viewBox="0 0 16 16"><rect width="8" height="16" fill="#fff"/><rect x="8" width="8" height="16" fill="#000"/><text x="0.3" y="13" font-family="Liberation Sans, sans-serif" font-size="11" fill="#000" textLength="7.4" lengthAdjust="spacingAndGlyphs">A</text><text x="8.6" y="13" font-family="Liberation Sans, sans-serif" font-size="11" fill="#fff" textLength="7" lengthAdjust="spacingAndGlyphs">B</text></svg>
<svg style="left:633px;top:341px;overflow:hidden" width="16" height="16" viewBox="0 0 16 16"><rect width="16" height="16" fill="#0a1840"/><path d="M1.6 3h2.8M3 1.6v2.8" stroke="#fff" stroke-width="0.9"/><path d="M2.2 2.2l1.7 1.7M3.8 2.2l-1.7 1.7" stroke="#6090e0" stroke-width="0.6"/><path d="M8 2h2M9 1v2" stroke="#fff" stroke-width="0.9"/><path d="M8.4 1.4l1.2 1.2M9.6 1.4l-1.2 1.2" stroke="#6090e0" stroke-width="0.6"/><path d="M12.1 4h2.8M13.5 2.6v2.8" stroke="#fff" stroke-width="0.9"/><path d="M12.7 3.2l1.7 1.7M14.3 3.2l-1.7 1.7" stroke="#6090e0" stroke-width="0.6"/><path d="M4.6 7h2.8M6 5.6v2.8" stroke="#fff" stroke-width="0.9"/><path d="M5.2 6.2l1.7 1.7M6.8 6.2l-1.7 1.7" stroke="#6090e0" stroke-width="0.6"/><path d="M9.6 8.5h2.8M11 7.1v2.8" stroke="#fff" stroke-width="0.9"/><path d="M10.2 7.7l1.7 1.7M11.8 7.7l-1.7 1.7" stroke="#6090e0" stroke-width="0.6"/><path d="M1.3 11h2.4M2.5 9.8v2.4" stroke="#fff" stroke-width="0.9"/><path d="M1.8 10.3l1.4 1.4M3.2 10.3l-1.4 1.4" stroke="#6090e0" stroke-width="0.6"/><path d="M6.1 12.5h2.8M7.5 11.1v2.8" stroke="#fff" stroke-width="0.9"/><path d="M6.7 11.7l1.7 1.7M8.3 11.7l-1.7 1.7" stroke="#6090e0" stroke-width="0.6"/><path d="M11.8 13h2.4M13 11.8v2.4" stroke="#fff" stroke-width="0.9"/><path d="M12.3 12.3l1.4 1.4M13.7 12.3l-1.4 1.4" stroke="#6090e0" stroke-width="0.6"/><path d="M14.2 9h1.6M15 8.2v1.6" stroke="#fff" stroke-width="0.9"/><path d="M14.5 8.5l1.0 1.0M15.5 8.5l-1.0 1.0" stroke="#6090e0" stroke-width="0.6"/><path d="M0.19999999999999996 7h1.6M1 6.2v1.6" stroke="#fff" stroke-width="0.9"/><path d="M0.5 6.5l1.0 1.0M1.5 6.5l-1.0 1.0" stroke="#6090e0" stroke-width="0.6"/></svg>
<svg style="left:676px;top:341px;overflow:hidden" width="16" height="16" viewBox="0 0 16 16"><rect width="16" height="16" fill="#0a0000"/><path d="M1.500 14.500C1.500 9 3 7.500 7 8.500C10 9.200 12 8 14.500 7.500" fill="none" stroke="#e83040" stroke-width="1.200"/></svg>
<svg style="left:719px;top:341px;overflow:hidden" width="16" height="16" viewBox="0 0 16 16"><rect width="16" height="16" fill="#100000"/><text x="1" y="7" font-family="Liberation Sans, sans-serif" font-size="6.5" font-weight="bold" fill="#e01818" textLength="14" lengthAdjust="spacingAndGlyphs">TEXT</text><text x="1" y="14.5" font-family="Liberation Sans, sans-serif" font-size="6.5" font-weight="bold" fill="#18b818" textLength="14" lengthAdjust="spacingAndGlyphs">XMAS</text></svg>
<svg style="left:375px;top:384px;overflow:hidden" width="16" height="16" viewBox="0 0 16 16"><rect width="16" height="16" fill="#000"/><linearGradient id="trp45" x1="0" y1="0" x2="0" y2="1"><stop offset="0" stop-color="#40e040"/><stop offset="1" stop-color="#107010"/></linearGradient><path d="M7 1h2l5 15H2z" fill="url(#trp45)"/><path d="M8 1v15" stroke="#60ff60" stroke-width="0.8" opacity=".6"/></svg>
<svg style="left:418px;top:384px;overflow:hidden" width="16" height="16" viewBox="0 0 16 16"><rect width="16" height="16" fill="#283808"/><rect x="6.2" y="8.0" width="2.9" height="2.2" fill="#d0d8a0"/><rect x="12.7" y="2.0" width="2.7" height="2.2" fill="#20a020"/><rect x="0.5" y="3.9" width="1.6" height="2.7" fill="#f0e8c0"/><rect x="8.5" y="5.3" width="2.2" height="2.6" fill="#20a020"/><rect x="9.0" y="12.3" width="1.6" height="1.6" fill="#d82020"/><rect x="8.6" y="11.4" width="2.0" height="2.4" fill="#d82020"/><rect x="7.3" y="9.2" width="2.2" height="2.5" fill="#101808"/><rect x="9.5" y="5.5" width="2.3" height="2.9" fill="#e8e0b0"/><rect x="10.3" y="4.0" width="1.8" height="1.9" fill="#e8e0b0"/><rect x="8.0" y="0.7" width="1.7" height="1.9" fill="#e8e0b0"/><rect x="14.3" y="12.6" width="1.5" height="1.8" fill="#f0e8c0"/><rect x="6.5" y="14.7" width="2.1" height="1.6" fill="#d82020"/><rect x="11.5" y="3.3" width="1.6" height="2.0" fill="#c8c890"/><rect x="11.1" y="0.9" width="1.9" height="1.7" fill="#f0e8c0"/><rect x="6.4" y="6.8" width="2.5" height="1.8" fill="#d0d8a0"/><rect x="2.1" y="10.7" width="1.7" height="2.5" fill="#e8e0b0"/><rect x="5.3" y="14.8" width="1.5" height="2.8" fill="#f8f0d8"/><rect x="15.0" y="-0.7" width="1.8" height="3.0" fill="#e8e0b0"/><rect x="-0.3" y="1.3" width="2.2" height="1.5" fill="#a8b840"/><rect x="12.3" y="5.2" width="1.6" height="1.8" fill="#d82020"/><rect x="-0.8" y="4.9" width="2.4" height="1.7" fill="#101808"/><rect x="12.3" y="1.2" width="2.1" height="2.4" fill="#f8f0d8"/><rect x="13.5" y="12.1" width="1.9" height="1.8" fill="#d0d8a0"/><rect x="2.1" y="14.2" width="2.8" height="2.4" fill="#c8c890"/><rect x="-0.2" y="0.7" width="2.3" height="1.9" fill="#c8c890"/><rect x="3.1" y="12.2" width="2.4" height="1.9" fill="#20a020"/><rect x="13.9" y="14.6" width="1.7" height="2.2" fill="#e8e0b0"/><rect x="3.5" y="13.7" width="1.8" height="1.5" fill="#f8f0d8"/><rect x="5.6" y="3.0" width="1.6" height="1.9" fill="#d0d8a0"/><rect x="8.2" y="1.1" width="2.0" height="2.8" fill="#a8b840"/><rect x="9.5" y="10.1" width="2.4" height="1.7" fill="#f0e8c0"/><rect x="13.8" y="6.6" width="2.0" height="2.0" fill="#f0e8c0"/><rect x="-0.7" y="9.2" width="2.2" height="2.6" fill="#a8b840"/><rect x="1.2" y="0.2" width="2.2" height="2.1" fill="#f0e8c0"/><rect x="13.4" y="10.8" width="2.6" height="2.7" fill="#a8b840"/><rect x="4.6" y="10.0" width="2.9" height="2.8" fill="#c8c890"/><rect x="14.1" y="-0.5" width="2.2" height="1.5" fill="#c8c890"/><rect x="5.1" y="-0.8" width="1.6" height="1.6" fill="#e8e0b0"/><rect x="14.9" y="13.1" width="2.6" height="2.1" fill="#101808"/><rect x="6.0" y="12.4" width="1.6" height="2.6" fill="#f0e8c0"/><rect x="4.0" y="0.4" width="1.5" height="2.9" fill="#e8e0b0"/><rect x="7.0" y="8.8" width="2.9" height="1.9" fill="#f0e8c0"/><rect x="4.9" y="1.3" width="2.4" height="2.3" fill="#a8b840"/><rect x="9.6" y="6.1" width="2.8" height="2.0" fill="#f8f0d8"/><rect x="2.2" y="5.9" width="2.7" height="2.9" fill="#d82020"/><rect x="5.2" y="8.3" width="2.0" height="1.7" fill="#101808"/></svg>
<svg style="left:461px;top:384px;overflow:hidden" width="16" height="16" viewBox="0 0 16 16"><linearGradient id="vdp47" x1="0" y1="0" x2="0" y2="1"><stop offset="0" stop-color="#b0e0f8"/><stop offset="0.5" stop-color="#3890d0"/><stop offset="1" stop-color="#80c8f0"/></linearGradient><rect width="16" height="16" rx="1" fill="#202830"/><rect x="3.500" y="0.500" width="9" height="15" fill="url(#vdp47)"/><rect x="0.800" y="1" width="1.900" height="2.400" fill="#fff"/><rect x="13.300" y="1" width="1.900" height="2.400" fill="#fff"/><rect x="0.800" y="4.7" width="1.900" height="2.400" fill="#fff"/><rect x="13.300" y="4.7" width="1.900" height="2.400" fill="#fff"/><rect x="0.800" y="8.4" width="1.900" height="2.400" fill="#fff"/><rect x="13.300" y="8.4" width="1.900" height="2.400" fill="#fff"/><rect x="0.800" y="12.1" width="1.900" height="2.400" fill="#fff"/><rect x="13.300" y="12.1" width="1.900" height="2.400" fill="#fff"/></svg>
<svg style="left:504px;top:384px;overflow:hidden" width="16" height="16" viewBox="0 0 16 16"><rect width="16" height="16" fill="#080000"/><rect x="0.3" y="13" width="1.400" height="3" fill="#ff4010"/><rect x="2.3" y="12" width="1.400" height="4" fill="#ff4010"/><rect x="4.3" y="10" width="1.400" height="6" fill="#ff4010"/><rect x="6.3" y="7" width="1.400" height="9" fill="#ff4010"/><rect x="8.3" y="9" width="1.400" height="7" fill="#ff4010"/><rect x="10.3" y="11" width="1.400" height="5" fill="#ff4010"/><rect x="12.3" y="8" width="1.400" height="8" fill="#ff4010"/><rect x="14.3" y="6" width="1.400" height="10" fill="#ff4010"/></svg>
<svg style="left:547px;top:384px;overflow:hidden" width="16" height="16" viewBox="0 0 16 16"><rect x="0.500" y="0.500" width="15" height="15" fill="#fff" stroke="#555" stroke-width="1"/><path d="M5 0.500C6 3 4.500 5 5.500 8S5 13 5.500 15.500M10.500 0.500C9.500 3 11.500 6 10.500 9S11 13 10.500 15.500M0.500 5C3 6 5 4.500 8 5.500S13 5 15.500 5.500M0.500 10.500C3 9.500 6 11.500 9 10.500S13 11 15.500 10.500" fill="none" stroke="#555" stroke-width="1"/></svg>
<svg style="left:590px;top:384px;overflow:hidden" width="16" height="16" viewBox="0 0 16 16"><rect width="16" height="16" fill="#000"/><linearGradient id="wvp50" x1="0" y1="0" x2="0" y2="1"><stop offset="0" stop-color="#b020e0"/><stop offset="0.3" stop-color="#e040e0"/><stop offset="0.45" stop-color="#2080ff"/><stop offset="0.6" stop-color="#20e0e0"/><stop offset="0.78" stop-color="#40e040"/><stop offset="1" stop-color="#f0e020"/></linearGradient><path d="M0 0H2.500L4.500 9.500L6.800 0H9.200L11.500 9.500L13.500 0H16L13 16H10.200L8 6.500L5.800 16H3Z" fill="url(#wvp50)"/></svg>
<div style="left:761px;top:156px;width:41px;height:41px;background:#ff6a6a;border:1px solid #adadad;box-shadow:inset 0 0 0 1px #f4e4e4"></div>
<span class="t" style="left:777.9px;top:169px;">1</span>
<div style="left:804px;top:156px;width:41px;height:41px;background:#ff6a6a;border:1px solid #adadad;box-shadow:inset 0 0 0 1px #f4e4e4"></div>
<span class="t" style="left:820.9px;top:169px;">2</span>
<div style="left:847px;top:156px;width:41px;height:41px;background:#ff6a6a;border:1px solid #adadad;box-shadow:inset 0 0 0 1px #f4e4e4"></div>
<span class="t" style="left:863.9px;top:169px;">3</span>
<div style="left:890px;top:156px;width:41px;height:41px;background:#ff6a6a;border:1px solid #adadad;box-shadow:inset 0 0 0 1px #f4e4e4"></div>
<span class="t" style="left:906.9px;top:169px;">4</span>
<div style="left:933px;top:156px;width:41px;height:41px;background:#ff6a6a;border:1px solid #adadad;box-shadow:inset 0 0 0 1px #f4e4e4"></div>
<span class="t" style="left:949.9px;top:169px;">5</span>
<div style="left:976px;top:156px;width:41px;height:41px;background:#ff6a6a;border:1px solid #adadad;box-shadow:inset 0 0 0 1px #f4e4e4"></div>
<span class="t" style="left:992.9px;top:169px;">6</span>
<div style="left:1019px;top:156px;width:41px;height:41px;background:#ff6a6a;border:1px solid #adadad;box-shadow:inset 0 0 0 1px #f4e4e4"></div>
<span class="t" style="left:1035.9px;top:169px;">7</span>
<div style="left:1062px;top:156px;width:41px;height:41px;background:#ff6a6a;border:1px solid #adadad;box-shadow:inset 0 0 0 1px #f4e4e4"></div>
<span class="t" style="left:1078.9px;top:169px;">8</span>
<div style="left:1105px;top:156px;width:41px;height:41px;background:#ff6a6a;border:1px solid #adadad;box-shadow:inset 0 0 0 1px #f4e4e4"></div>
<span class="t" style="left:1121.9px;top:169px;">9</span>
<div style="left:761px;top:199px;width:41px;height:41px;background:#ff6a6a;border:1px solid #adadad;box-shadow:inset 0 0 0 1px #f4e4e4"></div>
<span class="t" style="left:774.5px;top:212px;">10</span>
<div style="left:804px;top:199px;width:41px;height:41px;background:#ff6a6a;border:1px solid #adadad;box-shadow:inset 0 0 0 1px #f4e4e4"></div>
<span class="t" style="left:818.0px;top:212px;">11</span>
<div style="left:847px;top:199px;width:41px;height:41px;background:#ff6a6a;border:1px solid #adadad;box-shadow:inset 0 0 0 1px #f4e4e4"></div>
<span class="t" style="left:860.5px;top:212px;">12</span>
<div style="left:890px;top:199px;width:41px;height:41px;background:#ff6a6a;border:1px solid #adadad;box-shadow:inset 0 0 0 1px #f4e4e4"></div>
<span class="t" style="left:903.5px;top:212px;">13</span>
<div style="left:933px;top:199px;width:41px;height:41px;background:#ff6a6a;border:1px solid #adadad;box-shadow:inset 0 0 0 1px #f4e4e4"></div>
<span class="t" style="left:946.5px;top:212px;">14</span>
<div style="left:976px;top:199px;width:41px;height:41px;background:#ff6a6a;border:1px solid #adadad;box-shadow:inset 0 0 0 1px #f4e4e4"></div>
<span class="t" style="left:989.5px;top:212px;">15</span>
<div style="left:1019px;top:199px;width:41px;height:41px;background:#ff6a6a;border:1px solid #adadad;box-shadow:inset 0 0 0 1px #f4e4e4"></div>
<span class="t" style="left:1032.5px;top:212px;">16</span>
<div style="left:1062px;top:199px;width:41px;height:41px;background:#ff6a6a;border:1px solid #adadad;box-shadow:inset 0 0 0 1px #f4e4e4"></div>
<span class="t" style="left:1075.5px;top:212px;">17</span>
<div style="left:1105px;top:199px;width:41px;height:41px;background:#ff6a6a;border:1px solid #adadad;box-shadow:inset 0 0 0 1px #f4e4e4"></div>
<span class="t" style="left:1118.5px;top:212px;">18</span>
<div style="left:761px;top:242px;width:41px;height:41px;background:#ff6a6a;border:1px solid #adadad;box-shadow:inset 0 0 0 1px #f4e4e4"></div>
<span class="t" style="left:774.5px;top:255px;">19</span>
<div style="left:804px;top:242px;width:41px;height:41px;background:#ff6a6a;border:1px solid #adadad;box-shadow:inset 0 0 0 1px #f4e4e4"></div>
<span class="t" style="left:817.5px;top:255px;">20</span>
<div style="left:847px;top:242px;width:41px;height:41px;background:#ff6a6a;border:1px solid #adadad;box-shadow:inset 0 0 0 1px #f4e4e4"></div>
<span class="t" style="left:860.5px;top:255px;">21</span>
<div style="left:890px;top:242px;width:41px;height:41px;background:#ff6a6a;border:1px solid #adadad;box-shadow:inset 0 0 0 1px #f4e4e4"></div>
<span class="t" style="left:903.5px;top:255px;">22</span>
<div style="left:933px;top:242px;width:41px;height:41px;background:#ff6a6a;border:1px solid #adadad;box-shadow:inset 0 0 0 1px #f4e4e4"></div>
<span class="t" style="left:946.5px;top:255px;">23</span>
<div style="left:976px;top:242px;width:41px;height:41px;background:#ff6a6a;border:1px solid #adadad;box-shadow:inset 0 0 0 1px #f4e4e4"></div>
<span class="t" style="left:989.5px;top:255px;">24</span>
<div style="left:1019px;top:242px;width:41px;height:41px;background:#ff6a6a;border:1px solid #adadad;box-shadow:inset 0 0 0 1px #f4e4e4"></div>
<span class="t" style="left:1032.5px;top:255px;">25</span>
<div style="left:1062px;top:242px;width:41px;height:41px;background:#ff6a6a;border:1px solid #adadad;box-shadow:inset 0 0 0 1px #f4e4e4"></div>
<span class="t" style="left:1075.5px;top:255px;">26</span>
<div style="left:1105px;top:242px;width:41px;height:41px;background:#ff6a6a;border:1px solid #adadad;box-shadow:inset 0 0 0 1px #f4e4e4"></div>
<span class="t" style="left:1118.5px;top:255px;">27</span>
<div style="left:761px;top:285px;width:41px;height:41px;background:#ff6a6a;border:1px solid #adadad;box-shadow:inset 0 0 0 1px #f4e4e4"></div>
<span class="t" style="left:774.5px;top:298px;">28</span>
<div style="left:804px;top:285px;width:41px;height:41px;background:#ff6a6a;border:1px solid #adadad;box-shadow:inset 0 0 0 1px #f4e4e4"></div>
<span class="t" style="left:817.5px;top:298px;">29</span>
<div style="left:847px;top:285px;width:41px;height:41px;background:#ff6a6a;border:1px solid #adadad;box-shadow:inset 0 0 0 1px #f4e4e4"></div>
<span class="t" style="left:860.5px;top:298px;">30</span>
<div style="left:890px;top:285px;width:41px;height:41px;background:#ff6a6a;border:1px solid #adadad;box-shadow:inset 0 0 0 1px #f4e4e4"></div>
<span class="t" style="left:903.5px;top:298px;">31</span>
<div style="left:933px;top:285px;width:41px;height:41px;background:#ff6a6a;border:1px solid #adadad;box-shadow:inset 0 0 0 1px #f4e4e4"></div>
<span class="t" style="left:946.5px;top:298px;">32</span>
<div style="left:976px;top:285px;width:41px;height:41px;background:#ff6a6a;border:1px solid #adadad;box-shadow:inset 0 0 0 1px #f4e4e4"></div>
<span class="t" style="left:989.5px;top:298px;">33</span>
<div style="left:1019px;top:285px;width:41px;height:41px;background:#ff6a6a;border:1px solid #adadad;box-shadow:inset 0 0 0 1px #f4e4e4"></div>
<span class="t" style="left:1032.5px;top:298px;">34</span>
<div style="left:1062px;top:285px;width:41px;height:41px;background:#ff6a6a;border:1px solid #adadad;box-shadow:inset 0 0 0 1px #f4e4e4"></div>
<span class="t" style="left:1075.5px;top:298px;">35</span>
<div style="left:1105px;top:285px;width:41px;height:41px;background:#ff6a6a;border:1px solid #adadad;box-shadow:inset 0 0 0 1px #f4e4e4"></div>
<span class="t" style="left:1118.5px;top:298px;">36</span>
<div style="left:761px;top:328px;width:41px;height:41px;background:#ff6a6a;border:1px solid #adadad;box-shadow:inset 0 0 0 1px #f4e4e4"></div>
<span class="t" style="left:774.5px;top:341px;">37</span>
<div style="left:804px;top:328px;width:41px;height:41px;background:#ff6a6a;border:1px solid #adadad;box-shadow:inset 0 0 0 1px #f4e4e4"></div>
<span class="t" style="left:817.5px;top:341px;">38</span>
<div style="left:847px;top:328px;width:41px;height:41px;background:#ff6a6a;border:1px solid #adadad;box-shadow:inset 0 0 0 1px #f4e4e4"></div>
<span class="t" style="left:860.5px;top:341px;">39</span>
<div style="left:890px;top:328px;width:41px;height:41px;background:#ff6a6a;border:1px solid #adadad;box-shadow:inset 0 0 0 1px #f4e4e4"></div>
<span class="t" style="left:903.5px;top:341px;">40</span>
<div style="left:933px;top:328px;width:41px;height:41px;background:#ff6a6a;border:1px solid #adadad;box-shadow:inset 0 0 0 1px #f4e4e4"></div>
<span class="t" style="left:946.5px;top:341px;">41</span>
<div style="left:976px;top:328px;width:41px;height:41px;background:#ff6a6a;border:1px solid #adadad;box-shadow:inset 0 0 0 1px #f4e4e4"></div>
<span class="t" style="left:989.5px;top:341px;">42</span>
<div style="left:1019px;top:328px;width:41px;height:41px;background:#ff6a6a;border:1px solid #adadad;box-shadow:inset 0 0 0 1px #f4e4e4"></div>
<span class="t" style="left:1032.5px;top:341px;">43</span>
<div style="left:1062px;top:328px;width:41px;height:41px;background:#ff6a6a;border:1px solid #adadad;box-shadow:inset 0 0 0 1px #f4e4e4"></div>
<span class="t" style="left:1075.5px;top:341px;">44</span>
<div style="left:1105px;top:328px;width:41px;height:41px;background:#ff6a6a;border:1px solid #adadad;box-shadow:inset 0 0 0 1px #f4e4e4"></div>
<span class="t" style="left:1118.5px;top:341px;">45</span>
<div style="left:761px;top:371px;width:41px;height:41px;background:#ff6a6a;border:1px solid #adadad;box-shadow:inset 0 0 0 1px #f4e4e4"></div>
<span class="t" style="left:774.5px;top:384px;">46</span>
<div style="left:804px;top:371px;width:41px;height:41px;background:#ff6a6a;border:1px solid #adadad;box-shadow:inset 0 0 0 1px #f4e4e4"></div>
<span class="t" style="left:817.5px;top:384px;">47</span>
<div style="left:847px;top:371px;width:41px;height:41px;background:#ff6a6a;border:1px solid #adadad;box-shadow:inset 0 0 0 1px #f4e4e4"></div>
<span class="t" style="left:860.5px;top:384px;">48</span>
<div style="left:890px;top:371px;width:41px;height:41px;background:#ff6a6a;border:1px solid #adadad;box-shadow:inset 0 0 0 1px #f4e4e4"></div>
<span class="t" style="left:903.5px;top:384px;">49</span>
<div style="left:933px;top:371px;width:41px;height:41px;background:#ff6a6a;border:1px solid #adadad;box-shadow:inset 0 0 0 1px #f4e4e4"></div>
<span class="t" style="left:946.5px;top:384px;">50</span>
<div style="left:1176px;top:160px;width:13px;height:13px;background:#fff;border:1px solid #333"></div>
<svg style="left:1176px;top:160px;" width="13" height="13" viewBox="0 0 13 13"><path d="M2.8 6.6L5.4 9.3L10.3 3.6" fill="none" stroke="#3a3a3a" stroke-width="1.3"/></svg>
<div style="left:1173px;top:174px;width:21px;height:21px;background:#ffffff"></div>
<div style="left:1177px;top:195px;width:13px;height:27px;background:#fbfbfb"></div>
<svg style="left:1178px;top:195px;" width="11" height="14" viewBox="0 0 11 14"><rect x="0.9" y="6.4" width="8.4" height="6.7" rx="1.6" fill="#fff" stroke="#000" stroke-width="1.3"/><path d="M1.1 7V4.2C1.1 1.6 4.6 0.3 7.6 1.5" fill="none" stroke="#000" stroke-width="1.3"/><rect x="4.2" y="8.9" width="1.9" height="1.9" fill="#000"/></svg>
<div style="left:1197px;top:160px;width:13px;height:13px;background:#fff;border:1px solid #333"></div>
<svg style="left:1197px;top:160px;" width="13" height="13" viewBox="0 0 13 13"><path d="M2.8 6.6L5.4 9.3L10.3 3.6" fill="none" stroke="#3a3a3a" stroke-width="1.3"/></svg>
<div style="left:1194px;top:174px;width:21px;height:21px;background:#ff0000"></div>
<div style="left:1198px;top:195px;width:13px;height:27px;background:#fbfbfb"></div>
<svg style="left:1199px;top:195px;" width="11" height="14" viewBox="0 0 11 14"><rect x="0.9" y="6.4" width="8.4" height="6.7" rx="1.6" fill="#fff" stroke="#000" stroke-width="1.3"/><path d="M1.1 7V4.2C1.1 1.6 4.6 0.3 7.6 1.5" fill="none" stroke="#000" stroke-width="1.3"/><rect x="4.2" y="8.9" width="1.9" height="1.9" fill="#000"/></svg>
<div style="left:1218px;top:160px;width:13px;height:13px;background:#fff;border:1px solid #333"></div>
<div style="left:1215px;top:174px;width:21px;height:21px;background:#00ff00"></div>
<div style="left:1219px;top:195px;width:13px;height:27px;background:#fbfbfb"></div>
<svg style="left:1220px;top:195px;" width="11" height="14" viewBox="0 0 11 14"><rect x="0.9" y="6.4" width="8.4" height="6.7" rx="1.6" fill="#fff" stroke="#000" stroke-width="1.3"/><path d="M1.1 7V4.2C1.1 1.6 4.6 0.3 7.6 1.5" fill="none" stroke="#000" stroke-width="1.3"/><rect x="4.2" y="8.9" width="1.9" height="1.9" fill="#000"/></svg>
<div style="left:1239px;top:160px;width:13px;height:13px;background:#fff;border:1px solid #333"></div>
<div style="left:1236px;top:174px;width:21px;height:21px;background:#0000ff"></div>
<div style="left:1240px;top:195px;width:13px;height:27px;background:#fbfbfb"></div>
<svg style="left:1241px;top:195px;" width="11" height="14" viewBox="0 0 11 14"><rect x="0.9" y="6.4" width="8.4" height="6.7" rx="1.6" fill="#fff" stroke="#000" stroke-width="1.3"/><path d="M1.1 7V4.2C1.1 1.6 4.6 0.3 7.6 1.5" fill="none" stroke="#000" stroke-width="1.3"/><rect x="4.2" y="8.9" width="1.9" height="1.9" fill="#000"/></svg>
<div style="left:1260px;top:160px;width:13px;height:13px;background:#fff;border:1px solid #333"></div>
<div style="left:1257px;top:174px;width:21px;height:21px;background:#ffff00"></div>
<div style="left:1261px;top:195px;width:13px;height:27px;background:#fbfbfb"></div>
<svg style="left:1262px;top:195px;" width="11" height="14" viewBox="0 0 11 14"><rect x="0.9" y="6.4" width="8.4" height="6.7" rx="1.6" fill="#fff" stroke="#000" stroke-width="1.3"/><path d="M1.1 7V4.2C1.1 1.6 4.6 0.3 7.6 1.5" fill="none" stroke="#000" stroke-width="1.3"/><rect x="4.2" y="8.9" width="1.9" height="1.9" fill="#000"/></svg>
<div style="left:1281px;top:160px;width:13px;height:13px;background:#fff;border:1px solid #333"></div>
<div style="left:1278px;top:174px;width:21px;height:21px;background:#000000"></div>
<div style="left:1282px;top:195px;width:13px;height:27px;background:#fbfbfb"></div>
<svg style="left:1283px;top:195px;" width="11" height="14" viewBox="0 0 11 14"><rect x="0.9" y="6.4" width="8.4" height="6.7" rx="1.6" fill="#fff" stroke="#000" stroke-width="1.3"/><path d="M1.1 7V4.2C1.1 1.6 4.6 0.3 7.6 1.5" fill="none" stroke="#000" stroke-width="1.3"/><rect x="4.2" y="8.9" width="1.9" height="1.9" fill="#000"/></svg>
<div style="left:1302px;top:160px;width:13px;height:13px;background:#fff;border:1px solid #333"></div>
<div style="left:1299px;top:174px;width:21px;height:21px;background:#00ffff"></div>
<div style="left:1303px;top:195px;width:13px;height:27px;background:#fbfbfb"></div>
<svg style="left:1304px;top:195px;" width="11" height="14" viewBox="0 0 11 14"><rect x="0.9" y="6.4" width="8.4" height="6.7" rx="1.6" fill="#fff" stroke="#000" stroke-width="1.3"/><path d="M1.1 7V4.2C1.1 1.6 4.6 0.3 7.6 1.5" fill="none" stroke="#000" stroke-width="1.3"/><rect x="4.2" y="8.9" width="1.9" height="1.9" fill="#000"/></svg>
<div style="left:1323px;top:160px;width:13px;height:13px;background:#fff;border:1px solid #333"></div>
<div style="left:1320px;top:174px;width:21px;height:21px;background:#ff00ff"></div>
<div style="left:1324px;top:195px;width:13px;height:27px;background:#fbfbfb"></div>
<svg style="left:1325px;top:195px;" width="11" height="14" viewBox="0 0 11 14"><rect x="0.9" y="6.4" width="8.4" height="6.7" rx="1.6" fill="#fff" stroke="#000" stroke-width="1.3"/><path d="M1.1 7V4.2C1.1 1.6 4.6 0.3 7.6 1.5" fill="none" stroke="#000" stroke-width="1.3"/><rect x="4.2" y="8.9" width="1.9" height="1.9" fill="#000"/></svg>
<div style="left:1353px;top:161px;width:23px;height:25px;background:#eef3f8"></div>
<svg style="left:1356px;top:164px;" width="17" height="20" viewBox="0 0 17 20"><path d="M2.500 8.500C2.500 4.500 5.500 1.500 9 1.500C12.500 1.500 14.500 4.500 14.500 7.500H12L14 10.500H16L14.500 7.500M14.500 11.500C14.500 15.500 11.500 18.500 8 18.500C4.500 18.500 2.500 15.500 2.500 12.500H5L3 9.500H1L2.500 12.500" fill="#fff" stroke="#3c5268" stroke-width="1.1" stroke-linejoin="round"/><path d="M5 7L7.500 4.500L8 7M12 13L9.500 15.500L9 13" fill="none" stroke="#3c5268" stroke-width="1"/></svg>
<div style="left:1383px;top:159px;width:105px;height:30px;background:#e1e1e1;border:1px solid #adadad"></div>
<svg style="left:1473px;top:172px;" width="9" height="5" viewBox="0 0 9 5"><path d="M0.5 0.5L4.5 4.5L8.5 0.5" fill="none" stroke="#444" stroke-width="1.2"/></svg>
<svg style="left:1500px;top:167px;" width="15" height="15" viewBox="0 0 15 15"><rect x="0.500" y="0.500" width="14" height="14" fill="#dcdcdc" stroke="#b4b4b4"/><rect x="3" y="1" width="8" height="5" fill="#ececec"/><rect x="3" y="8.500" width="9" height="6" fill="#c4c4c4"/><rect x="8.500" y="10" width="2.500" height="3.500" fill="#ececec"/></svg>
<div style="left:1399px;top:197px;width:73px;height:21px;background:#e1e1e1;border:1px solid #adadad"></div>
<span class="t" style="left:1416.5px;top:199.5px;letter-spacing:-0.115px;">Update</span>
<div style="left:1495px;top:196px;width:24px;height:24px;background:#f8f8f8"></div>
<svg style="left:1501px;top:203px;" width="12" height="12" viewBox="0 0 12 12"><path d="M1.500 1.500L10.500 10.500M10.500 1.500L1.500 10.500" stroke="#f0b4b4" stroke-width="3"/></svg>
<div style="left:1161px;top:230px;width:13px;height:13px;background:#fff;border:1px solid #333"></div>
<svg style="left:1161px;top:230px;" width="13" height="13" viewBox="0 0 13 13"><path d="M2.8 6.6L5.4 9.3L10.3 3.6" fill="none" stroke="#3a3a3a" stroke-width="1.3"/></svg>
<span class="t" style="left:1177.5px;top:229px;line-height:16px;letter-spacing:-0.137px;">Reset panel when changing effects</span>
<span class="t" style="left:1163.5px;top:255px;line-height:16px;letter-spacing:-0.269px;">Chroma Key</span>
<div style="left:1245px;top:260px;width:158px;height:4px;background:#e7eaea;border:1px solid #d6d6d6"></div>
<svg style="left:1240px;top:253px;" width="11" height="19" viewBox="0 0 11 19"><path d="M0 0H11V13.5L5.5 19L0 13.5Z" fill="#cccccc"/></svg>
<div style="left:1416px;top:251px;width:96px;height:23px;background:#cccccc;border:1px solid #c4c4c4"></div>
<div style="left:1434px;top:256px;width:60px;height:13px;background:#999999"></div>
<div style="left:1517px;top:256px;width:13px;height:13px;background:#fff;border:1px solid #333"></div>
<span class="t" style="left:1163.5px;top:283px;line-height:16px;letter-spacing:-0.523px;">Sparkles</span>
<div style="left:1243px;top:287px;width:134px;height:4px;background:#e7eaea;border:1px solid #d6d6d6"></div>
<svg style="left:1238px;top:280px;" width="11" height="19" viewBox="0 0 11 19"><path d="M0 0H11V13.5L5.5 19L0 13.5Z" fill="#0078d7"/></svg>
<div style="left:1388px;top:279px;width:23px;height:23px;background:#f0f0f0;border-top:1px solid #fff;border-left:1px solid #fff;border-right:1px solid #696969;border-bottom:1px solid #696969"></div>
<div style="left:1389px;top:280px;width:21px;height:21px;border-right:1px solid #a0a0a0;border-bottom:1px solid #a0a0a0"></div>
<svg style="left:1391px;top:282px;" width="17" height="17" viewBox="0 0 17 17"><linearGradient id="gg" x1="0" y1="0" x2="0" y2="1"><stop offset="0" stop-color="#d4e45c"/><stop offset="1" stop-color="#78a020"/></linearGradient><path d="M10 0.500L16.500 5.500L10.500 9.500L10.300 7C7 7 5.500 9.500 8 15.500C2 12 1 3.500 10.200 3Z" fill="url(#gg)" stroke="#5a8a10" stroke-width="0.7"/></svg>
<div style="left:1446px;top:279px;width:35px;height:23px;background:#fff;border:1px solid #7a7a7a"></div>
<span class="t" style="left:1452px;top:282px;">0</span>
<svg style="left:1519px;top:284px;" width="11" height="14" viewBox="0 0 11 14"><rect x="0.9" y="6.4" width="8.4" height="6.7" rx="1.6" fill="#fff" stroke="#000" stroke-width="1.3"/><path d="M1.1 7V4.2C1.1 1.6 4.6 0.3 7.6 1.5" fill="none" stroke="#000" stroke-width="1.3"/><rect x="4.2" y="8.9" width="1.9" height="1.9" fill="#000"/></svg>
<div style="left:1232px;top:313px;width:13px;height:13px;background:#fff;border:1px solid #333"></div>
<span class="t" style="left:1248.5px;top:312px;line-height:16px;letter-spacing:-0.198px;">Sparkles reflect music</span>
<div style="left:1416px;top:308px;width:96px;height:23px;background:#e1e1e1;border:1px solid #adadad"></div>
<div style="left:1434px;top:313px;width:60px;height:13px;background:#fff"></div>
<svg style="left:1519px;top:312px;" width="11" height="14" viewBox="0 0 11 14"><rect x="0.9" y="6.4" width="8.4" height="6.7" rx="1.6" fill="#fff" stroke="#000" stroke-width="1.3"/><path d="M1.1 7V4.2C1.1 1.6 4.6 0.3 7.6 1.5" fill="none" stroke="#000" stroke-width="1.3"/><rect x="4.2" y="8.9" width="1.9" height="1.9" fill="#000"/></svg>
<span class="t" style="left:1163.5px;top:339px;line-height:16px;letter-spacing:-0.219px;">Brightness</span>
<div style="left:1238px;top:344px;width:143px;height:4px;background:#e7eaea;border:1px solid #d6d6d6"></div>
<svg style="left:1271px;top:337px;" width="11" height="19" viewBox="0 0 11 19"><path d="M0 0H11V13.5L5.5 19L0 13.5Z" fill="#0078d7"/></svg>
<div style="left:1390px;top:335px;width:23px;height:23px;background:#f0f0f0;border-top:1px solid #fff;border-left:1px solid #fff;border-right:1px solid #696969;border-bottom:1px solid #696969"></div>
<div style="left:1391px;top:336px;width:21px;height:21px;border-right:1px solid #a0a0a0;border-bottom:1px solid #a0a0a0"></div>
<svg style="left:1393px;top:338px;" width="17" height="17" viewBox="0 0 17 17"><linearGradient id="gg" x1="0" y1="0" x2="0" y2="1"><stop offset="0" stop-color="#d4e45c"/><stop offset="1" stop-color="#78a020"/></linearGradient><path d="M10 0.500L16.500 5.500L10.500 9.500L10.300 7C7 7 5.500 9.500 8 15.500C2 12 1 3.500 10.200 3Z" fill="url(#gg)" stroke="#5a8a10" stroke-width="0.7"/></svg>
<div style="left:1446px;top:336px;width:35px;height:23px;background:#fff;border:1px solid #7a7a7a"></div>
<span class="t" style="left:1452px;top:339px;">100</span>
<svg style="left:1519px;top:340px;" width="11" height="14" viewBox="0 0 11 14"><rect x="0.9" y="6.4" width="8.4" height="6.7" rx="1.6" fill="#fff" stroke="#000" stroke-width="1.3"/><path d="M1.1 7V4.2C1.1 1.6 4.6 0.3 7.6 1.5" fill="none" stroke="#000" stroke-width="1.3"/><rect x="4.2" y="8.9" width="1.9" height="1.9" fill="#000"/></svg>
<span class="t" style="left:1163.5px;top:366px;line-height:16px;letter-spacing:-0.168px;">Contrast</span>
<div style="left:1243px;top:371px;width:162px;height:4px;background:#e7eaea;border:1px solid #d6d6d6"></div>
<svg style="left:1238px;top:364px;" width="11" height="19" viewBox="0 0 11 19"><path d="M0 0H11V13.5L5.5 19L0 13.5Z" fill="#0078d7"/></svg>
<div style="left:1446px;top:363px;width:35px;height:23px;background:#fff;border:1px solid #7a7a7a"></div>
<span class="t" style="left:1452px;top:366px;">0</span>
<svg style="left:1519px;top:367px;" width="11" height="14" viewBox="0 0 11 14"><rect x="0.9" y="6.4" width="8.4" height="6.7" rx="1.6" fill="#fff" stroke="#000" stroke-width="1.3"/><path d="M1.1 7V4.2C1.1 1.6 4.6 0.3 7.6 1.5" fill="none" stroke="#000" stroke-width="1.3"/><rect x="4.2" y="8.9" width="1.9" height="1.9" fill="#000"/></svg>
<span class="t" style="left:1163.5px;top:394px;line-height:16px;letter-spacing:0.098px;">Adjustment</span>
<div style="left:1536px;top:155px;width:17px;height:258px;background:#f0f0f0"></div>
<div style="left:1537px;top:172px;width:15px;height:168px;background:#cdcdcd"></div>
<svg style="left:1541px;top:161px;" width="7.5" height="6" viewBox="0 0 7.5 6"><path d="M0.3 5.2L3.75 1.6L7.2 5.2" fill="none" stroke="#505050" stroke-width="2"/></svg>
<svg style="left:1541px;top:402px;" width="7.5" height="6" viewBox="0 0 7.5 6"><path d="M0.3 0.8L3.75 4.4L7.2 0.8" fill="none" stroke="#505050" stroke-width="2"/></svg>
<div style="left:1561px;top:158px;width:13px;height:13px;background:#fff;border:1px solid #333"></div>
<span class="t" style="left:1577.5px;top:157px;line-height:16px;letter-spacing:-0.137px;">Reset panel when changing effects</span>
<span class="t" style="left:1563.5px;top:181px;line-height:16px;letter-spacing:-0.252px;">Suppress Effect Until Frame</span>
<div style="left:1711px;top:179px;width:203px;height:22px;background:#fff;border:1px solid #7a7a7a"></div>
<span class="t" style="left:1717px;top:181px;">0</span>
<div style="left:1897px;top:180px;width:16px;height:20px;background:#f0f0f0"></div>
<div style="left:1897px;top:180px;width:16px;height:10px;background:#f0f0f0;border:1px solid #adadad"></div>
<div style="left:1897px;top:190px;width:16px;height:10px;background:#f0f0f0;border:1px solid #adadad"></div>
<svg style="left:1902px;top:183px;" width="6" height="4" viewBox="0 0 6 4"><path d="M0 3.500L3 0.500L6 3.500Z" fill="#333"/></svg>
<svg style="left:1902px;top:193px;" width="6" height="4" viewBox="0 0 6 4"><path d="M0 0.500L3 3.500L6 0.500Z" fill="#333"/></svg>
<span class="t" style="left:1563.5px;top:208px;line-height:16px;letter-spacing:-0.300px;">Freeze Effect At Frame</span>
<div style="left:1711px;top:206px;width:203px;height:22px;background:#fff;border:1px solid #7a7a7a"></div>
<span class="t" style="left:1717px;top:208px;">99999</span>
<div style="left:1897px;top:207px;width:16px;height:20px;background:#f0f0f0"></div>
<div style="left:1897px;top:207px;width:16px;height:10px;background:#f0f0f0;border:1px solid #adadad"></div>
<div style="left:1897px;top:217px;width:16px;height:10px;background:#f0f0f0;border:1px solid #adadad"></div>
<svg style="left:1902px;top:210px;" width="6" height="4" viewBox="0 0 6 4"><path d="M0 3.500L3 0.500L6 3.500Z" fill="#333"/></svg>
<svg style="left:1902px;top:220px;" width="6" height="4" viewBox="0 0 6 4"><path d="M0 0.500L3 3.500L6 0.500Z" fill="#333"/></svg>
<div style="left:1563px;top:238px;width:13px;height:13px;background:#fff;border:1px solid #333"></div>
<span class="t" style="left:1579.5px;top:237px;line-height:16px;letter-spacing:0.097px;">Morph</span>
<div style="left:1725px;top:243px;width:143px;height:4px;background:#e7eaea;border:1px solid #d6d6d6"></div>
<svg style="left:1720px;top:236px;" width="11" height="19" viewBox="0 0 11 19"><path d="M0 0H11V13.5L5.5 19L0 13.5Z" fill="#0078d7"/></svg>
<div style="left:1878px;top:233px;width:35px;height:23px;background:#fff;border:1px solid #7a7a7a"></div>
<span class="t" style="left:1884px;top:236px;">0</span>
<svg style="left:1920px;top:237px;" width="11" height="14" viewBox="0 0 11 14"><rect x="0.9" y="6.4" width="8.4" height="6.7" rx="1.6" fill="#fff" stroke="#000" stroke-width="1.3"/><path d="M1.1 7V4.2C1.1 1.6 4.6 0.3 7.6 1.5" fill="none" stroke="#000" stroke-width="1.3"/><rect x="4.2" y="8.9" width="1.9" height="1.9" fill="#000"/></svg>
<div style="left:1563px;top:261px;width:144px;height:23px;background:#e1e1e1;border:1px solid #adadad"></div>
<span class="t" style="left:1568px;top:265px;letter-spacing:0.052px;">Normal</span>
<svg style="left:1692px;top:271px;" width="9" height="5" viewBox="0 0 9 5"><path d="M0.5 0.5L4.5 4.5L8.5 0.5" fill="none" stroke="#444" stroke-width="1.2"/></svg>
<div style="left:1712px;top:262px;width:23px;height:21px;background:#e1e1e1;border:1px solid #adadad"></div>
<span class="t" style="left:1720.2px;top:264.5px;">?</span>
<svg style="left:1920px;top:265px;" width="11" height="14" viewBox="0 0 11 14"><rect x="0.9" y="6.4" width="8.4" height="6.7" rx="1.6" fill="#fff" stroke="#000" stroke-width="1.3"/><path d="M1.1 7V4.2C1.1 1.6 4.6 0.3 7.6 1.5" fill="none" stroke="#000" stroke-width="1.3"/><rect x="4.2" y="8.9" width="1.9" height="1.9" fill="#000"/></svg>
<div style="left:1566px;top:293px;width:13px;height:13px;background:#fff;border:1px solid #333"></div>
<span class="t" style="left:1582.5px;top:292px;line-height:16px;letter-spacing:-0.531px;">Canvas</span>
<div style="left:1776px;top:289px;width:73px;height:21px;background:#cccccc;border:1px solid #bfbfbf"></div>
<span class="t" style="left:1789.5px;top:291.5px;color:#838383;letter-spacing:-0.333px;">Layers ...</span>
<div style="left:1559px;top:337px;width:375px;height:76px;background:#fff;border:1px solid #d9d9d9"></div>
<div style="left:1638px;top:317px;width:83px;height:21px;background:#f0f0f0;border:1px solid #d9d9d9;border-bottom:none"></div>
<div style="left:1559px;top:315px;width:79px;height:23px;background:#fff;border:1px solid #d9d9d9;border-bottom:none"></div>
<span class="t" style="left:1567px;top:318px;line-height:16px;letter-spacing:-0.143px;">In Transition</span>
<span class="t" style="left:1643.5px;top:320px;line-height:16px;letter-spacing:-0.085px;">Out Transition</span>
<div style="left:1566px;top:342px;width:109px;height:23px;background:#e1e1e1;border:1px solid #adadad"></div>
<span class="t" style="left:1571px;top:346px;letter-spacing:-0.836px;">Fade</span>
<svg style="left:1660px;top:352px;" width="9" height="5" viewBox="0 0 9 5"><path d="M0.5 0.5L4.5 4.5L8.5 0.5" fill="none" stroke="#444" stroke-width="1.2"/></svg>
<span class="t" style="left:1680px;top:345px;line-height:16px;letter-spacing:-0.383px;">Time (s)</span>
<div style="left:1725px;top:342px;width:44px;height:23px;background:#fff;border:1px solid #7a7a7a"></div>
<span class="t" style="left:1731px;top:345px;">0.00</span>
<span class="t" style="left:1566.5px;top:378px;line-height:16px;letter-spacing:0.148px;">Adjustment</span>
<div style="left:1638px;top:379px;width:214px;height:4px;background:#e7eaea;border:1px solid #d6d6d6"></div>
<svg style="left:1740px;top:372px;" width="11" height="19" viewBox="0 0 11 19"><path d="M0 0H11V13.5L5.5 19L0 13.5Z" fill="#0078d7"/></svg>
<div style="left:1866px;top:374px;width:23px;height:23px;background:#f0f0f0;border-top:1px solid #fff;border-left:1px solid #fff;border-right:1px solid #696969;border-bottom:1px solid #696969"></div>
<div style="left:1867px;top:375px;width:21px;height:21px;border-right:1px solid #a0a0a0;border-bottom:1px solid #a0a0a0"></div>
<svg style="left:1869px;top:377px;" width="17" height="17" viewBox="0 0 17 17"><linearGradient id="gg" x1="0" y1="0" x2="0" y2="1"><stop offset="0" stop-color="#d4e45c"/><stop offset="1" stop-color="#78a020"/></linearGradient><path d="M10 0.500L16.500 5.500L10.500 9.500L10.300 7C7 7 5.500 9.500 8 15.500C2 12 1 3.500 10.200 3Z" fill="url(#gg)" stroke="#5a8a10" stroke-width="0.7"/></svg>
<div style="left:1895px;top:374px;width:35px;height:23px;background:#fff;border:1px solid #7a7a7a"></div>
<span class="t" style="left:1901px;top:377px;">50</span>
<div style="left:1560px;top:404px;width:373px;height:8px;overflow:hidden"><div style="left:6px;top:4px;width:13px;height:13px;background:#fff;border:1px solid #333"></div><span class="t" style="left:22px;top:2px">Reverse</span></div>
<div style="left:1936px;top:155px;width:17px;height:258px;background:#f0f0f0"></div>
<div style="left:1937px;top:172px;width:15px;height:208px;background:#cdcdcd"></div>
<svg style="left:1941px;top:161px;" width="7.5" height="6" viewBox="0 0 7.5 6"><path d="M0.3 5.2L3.75 1.6L7.2 5.2" fill="none" stroke="#505050" stroke-width="2"/></svg>
<svg style="left:1941px;top:402px;" width="7.5" height="6" viewBox="0 0 7.5 6"><path d="M0.3 0.8L3.75 4.4L7.2 0.8" fill="none" stroke="#505050" stroke-width="2"/></svg>
<div style="left:1964px;top:161px;width:13px;height:13px;background:#fff;border:1px solid #333"></div>
<svg style="left:1964px;top:161px;" width="13" height="13" viewBox="0 0 13 13"><path d="M2.8 6.6L5.4 9.3L10.3 3.6" fill="none" stroke="#3a3a3a" stroke-width="1.3"/></svg>
<span class="t" style="left:1980.5px;top:160px;line-height:16px;letter-spacing:-0.137px;">Reset panel when changing effects</span>
<div style="left:1961px;top:205px;width:388px;height:205px;background:#fff;border:1px solid #d9d9d9"></div>
<div style="left:2012px;top:185px;width:71px;height:21px;background:#f0f0f0;border:1px solid #d9d9d9;border-bottom:none"></div>
<div style="left:1961px;top:183px;width:51px;height:23px;background:#fff;border:1px solid #d9d9d9;border-bottom:none"></div>
<span class="t" style="left:1969px;top:185px;line-height:16px;letter-spacing:0.036px;">Buffer</span>
<span class="t" style="left:2017.5px;top:187px;line-height:16px;letter-spacing:0.165px;">Roto-Zoom</span>
<span class="t" style="left:1967.5px;top:211px;line-height:16px;letter-spacing:-0.405px;">Render Style</span>
<div style="left:2052px;top:208px;width:269px;height:23px;background:#e1e1e1;border:1px solid #adadad"></div>
<span class="t" style="left:2057px;top:212px;letter-spacing:-0.145px;">Default</span>
<svg style="left:2306px;top:218px;" width="9" height="5" viewBox="0 0 9 5"><path d="M0.5 0.5L4.5 4.5L8.5 0.5" fill="none" stroke="#444" stroke-width="1.2"/></svg>
<svg style="left:2330px;top:212px;" width="11" height="14" viewBox="0 0 11 14"><rect x="0.9" y="6.4" width="8.4" height="6.7" rx="1.6" fill="#fff" stroke="#000" stroke-width="1.3"/><path d="M1.1 7V4.2C1.1 1.6 4.6 0.3 7.6 1.5" fill="none" stroke="#000" stroke-width="1.3"/><rect x="4.2" y="8.9" width="1.9" height="1.9" fill="#000"/></svg>
<span class="t" style="left:1967.5px;top:238px;line-height:16px;letter-spacing:-0.448px;">Camera</span>
<div style="left:2052px;top:235px;width:269px;height:23px;background:#cccccc;border:1px solid #bfbfbf"></div>
<span class="t" style="left:2057px;top:239px;color:#6d6d6d;letter-spacing:-1.172px;">2D</span>
<svg style="left:2306px;top:245px;" width="9" height="5" viewBox="0 0 9 5"><path d="M0.5 0.5L4.5 4.5L8.5 0.5" fill="none" stroke="#b0b0b0" stroke-width="1.2"/></svg>
<span class="t" style="left:1967.5px;top:265px;line-height:16px;letter-spacing:-0.089px;">Transformation</span>
<div style="left:2052px;top:262px;width:269px;height:23px;background:#e1e1e1;border:1px solid #adadad"></div>
<span class="t" style="left:2057px;top:266px;letter-spacing:-0.172px;">None</span>
<svg style="left:2306px;top:272px;" width="9" height="5" viewBox="0 0 9 5"><path d="M0.5 0.5L4.5 4.5L8.5 0.5" fill="none" stroke="#444" stroke-width="1.2"/></svg>
<svg style="left:2330px;top:266px;" width="11" height="14" viewBox="0 0 11 14"><rect x="0.9" y="6.4" width="8.4" height="6.7" rx="1.6" fill="#fff" stroke="#000" stroke-width="1.3"/><path d="M1.1 7V4.2C1.1 1.6 4.6 0.3 7.6 1.5" fill="none" stroke="#000" stroke-width="1.3"/><rect x="4.2" y="8.9" width="1.9" height="1.9" fill="#000"/></svg>
<span class="t" style="left:1967.5px;top:291px;line-height:16px;letter-spacing:-0.211px;">Blur</span>
<div style="left:2063px;top:297px;width:193px;height:4px;background:#e7eaea;border:1px solid #d6d6d6"></div>
<svg style="left:2058px;top:290px;" width="11" height="19" viewBox="0 0 11 19"><path d="M0 0H11V13.5L5.5 19L0 13.5Z" fill="#0078d7"/></svg>
<div style="left:2265px;top:288px;width:23px;height:23px;background:#f0f0f0;border-top:1px solid #fff;border-left:1px solid #fff;border-right:1px solid #696969;border-bottom:1px solid #696969"></div>
<div style="left:2266px;top:289px;width:21px;height:21px;border-right:1px solid #a0a0a0;border-bottom:1px solid #a0a0a0"></div>
<svg style="left:2268px;top:291px;" width="17" height="17" viewBox="0 0 17 17"><linearGradient id="gg" x1="0" y1="0" x2="0" y2="1"><stop offset="0" stop-color="#d4e45c"/><stop offset="1" stop-color="#78a020"/></linearGradient><path d="M10 0.500L16.500 5.500L10.500 9.500L10.300 7C7 7 5.500 9.500 8 15.500C2 12 1 3.500 10.200 3Z" fill="url(#gg)" stroke="#5a8a10" stroke-width="0.7"/></svg>
<div style="left:2288px;top:287px;width:35px;height:23px;background:#fff;border:1px solid #7a7a7a"></div>
<span class="t" style="left:2294px;top:290px;">1</span>
<svg style="left:2330px;top:292px;" width="11" height="14" viewBox="0 0 11 14"><rect x="0.9" y="6.4" width="8.4" height="6.7" rx="1.6" fill="#fff" stroke="#000" stroke-width="1.3"/><path d="M1.1 7V4.2C1.1 1.6 4.6 0.3 7.6 1.5" fill="none" stroke="#000" stroke-width="1.3"/><rect x="4.2" y="8.9" width="1.9" height="1.9" fill="#000"/></svg>
<div style="left:1967px;top:316px;width:13px;height:13px;background:#fff;border:1px solid #333"></div>
<span class="t" style="left:1983px;top:315px;line-height:16px;letter-spacing:-0.234px;">Persistent</span>
<svg style="left:2330px;top:316px;" width="11" height="14" viewBox="0 0 11 14"><rect x="0.9" y="6.4" width="8.4" height="6.7" rx="1.6" fill="#fff" stroke="#000" stroke-width="1.3"/><path d="M1.1 7V4.2C1.1 1.6 4.6 0.3 7.6 1.5" fill="none" stroke="#000" stroke-width="1.3"/><rect x="4.2" y="8.9" width="1.9" height="1.9" fill="#000"/></svg>
<div style="left:1967px;top:337px;width:378px;height:68px;background:#808080"></div>
<span class="t" style="left:366px;top:424px;letter-spacing:-0.425px;">View:</span>
<div style="left:365px;top:440px;width:170px;height:23px;background:#e1e1e1;border:1px solid #adadad"></div>
<span class="t" style="left:370px;top:444px;letter-spacing:-0.163px;">Master View</span>
<svg style="left:520px;top:450px;" width="9" height="5" viewBox="0 0 9 5"><path d="M0.5 0.5L4.5 4.5L8.5 0.5" fill="none" stroke="#444" stroke-width="1.2"/></svg>
<span class="t" style="left:367px;top:466px;font-size:14px;line-height:20px;letter-spacing:0.227px;">Time: 0:00.00</span>
<div style="left:540px;top:419px;width:1px;height:101px;background:#8c8c8c"></div>
<div style="left:541px;top:520px;width:1795px;height:1px;background:#fff"></div>
<div style="left:541px;top:521px;width:1795px;height:1px;background:#7a7a7a"></div>
<div style="left:541px;top:419px;width:1795px;height:28px;background:#f0f0f0"></div>
<div style="left:1552px;top:419px;width:784px;height:28px;background:#eff5fc"></div>
<div style="left:541px;top:447px;width:1795px;height:1px;background:#808080"></div>
<div style="left:2335px;top:419px;width:1px;height:101px;background:#8c8c8c"></div>
<div style="left:590px;top:437px;width:1px;height:10px;background:#787878"></div>
<div style="left:640px;top:437px;width:1px;height:10px;background:#787878"></div>
<div style="left:690px;top:437px;width:1px;height:10px;background:#787878"></div>
<div style="left:740px;top:437px;width:1px;height:10px;background:#787878"></div>
<div style="left:790px;top:437px;width:1px;height:10px;background:#787878"></div>
<div style="left:840px;top:437px;width:1px;height:10px;background:#787878"></div>
<div style="left:890px;top:437px;width:1px;height:10px;background:#787878"></div>
<div style="left:940px;top:437px;width:1px;height:10px;background:#787878"></div>
<div style="left:990px;top:437px;width:1px;height:10px;background:#787878"></div>
<div style="left:1040px;top:437px;width:1px;height:10px;background:#787878"></div>
<div style="left:1090px;top:437px;width:1px;height:10px;background:#787878"></div>
<div style="left:1140px;top:437px;width:1px;height:10px;background:#787878"></div>
<div style="left:1190px;top:437px;width:1px;height:10px;background:#787878"></div>
<div style="left:1240px;top:437px;width:1px;height:10px;background:#787878"></div>
<div style="left:1290px;top:437px;width:1px;height:10px;background:#787878"></div>
<div style="left:1340px;top:437px;width:1px;height:10px;background:#787878"></div>
<div style="left:1390px;top:437px;width:1px;height:10px;background:#787878"></div>
<div style="left:1440px;top:437px;width:1px;height:10px;background:#787878"></div>
<div style="left:1490px;top:437px;width:1px;height:10px;background:#787878"></div>
<div style="left:1540px;top:437px;width:1px;height:10px;background:#787878"></div>
<div style="left:1590px;top:437px;width:1px;height:10px;background:#787878"></div>
<div style="left:1640px;top:437px;width:1px;height:10px;background:#787878"></div>
<div style="left:1690px;top:437px;width:1px;height:10px;background:#787878"></div>
<div style="left:1740px;top:437px;width:1px;height:10px;background:#787878"></div>
<div style="left:1790px;top:437px;width:1px;height:10px;background:#787878"></div>
<div style="left:1840px;top:437px;width:1px;height:10px;background:#787878"></div>
<div style="left:1890px;top:437px;width:1px;height:10px;background:#787878"></div>
<div style="left:1940px;top:437px;width:1px;height:10px;background:#787878"></div>
<div style="left:1990px;top:437px;width:1px;height:10px;background:#787878"></div>
<div style="left:2040px;top:437px;width:1px;height:10px;background:#787878"></div>
<div style="left:2090px;top:437px;width:1px;height:10px;background:#787878"></div>
<div style="left:2140px;top:437px;width:1px;height:10px;background:#787878"></div>
<div style="left:2190px;top:437px;width:1px;height:10px;background:#787878"></div>
<div style="left:2240px;top:437px;width:1px;height:10px;background:#787878"></div>
<div style="left:2290px;top:437px;width:1px;height:10px;background:#787878"></div>
<div style="left:541px;top:423px;width:12px;height:14px;overflow:hidden"><span class="t" style="left:-8.5px;top:0;font-size:9px;line-height:14px;letter-spacing:-0.3px">0.00</span></div>
<span class="t" style="left:629.5px;top:423px;font-size:9px;line-height:14px;letter-spacing:-0.100px;">10.00</span>
<span class="t" style="left:729.5px;top:423px;font-size:9px;line-height:14px;letter-spacing:-0.100px;">20.00</span>
<span class="t" style="left:829.5px;top:423px;font-size:9px;line-height:14px;letter-spacing:-0.100px;">30.00</span>
<span class="t" style="left:929.5px;top:423px;font-size:9px;line-height:14px;letter-spacing:-0.100px;">40.00</span>
<span class="t" style="left:1029.5px;top:423px;font-size:9px;line-height:14px;letter-spacing:-0.100px;">50.00</span>
<span class="t" style="left:1126.0px;top:423px;font-size:9px;line-height:14px;letter-spacing:-0.143px;">1:00.00</span>
<span class="t" style="left:1226.0px;top:423px;font-size:9px;line-height:14px;letter-spacing:-0.143px;">1:10.00</span>
<span class="t" style="left:1326.0px;top:423px;font-size:9px;line-height:14px;letter-spacing:-0.143px;">1:20.00</span>
<span class="t" style="left:1426.0px;top:423px;font-size:9px;line-height:14px;letter-spacing:-0.143px;">1:30.00</span>
<span class="t" style="left:1526.0px;top:423px;font-size:9px;line-height:14px;letter-spacing:-0.143px;">1:40.00</span>
<span class="t" style="left:1626.0px;top:423px;font-size:9px;line-height:14px;letter-spacing:-0.143px;">1:50.00</span>
<span class="t" style="left:1726.0px;top:423px;font-size:9px;line-height:14px;letter-spacing:-0.143px;">2:00.00</span>
<span class="t" style="left:1826.0px;top:423px;font-size:9px;line-height:14px;letter-spacing:-0.143px;">2:10.00</span>
<span class="t" style="left:1926.0px;top:423px;font-size:9px;line-height:14px;letter-spacing:-0.143px;">2:20.00</span>
<span class="t" style="left:2026.0px;top:423px;font-size:9px;line-height:14px;letter-spacing:-0.143px;">2:30.00</span>
<span class="t" style="left:2126.0px;top:423px;font-size:9px;line-height:14px;letter-spacing:-0.143px;">2:40.00</span>
<span class="t" style="left:2226.0px;top:423px;font-size:9px;line-height:14px;letter-spacing:-0.143px;">2:50.00</span>
<svg style="left:1552px;top:419px;" width="784" height="28" viewBox="0 0 784 28"><pattern id="hp" width="8" height="8" patternUnits="userSpaceOnUse"><path d="M-1 -1L9 9M-1 9L9 -1M-1 7L1 9M7 -1L9 1M-1 1L1 -1M7 9L9 7" stroke="#a4c6ee" stroke-width="0.9"/></pattern><rect width="784" height="28" fill="url(#hp)"/></svg>
<div style="left:1551px;top:419px;width:1px;height:28px;background:#8a8a8a"></div>
<svg style="left:0px;top:0px;pointer-events:none" width="2359" height="1399" viewBox="0 0 2359 1399"><path d="M540 483.5V483.5h1V483.1h1V482.8h1V482.6h1V482.3h1V482.0h1V481.5h1V481.3h1V480.6h1V480.2h1V479.4h1V479.0h1V479.2h1V478.6h1V478.4h1V477.3h1V477.0h1V477.3h1V476.2h1V477.0h1V477.1h1V476.9h1V477.9h1V477.8h1V477.8h1V477.8h1V478.7h1V479.3h1V479.5h1V478.8h1V478.7h1V478.9h1V479.0h1V478.8h1V479.1h1V479.5h1V478.9h1V478.8h1V479.2h1V479.6h1V479.4h1V479.5h1V479.5h1V479.2h1V479.5h1V479.3h1V479.4h1V480.1h1V480.4h1V480.3h1V480.9h1V480.7h1V480.3h1V480.5h1V480.1h1V479.5h1V479.7h1V479.4h1V479.0h1V478.8h1V479.1h1V479.3h1V479.1h1V478.8h1V478.5h1V478.8h1V478.5h1V478.4h1V477.5h1V477.7h1V477.4h1V476.5h1V477.1h1V478.1h1V478.3h1V478.2h1V479.5h1V479.5h1V479.6h1V479.6h1V479.3h1V479.8h1V479.9h1V479.6h1V479.8h1V479.4h1V479.3h1V479.4h1V479.9h1V479.8h1V480.0h1V479.8h1V479.3h1V479.3h1V479.3h1V480.1h1V480.3h1V480.2h1V480.3h1V480.6h1V480.9h1V480.4h1V480.4h1V480.7h1V480.5h1V480.0h1V480.3h1V480.0h1V480.4h1V479.7h1V480.2h1V479.5h1V480.0h1V480.1h1V479.3h1V478.7h1V477.0h1V476.6h1V477.5h1V477.7h1V477.7h1V477.0h1V475.5h1V473.8h1V473.0h1V471.6h1V471.0h1V472.0h1V473.7h1V473.7h1V472.9h1V474.2h1V474.1h1V475.4h1V475.5h1V475.2h1V476.5h1V476.9h1V478.2h1V479.1h1V479.1h1V479.1h1V478.9h1V478.7h1V479.0h1V478.8h1V479.5h1V479.5h1V479.5h1V478.8h1V479.4h1V478.9h1V478.7h1V479.4h1V479.2h1V478.4h1V479.0h1V478.3h1V478.4h1V477.5h1V477.4h1V477.8h1V476.7h1V478.0h1V477.5h1V478.8h1V479.3h1V479.6h1V479.7h1V479.5h1V480.1h1V479.8h1V480.2h1V479.8h1V480.4h1V480.0h1V480.5h1V480.7h1V480.7h1V481.0h1V481.4h1V481.6h1V482.0h1V482.0h1V481.8h1V481.6h1V481.7h1V481.7h1V481.7h1V481.5h1V481.7h1V481.4h1V481.4h1V481.5h1V481.5h1V481.3h1V481.4h1V481.2h1V481.4h1V481.3h1V481.1h1V480.7h1V480.5h1V479.6h1V479.8h1V479.4h1V479.1h1V478.6h1V477.3h1V477.8h1V477.3h1V477.4h1V476.3h1V476.5h1V476.6h1V476.2h1V476.1h1V475.4h1V474.6h1V474.0h1V473.8h1V474.2h1V472.7h1V473.2h1V475.0h1V473.7h1V474.4h1V475.9h1V475.6h1V475.5h1V476.2h1V476.4h1V477.4h1V477.8h1V478.2h1V477.9h1V478.1h1V478.6h1V478.5h1V479.1h1V479.3h1V479.6h1V480.4h1V480.1h1V480.3h1V480.6h1V480.7h1V480.7h1V480.9h1V481.4h1V481.2h1V481.4h1V481.8h1V481.7h1V481.8h1V481.8h1V481.9h1V481.7h1V481.7h1V482.0h1V481.7h1V481.8h1V481.9h1V481.8h1V481.8h1V481.4h1V481.4h1V481.3h1V481.6h1V481.4h1V481.6h1V481.3h1V481.1h1V480.6h1V480.5h1V479.4h1V478.9h1V478.4h1V478.4h1V477.0h1V477.2h1V476.8h1V476.5h1V475.3h1V474.5h1V473.0h1V472.4h1V470.1h1V469.9h1V468.0h1V468.2h1V469.5h1V470.8h1V473.2h1V473.0h1V473.9h1V474.0h1V472.2h1V472.6h1V472.5h1V473.2h1V472.8h1V472.5h1V472.4h1V474.2h1V475.5h1V476.0h1V477.0h1V477.2h1V477.5h1V478.5h1V479.2h1V480.0h1V479.9h1V480.2h1V480.0h1V480.5h1V480.4h1V480.1h1V480.2h1V480.8h1V480.3h1V480.5h1V480.7h1V480.5h1V480.4h1V481.0h1V480.8h1V480.6h1V480.8h1V481.0h1V481.2h1V481.2h1V481.0h1V481.3h1V481.1h1V481.4h1V481.3h1V480.7h1V479.7h1V479.2h1V477.7h1V476.9h1V477.1h1V475.6h1V476.3h1V475.6h1V475.3h1V474.4h1V474.6h1V473.6h1V472.0h1V470.8h1V470.8h1V468.7h1V468.6h1V469.9h1V469.1h1V467.9h1V468.4h1V466.7h1V469.5h1V470.4h1V471.6h1V472.8h1V471.8h1V473.3h1V473.9h1V476.3h1V476.4h1V477.6h1V478.4h1V479.1h1V479.3h1V479.1h1V479.5h1V480.3h1V480.1h1V480.7h1V480.5h1V480.7h1V480.3h1V480.7h1V480.5h1V481.0h1V480.6h1V480.7h1V481.0h1V480.8h1V481.2h1V481.2h1V481.5h1V481.1h1V480.8h1V480.9h1V480.1h1V480.1h1V479.8h1V479.0h1V477.9h1V470.3h1V463.8h1V466.7h1V467.5h1V469.6h1V468.8h1V468.9h1V467.1h1V464.2h1V465.9h1V466.0h1V462.6h1V464.8h1V464.4h1V465.2h1V466.7h1V467.4h1V468.8h1V468.0h1V469.3h1V469.3h1V467.6h1V468.0h1V467.3h1V465.9h1V466.3h1V469.4h1V469.7h1V473.1h1V474.1h1V473.5h1V475.0h1V476.4h1V478.2h1V478.5h1V479.9h1V481.1h1V481.5h1V481.5h1V481.4h1V481.8h1V481.6h1V481.8h1V481.7h1V482.1h1V482.0h1V482.0h1V482.2h1V482.3h1V482.4h1V482.4h1V482.5h1V482.5h1V482.6h1V482.6h1V482.8h1V482.7h1V482.8h1V482.8h1V482.9h1V482.8h1V482.9h1V482.9h1V483.0h1V483.0h1V483.1h1V483.0h1V483.1h1V483.1h1V483.1h1V483.3h1V483.5h1V483.5h1V483.5h1V483.5h1V483.5h1V483.5h1V483.5h1V483.5h1V483.5h1V483.5h1V483.5h1V483.5h1V483.5h1V483.5h1V483.5h1V483.5h1V483.5h1V483.5h1V483.5h1V483.5h1V483.5h1V483.5h1V483.1h1V482.1h1V480.8h1V479.4h1V478.1h1V477.1h1V475.9h1V473.8h1V472.7h1V474.3h1V477.9h1V479.2h1V479.2h1V479.7h1V480.5h1V480.4h1V480.7h1V481.1h1V481.6h1V482.0h1V482.2h1V482.1h1V481.1h1V479.8h1V479.2h1V478.4h1V476.7h1V474.0h1V476.2h1V478.5h1V479.6h1V480.2h1V480.4h1V481.0h1V481.3h1V481.4h1V481.7h1V482.1h1V482.4h1V478.7h1V475.4h1V478.9h1V481.4h1V481.6h1V481.5h1V481.9h1V481.9h1V482.0h1V481.9h1V482.0h1V482.3h1V482.3h1V482.5h1V480.9h1V479.2h1V477.8h1V475.0h1V473.2h1V472.4h1V473.8h1V474.1h1V473.6h1V474.7h1V475.2h1V473.7h1V475.6h1V475.4h1V475.3h1V476.5h1V477.3h1V476.6h1V478.1h1V477.1h1V477.2h1V477.9h1V477.9h1V477.8h1V477.3h1V477.3h1V477.6h1V477.3h1V478.0h1V477.1h1V477.3h1V478.1h1V477.5h1V477.5h1V477.4h1V478.2h1V477.7h1V477.7h1V478.0h1V477.7h1V478.1h1V477.9h1V478.3h1V478.5h1V478.4h1V478.5h1V478.2h1V478.6h1V477.8h1V477.8h1V478.5h1V478.2h1V477.6h1V478.5h1V477.5h1V478.5h1V478.5h1V477.6h1V477.8h1V477.8h1V478.5h1V477.7h1V478.2h1V478.6h1V478.3h1V478.1h1V477.4h1V477.6h1V478.2h1V476.4h1V475.6h1V475.9h1V476.1h1V476.9h1V478.1h1V477.2h1V478.2h1V477.6h1V478.0h1V477.8h1V478.0h1V478.0h1V477.5h1V478.3h1V478.3h1V477.6h1V477.7h1V478.0h1V477.5h1V477.5h1V478.2h1V476.9h1V477.3h1V477.1h1V476.2h1V475.5h1V475.4h1V474.9h1V472.9h1V473.2h1V470.8h1V472.0h1V470.6h1V472.9h1V472.3h1V474.1h1V474.5h1V474.2h1V474.7h1V473.5h1V475.3h1V475.4h1V473.8h1V474.4h1V475.5h1V475.7h1V475.3h1V475.4h1V475.0h1V475.3h1V476.4h1V476.1h1V475.5h1V476.2h1V476.6h1V476.3h1V476.5h1V475.3h1V474.5h1V474.0h1V473.5h1V471.0h1V471.0h1V471.1h1V470.1h1V469.5h1V470.6h1V468.3h1V470.0h1V472.1h1V472.6h1V471.6h1V474.4h1V474.1h1V474.4h1V474.0h1V475.0h1V475.6h1V475.4h1V476.1h1V475.9h1V476.3h1V476.9h1V476.4h1V476.7h1V477.1h1V476.2h1V477.0h1V476.4h1V476.6h1V475.1h1V475.4h1V475.6h1V475.0h1V473.8h1V474.2h1V473.7h1V472.8h1V472.5h1V473.2h1V472.8h1V473.6h1V472.6h1V472.3h1V471.6h1V470.7h1V469.7h1V471.8h1V469.1h1V471.4h1V470.1h1V472.0h1V470.2h1V471.9h1V471.9h1V472.2h1V471.4h1V473.7h1V473.3h1V473.8h1V473.6h1V474.9h1V474.2h1V474.5h1V474.3h1V475.0h1V474.5h1V474.6h1V474.6h1V474.6h1V475.6h1V474.0h1V472.9h1V472.8h1V470.7h1V470.8h1V471.7h1V468.8h1V469.0h1V467.5h1V465.1h1V464.8h1V465.4h1V464.4h1V462.4h1V463.8h1V462.7h1V460.7h1V460.5h1V462.6h1V463.7h1V464.2h1V466.6h1V467.7h1V467.6h1V470.6h1V469.4h1V473.0h1V474.3h1V473.6h1V475.5h1V476.6h1V478.1h1V478.6h1V479.2h1V479.9h1V480.4h1V481.4h1V481.7h1V482.4h1V482.6h1V482.7h1V482.7h1V482.8h1V482.8h1V482.9h1V482.9h1V482.8h1V482.9h1V483.0h1V482.0h1V480.5h1V479.4h1V477.3h1V476.4h1V475.1h1V473.2h1V471.3h1V469.3h1V465.1h1V462.8h1V463.9h1V460.8h1V462.3h1V464.3h1V466.5h1V468.7h1V468.6h1V471.7h1V470.4h1V472.7h1V474.0h1V474.3h1V475.5h1V475.6h1V475.6h1V474.6h1V473.4h1V473.4h1V471.4h1V469.0h1V467.6h1V461.6h1V462.8h1V460.5h1V463.0h1V464.5h1V465.8h1V467.2h1V468.9h1V473.3h1V474.5h1V474.0h1V475.4h1V473.8h1V474.2h1V473.5h1V473.7h1V474.3h1V473.8h1V474.4h1V472.8h1V473.4h1V473.5h1V473.8h1V472.3h1V473.8h1V472.0h1V472.5h1V472.4h1V473.9h1V475.1h1V475.7h1V475.9h1V475.6h1V475.7h1V473.7h1V475.1h1V473.3h1V473.5h1V474.1h1V475.5h1V474.3h1V475.3h1V475.4h1V475.6h1V476.2h1V471.2h1V465.8h1V466.0h1V463.6h1V463.6h1V461.4h1V465.0h1V468.8h1V470.4h1V471.4h1V472.4h1V473.3h1V472.7h1V474.7h1V475.0h1V474.2h1V474.8h1V475.4h1V476.1h1V477.4h1V476.6h1V476.8h1V477.0h1V477.8h1V477.7h1V477.5h1V477.9h1V477.4h1V477.5h1V478.4h1V478.3h1V477.4h1V478.1h1V478.0h1V476.8h1V477.2h1V476.4h1V476.5h1V477.0h1V476.0h1V477.2h1V477.5h1V478.0h1V477.5h1V478.8h1V479.0h1V478.5h1V475.5h1V470.6h1V467.7h1V465.1h1V465.7h1V465.1h1V470.0h1V469.3h1V470.9h1V470.5h1V471.2h1V473.1h1V471.7h1V473.5h1V472.0h1V473.1h1V474.2h1V473.3h1V474.9h1V474.2h1V475.1h1V474.8h1V474.7h1V476.1h1V475.5h1V475.8h1V476.0h1V476.3h1V476.5h1V475.1h1V474.4h1V475.1h1V474.1h1V473.4h1V473.7h1V471.9h1V472.2h1V469.6h1V471.8h1V473.1h1V475.2h1V475.1h1V477.2h1V478.3h1V479.1h1V480.8h1V481.8h1V482.4h1V482.6h1V483.1h1V483.5h1V483.5h-1V483.9h-1V484.3h-1V484.7h-1V485.4h-1V486.4h-1V487.8h-1V488.8h-1V490.8h-1V492.3h-1V494.6h-1V495.9h-1V497.4h-1V498.8h-1V497.6h-1V496.3h-1V495.7h-1V495.0h-1V493.2h-1V493.8h-1V491.9h-1V491.4h-1V489.9h-1V490.7h-1V490.1h-1V489.9h-1V490.6h-1V490.3h-1V491.3h-1V491.7h-1V491.1h-1V491.8h-1V491.2h-1V491.6h-1V493.0h-1V492.1h-1V492.6h-1V493.4h-1V494.0h-1V493.1h-1V494.3h-1V493.8h-1V494.9h-1V495.2h-1V497.3h-1V500.9h-1V502.8h-1V500.6h-1V497.9h-1V494.6h-1V492.8h-1V489.4h-1V488.6h-1V488.5h-1V488.6h-1V488.9h-1V489.4h-1V490.3h-1V490.2h-1V489.3h-1V489.4h-1V489.7h-1V489.4h-1V489.6h-1V489.9h-1V489.2h-1V489.6h-1V489.5h-1V489.5h-1V488.6h-1V488.4h-1V488.6h-1V488.6h-1V488.6h-1V488.8h-1V489.3h-1V488.8h-1V489.5h-1V488.7h-1V490.4h-1V490.6h-1V490.1h-1V492.1h-1V491.7h-1V491.6h-1V494.1h-1V492.8h-1V493.9h-1V496.5h-1V497.7h-1V501.4h-1V501.6h-1V502.3h-1V507.0h-1V507.2h-1V503.7h-1V504.8h-1V497.2h-1V490.9h-1V490.7h-1V490.3h-1V490.2h-1V490.7h-1V491.7h-1V490.2h-1V490.9h-1V490.5h-1V491.1h-1V490.5h-1V489.8h-1V490.3h-1V490.4h-1V491.4h-1V491.3h-1V492.8h-1V493.5h-1V495.2h-1V493.7h-1V494.9h-1V493.9h-1V494.4h-1V492.9h-1V493.8h-1V492.6h-1V493.5h-1V493.4h-1V491.8h-1V493.2h-1V492.8h-1V491.6h-1V492.5h-1V492.2h-1V492.1h-1V491.7h-1V493.5h-1V496.0h-1V500.5h-1V502.3h-1V504.4h-1V502.7h-1V505.8h-1V505.5h-1V505.9h-1V502.9h-1V497.1h-1V495.2h-1V494.3h-1V492.7h-1V492.4h-1V491.8h-1V490.8h-1V490.6h-1V490.4h-1V492.4h-1V492.9h-1V492.2h-1V494.1h-1V493.3h-1V497.4h-1V499.3h-1V500.5h-1V499.9h-1V504.9h-1V505.0h-1V500.7h-1V499.2h-1V496.8h-1V497.6h-1V495.9h-1V494.7h-1V492.9h-1V493.1h-1V492.7h-1V491.4h-1V487.5h-1V484.0h-1V484.0h-1V484.1h-1V484.0h-1V484.1h-1V484.1h-1V484.0h-1V484.0h-1V484.0h-1V484.1h-1V484.2h-1V484.8h-1V485.1h-1V485.5h-1V486.2h-1V486.5h-1V487.3h-1V487.8h-1V489.0h-1V490.8h-1V492.1h-1V492.7h-1V494.4h-1V496.5h-1V498.6h-1V500.0h-1V500.5h-1V500.6h-1V503.7h-1V505.8h-1V503.8h-1V504.9h-1V503.9h-1V504.6h-1V503.5h-1V504.5h-1V501.5h-1V502.5h-1V501.1h-1V498.4h-1V499.5h-1V500.8h-1V500.0h-1V498.5h-1V497.8h-1V495.2h-1V495.2h-1V495.2h-1V493.5h-1V493.0h-1V493.0h-1V492.3h-1V491.6h-1V491.5h-1V491.6h-1V491.9h-1V493.1h-1V492.8h-1V492.7h-1V493.0h-1V493.1h-1V493.5h-1V494.3h-1V494.7h-1V493.8h-1V496.0h-1V494.7h-1V495.2h-1V497.4h-1V494.9h-1V497.5h-1V497.5h-1V497.4h-1V497.1h-1V495.5h-1V495.9h-1V495.2h-1V494.3h-1V495.2h-1V493.6h-1V493.5h-1V493.2h-1V493.1h-1V492.4h-1V492.4h-1V493.2h-1V492.5h-1V492.8h-1V491.8h-1V491.6h-1V491.5h-1V490.3h-1V490.9h-1V490.2h-1V490.6h-1V490.1h-1V490.9h-1V490.6h-1V490.8h-1V490.3h-1V492.1h-1V491.9h-1V491.9h-1V492.6h-1V492.0h-1V492.4h-1V492.7h-1V493.4h-1V494.6h-1V496.8h-1V497.5h-1V500.4h-1V499.5h-1V499.8h-1V500.0h-1V497.7h-1V497.1h-1V495.9h-1V496.5h-1V494.9h-1V494.4h-1V493.0h-1V492.5h-1V491.6h-1V491.9h-1V490.8h-1V491.6h-1V491.1h-1V491.6h-1V491.4h-1V491.2h-1V491.2h-1V491.8h-1V490.7h-1V491.1h-1V492.1h-1V491.9h-1V492.8h-1V492.2h-1V493.6h-1V493.3h-1V492.4h-1V492.5h-1V493.3h-1V493.7h-1V496.4h-1V495.8h-1V496.5h-1V498.0h-1V497.8h-1V496.3h-1V496.0h-1V495.1h-1V492.8h-1V492.5h-1V492.2h-1V491.1h-1V491.3h-1V490.2h-1V489.4h-1V489.0h-1V489.1h-1V489.5h-1V489.5h-1V490.1h-1V490.1h-1V490.0h-1V489.8h-1V489.5h-1V490.5h-1V490.4h-1V489.9h-1V490.4h-1V490.0h-1V490.7h-1V489.7h-1V489.6h-1V489.5h-1V489.7h-1V490.4h-1V490.5h-1V490.0h-1V490.3h-1V490.1h-1V489.7h-1V490.3h-1V489.6h-1V489.8h-1V489.4h-1V489.2h-1V489.5h-1V490.2h-1V490.1h-1V489.0h-1V489.2h-1V490.2h-1V490.0h-1V490.0h-1V489.9h-1V489.5h-1V489.7h-1V489.5h-1V488.7h-1V488.8h-1V489.7h-1V488.6h-1V489.6h-1V489.2h-1V488.8h-1V489.3h-1V489.5h-1V489.5h-1V489.8h-1V489.5h-1V489.8h-1V489.1h-1V489.1h-1V490.0h-1V489.1h-1V488.9h-1V489.2h-1V489.8h-1V489.7h-1V489.6h-1V489.4h-1V490.3h-1V490.2h-1V489.3h-1V489.4h-1V489.9h-1V490.0h-1V490.7h-1V491.0h-1V491.8h-1V491.3h-1V491.5h-1V492.9h-1V493.4h-1V492.9h-1V494.3h-1V495.3h-1V494.5h-1V495.6h-1V495.5h-1V494.1h-1V492.4h-1V490.8h-1V489.6h-1V487.6h-1V486.4h-1V485.2h-1V485.1h-1V485.4h-1V485.3h-1V485.2h-1V485.5h-1V485.4h-1V485.5h-1V485.4h-1V485.5h-1V485.9h-1V486.6h-1V488.2h-1V486.5h-1V485.2h-1V485.7h-1V485.6h-1V485.8h-1V486.1h-1V486.8h-1V486.9h-1V487.0h-1V487.9h-1V490.9h-1V493.1h-1V494.7h-1V489.9h-1V489.2h-1V488.6h-1V487.7h-1V486.8h-1V485.5h-1V485.3h-1V485.6h-1V486.4h-1V486.3h-1V486.7h-1V487.0h-1V487.5h-1V488.5h-1V488.1h-1V489.4h-1V491.5h-1V494.5h-1V496.4h-1V492.8h-1V492.0h-1V490.1h-1V489.7h-1V487.5h-1V486.2h-1V485.1h-1V483.9h-1V483.5h-1V483.5h-1V483.5h-1V483.5h-1V483.5h-1V483.5h-1V483.5h-1V483.5h-1V483.5h-1V483.5h-1V483.5h-1V483.5h-1V483.5h-1V483.5h-1V483.5h-1V483.5h-1V483.5h-1V483.5h-1V483.5h-1V483.5h-1V483.5h-1V483.5h-1V483.7h-1V483.9h-1V483.9h-1V483.9h-1V484.0h-1V484.0h-1V484.1h-1V484.1h-1V484.2h-1V484.2h-1V484.3h-1V484.3h-1V484.3h-1V484.5h-1V484.5h-1V484.6h-1V484.5h-1V484.5h-1V484.8h-1V484.6h-1V484.7h-1V484.9h-1V484.7h-1V484.9h-1V484.7h-1V484.9h-1V484.8h-1V484.9h-1V484.9h-1V484.9h-1V485.0h-1V485.0h-1V485.1h-1V485.0h-1V485.4h-1V486.4h-1V486.9h-1V488.4h-1V488.9h-1V490.0h-1V491.6h-1V492.1h-1V493.5h-1V496.9h-1V499.1h-1V498.9h-1V502.7h-1V500.5h-1V502.9h-1V499.7h-1V501.2h-1V498.4h-1V497.7h-1V497.7h-1V497.5h-1V497.6h-1V500.7h-1V500.8h-1V500.5h-1V500.5h-1V499.9h-1V497.7h-1V499.9h-1V499.0h-1V496.8h-1V494.7h-1V495.7h-1V494.5h-1V499.2h-1V502.1h-1V496.5h-1V489.1h-1V487.3h-1V487.3h-1V486.8h-1V486.9h-1V486.3h-1V485.7h-1V485.8h-1V485.9h-1V485.7h-1V485.9h-1V485.9h-1V485.8h-1V486.1h-1V485.8h-1V485.7h-1V485.8h-1V486.2h-1V485.8h-1V486.0h-1V486.4h-1V486.2h-1V486.2h-1V486.4h-1V486.4h-1V486.8h-1V487.5h-1V487.6h-1V488.4h-1V489.1h-1V489.5h-1V492.0h-1V491.9h-1V494.3h-1V495.1h-1V494.9h-1V494.8h-1V498.3h-1V497.5h-1V500.2h-1V498.6h-1V497.9h-1V500.5h-1V499.8h-1V498.0h-1V498.3h-1V497.2h-1V497.6h-1V494.9h-1V494.3h-1V492.3h-1V493.0h-1V491.2h-1V491.3h-1V489.7h-1V490.1h-1V488.9h-1V488.5h-1V488.0h-1V487.1h-1V486.1h-1V485.6h-1V485.2h-1V485.0h-1V485.3h-1V485.2h-1V485.3h-1V485.6h-1V485.6h-1V485.5h-1V485.7h-1V485.7h-1V485.7h-1V485.5h-1V485.7h-1V486.1h-1V486.2h-1V485.8h-1V486.1h-1V486.3h-1V486.0h-1V486.6h-1V486.4h-1V486.4h-1V486.4h-1V486.8h-1V486.5h-1V487.3h-1V488.2h-1V489.2h-1V489.8h-1V491.3h-1V491.1h-1V491.4h-1V492.1h-1V492.9h-1V495.6h-1V494.4h-1V496.7h-1V494.5h-1V495.0h-1V494.6h-1V494.4h-1V495.4h-1V494.3h-1V493.8h-1V494.7h-1V497.7h-1V498.3h-1V498.1h-1V499.3h-1V499.3h-1V497.8h-1V497.0h-1V493.8h-1V492.9h-1V493.2h-1V491.7h-1V489.7h-1V489.5h-1V488.9h-1V487.9h-1V487.0h-1V486.9h-1V486.4h-1V486.7h-1V486.7h-1V486.3h-1V486.1h-1V486.2h-1V485.9h-1V486.3h-1V486.2h-1V486.0h-1V485.8h-1V485.9h-1V485.9h-1V486.0h-1V485.6h-1V485.9h-1V485.6h-1V485.7h-1V485.3h-1V485.2h-1V485.3h-1V485.1h-1V485.3h-1V485.4h-1V485.4h-1V485.8h-1V485.9h-1V486.0h-1V486.5h-1V486.8h-1V486.8h-1V487.4h-1V487.0h-1V487.3h-1V487.5h-1V487.5h-1V488.3h-1V488.7h-1V488.2h-1V489.2h-1V489.4h-1V489.9h-1V489.5h-1V489.3h-1V490.5h-1V491.1h-1V491.2h-1V491.5h-1V491.3h-1V492.0h-1V492.0h-1V492.6h-1V492.5h-1V491.5h-1V491.6h-1V492.3h-1V491.7h-1V491.2h-1V490.5h-1V489.9h-1V490.3h-1V489.8h-1V489.9h-1V489.7h-1V489.2h-1V488.9h-1V489.4h-1V488.6h-1V488.7h-1V487.9h-1V487.6h-1V487.2h-1V487.3h-1V487.2h-1V486.5h-1V486.7h-1V486.1h-1V486.1h-1V486.2h-1V486.3h-1V486.3h-1V486.0h-1V486.1h-1V485.8h-1V485.6h-1V485.7h-1V485.7h-1V485.3h-1V485.3h-1V485.3h-1V485.3h-1V485.2h-1V485.1h-1V485.0h-1V485.3h-1V485.5h-1V486.2h-1V486.2h-1V486.9h-1V487.1h-1V487.3h-1V487.6h-1V487.4h-1V487.2h-1V488.0h-1V488.4h-1V487.9h-1V488.8h-1V488.3h-1V489.4h-1V489.2h-1V490.5h-1V491.0h-1V490.7h-1V490.2h-1V490.1h-1V489.3h-1V489.6h-1V489.4h-1V489.3h-1V489.6h-1V489.0h-1V489.5h-1V489.5h-1V488.5h-1V489.1h-1V489.3h-1V489.0h-1V488.5h-1V488.6h-1V488.3h-1V489.1h-1V488.3h-1V489.0h-1V489.0h-1V488.5h-1V488.7h-1V488.9h-1V489.3h-1V490.3h-1V490.4h-1V490.5h-1V491.5h-1V492.4h-1V492.4h-1V493.0h-1V493.3h-1V494.6h-1V492.6h-1V491.6h-1V492.0h-1V492.0h-1V491.4h-1V490.1h-1V490.1h-1V488.8h-1V488.5h-1V487.7h-1V487.2h-1V487.2h-1V487.1h-1V486.9h-1V486.4h-1V486.7h-1V486.8h-1V486.9h-1V486.8h-1V486.3h-1V486.3h-1V486.8h-1V486.4h-1V486.6h-1V486.6h-1V486.3h-1V486.5h-1V486.4h-1V486.5h-1V486.4h-1V486.7h-1V486.4h-1V486.5h-1V486.7h-1V487.2h-1V486.8h-1V487.0h-1V486.8h-1V486.6h-1V487.0h-1V487.2h-1V487.3h-1V487.5h-1V486.9h-1V487.4h-1V487.4h-1V487.1h-1V487.4h-1V487.7h-1V486.9h-1V487.1h-1V488.4h-1V488.1h-1V488.7h-1V488.9h-1V489.9h-1V490.8h-1V489.4h-1V489.6h-1V489.3h-1V490.2h-1V489.4h-1V488.9h-1V488.6h-1V488.6h-1V488.4h-1V488.9h-1V488.4h-1V488.7h-1V488.5h-1V487.6h-1V488.0h-1V487.9h-1V487.6h-1V487.3h-1V487.0h-1V487.0h-1V486.7h-1V486.7h-1V487.4h-1V487.3h-1V487.8h-1V488.1h-1V487.9h-1V488.3h-1V487.7h-1V488.3h-1V487.7h-1V488.0h-1V488.3h-1V487.9h-1V488.7h-1V488.4h-1V488.4h-1V488.7h-1V488.3h-1V488.4h-1V488.2h-1V488.5h-1V488.6h-1V488.5h-1V489.0h-1V488.4h-1V488.8h-1V489.7h-1V489.5h-1V489.8h-1V489.4h-1V490.0h-1V489.9h-1V489.4h-1V488.9h-1V488.9h-1V488.8h-1V488.6h-1V487.5h-1V487.3h-1V486.7h-1V486.6h-1V486.5h-1V485.7h-1V485.6h-1V485.0h-1V484.8h-1V484.5h-1V484.1h-1V483.9h-1V483.5h-1Z" fill="#7baad0" stroke="#f7f3ee" stroke-width="0.6" stroke-opacity="0.6"/><path d="M1509 483.5H1551" stroke="#fff" stroke-width="1.2"/><path d="M1010 483.5H1033" stroke="#fff" stroke-width="1.2"/></svg>
<div style="left:540px;top:522px;width:1796px;height:834px;background:#000"></div>
<div style="left:541px;top:544px;width:1794px;height:23px;background:#222;border-top:1px solid #2a2a2a;border-bottom:1px solid #2a2a2a"></div>
<div style="left:541px;top:588px;width:1794px;height:23px;background:#222;border-top:1px solid #2a2a2a;border-bottom:1px solid #2a2a2a"></div>
<div style="left:541px;top:632px;width:1794px;height:23px;background:#222;border-top:1px solid #2a2a2a;border-bottom:1px solid #2a2a2a"></div>
<div style="left:541px;top:676px;width:1794px;height:23px;background:#222;border-top:1px solid #2a2a2a;border-bottom:1px solid #2a2a2a"></div>
<div style="left:541px;top:720px;width:1794px;height:23px;background:#222;border-top:1px solid #2a2a2a;border-bottom:1px solid #2a2a2a"></div>
<div style="left:541px;top:764px;width:1794px;height:23px;background:#222;border-top:1px solid #2a2a2a;border-bottom:1px solid #2a2a2a"></div>
<div style="left:541px;top:808px;width:1794px;height:23px;background:#222;border-top:1px solid #2a2a2a;border-bottom:1px solid #2a2a2a"></div>
<div style="left:541px;top:852px;width:1794px;height:23px;background:#222;border-top:1px solid #2a2a2a;border-bottom:1px solid #2a2a2a"></div>
<div style="left:541px;top:896px;width:1794px;height:23px;background:#222;border-top:1px solid #2a2a2a;border-bottom:1px solid #2a2a2a"></div>
<div style="left:541px;top:940px;width:1794px;height:23px;background:#222;border-top:1px solid #2a2a2a;border-bottom:1px solid #2a2a2a"></div>
<div style="left:541px;top:984px;width:1794px;height:23px;background:#222;border-top:1px solid #2a2a2a;border-bottom:1px solid #2a2a2a"></div>
<div style="left:541px;top:1028px;width:1794px;height:23px;background:#222;border-top:1px solid #2a2a2a;border-bottom:1px solid #2a2a2a"></div>
<div style="left:541px;top:1072px;width:1794px;height:23px;background:#222;border-top:1px solid #2a2a2a;border-bottom:1px solid #2a2a2a"></div>
<div style="left:541px;top:1116px;width:1794px;height:23px;background:#222;border-top:1px solid #2a2a2a;border-bottom:1px solid #2a2a2a"></div>
<div style="left:541px;top:1160px;width:1794px;height:23px;background:#222;border-top:1px solid #2a2a2a;border-bottom:1px solid #2a2a2a"></div>
<div style="left:541px;top:1204px;width:1794px;height:23px;background:#222;border-top:1px solid #2a2a2a;border-bottom:1px solid #2a2a2a"></div>
<div style="left:541px;top:1248px;width:1794px;height:23px;background:#222;border-top:1px solid #2a2a2a;border-bottom:1px solid #2a2a2a"></div>
<div style="left:541px;top:1292px;width:1794px;height:23px;background:#222;border-top:1px solid #2a2a2a;border-bottom:1px solid #2a2a2a"></div>
<div style="left:540px;top:1336px;width:1796px;height:1px;background:#2e2e2e"></div>
<div style="left:639px;top:522px;width:1px;height:834px;background:#2b2b2b"></div>
<div style="left:739px;top:522px;width:1px;height:834px;background:#2b2b2b"></div>
<div style="left:839px;top:522px;width:1px;height:834px;background:#2b2b2b"></div>
<div style="left:939px;top:522px;width:1px;height:834px;background:#2b2b2b"></div>
<div style="left:1039px;top:522px;width:1px;height:834px;background:#2b2b2b"></div>
<div style="left:1139px;top:522px;width:1px;height:834px;background:#2b2b2b"></div>
<div style="left:1239px;top:522px;width:1px;height:834px;background:#2b2b2b"></div>
<div style="left:1339px;top:522px;width:1px;height:834px;background:#2b2b2b"></div>
<div style="left:1439px;top:522px;width:1px;height:834px;background:#2b2b2b"></div>
<div style="left:1539px;top:522px;width:1px;height:834px;background:#2b2b2b"></div>
<div style="left:1639px;top:522px;width:1px;height:834px;background:#2b2b2b"></div>
<div style="left:1739px;top:522px;width:1px;height:834px;background:#2b2b2b"></div>
<div style="left:1839px;top:522px;width:1px;height:834px;background:#2b2b2b"></div>
<div style="left:1939px;top:522px;width:1px;height:834px;background:#2b2b2b"></div>
<div style="left:2039px;top:522px;width:1px;height:834px;background:#2b2b2b"></div>
<div style="left:2139px;top:522px;width:1px;height:834px;background:#2b2b2b"></div>
<div style="left:2239px;top:522px;width:1px;height:834px;background:#2b2b2b"></div>
<div style="left:2336px;top:522px;width:1px;height:835px;background:#fff"></div>
<div style="left:540px;top:1356px;width:1797px;height:1px;background:#fff"></div>
<div style="left:361px;top:522px;width:179px;height:835px;background:#000"></div>
<div style="left:362px;top:523px;width:177px;height:20px;background:#00ffff"></div>
<svg style="left:362px;top:527px;" width="13" height="13" viewBox="0 0 13 13"><circle cx="6.5" cy="6.5" r="5" fill="#fff" stroke="#000" stroke-width="1.6"/><circle cx="6.5" cy="6.5" r="2.3" fill="#5a5a5a"/></svg>
<span class="t" style="left:377px;top:525px;letter-spacing:0.030px;">New Timing</span>
<div style="left:362px;top:545px;width:177px;height:20px;background:#f0f0f0"></div>
<svg style="left:515px;top:547px;" width="16" height="16" viewBox="0 0 16 16"><path d="M9 15L11.5 1L15.5 11Z" fill="#1e9be0"/><path d="M11.5 1L15.5 11L13 12Z" fill="#0d6fb8"/><path d="M1 3L5 1L9 3L9 8L5 10L1 8Z" fill="#d81820"/><path d="M1 3L5 5L9 3L5 1Z" fill="#f05058"/><path d="M5 5v5L1 8V3Z" fill="#b00c14"/><circle cx="6" cy="11" r="4.2" fill="#5628c0"/><circle cx="5.6" cy="10.2" r="2.6" fill="#a890f8"/><circle cx="5.4" cy="9.6" r="1.2" fill="#e8e0ff"/></svg>
<span class="t" style="left:377px;top:547px;letter-spacing:-0.069px;">Everything</span>
<div style="left:362px;top:567px;width:177px;height:20px;background:#f0f0f0"></div>
<svg style="left:515px;top:569px;" width="16" height="16" viewBox="0 0 16 16"><path d="M9 15L11.5 1L15.5 11Z" fill="#1e9be0"/><path d="M11.5 1L15.5 11L13 12Z" fill="#0d6fb8"/><path d="M1 3L5 1L9 3L9 8L5 10L1 8Z" fill="#d81820"/><path d="M1 3L5 5L9 3L5 1Z" fill="#f05058"/><path d="M5 5v5L1 8V3Z" fill="#b00c14"/><circle cx="6" cy="11" r="4.2" fill="#5628c0"/><circle cx="5.6" cy="10.2" r="2.6" fill="#a890f8"/><circle cx="5.4" cy="9.6" r="1.2" fill="#e8e0ff"/></svg>
<span class="t" style="left:377px;top:569px;letter-spacing:-0.338px;">CandyCanes</span>
<div style="left:362px;top:589px;width:177px;height:20px;background:#f0f0f0"></div>
<svg style="left:515px;top:591px;" width="16" height="16" viewBox="0 0 16 16"><path d="M9 15L11.5 1L15.5 11Z" fill="#1e9be0"/><path d="M11.5 1L15.5 11L13 12Z" fill="#0d6fb8"/><path d="M1 3L5 1L9 3L9 8L5 10L1 8Z" fill="#d81820"/><path d="M1 3L5 5L9 3L5 1Z" fill="#f05058"/><path d="M5 5v5L1 8V3Z" fill="#b00c14"/><circle cx="6" cy="11" r="4.2" fill="#5628c0"/><circle cx="5.6" cy="10.2" r="2.6" fill="#a890f8"/><circle cx="5.4" cy="9.6" r="1.2" fill="#e8e0ff"/></svg>
<span class="t" style="left:377px;top:591px;letter-spacing:-0.182px;">Wreath L</span>
<div style="left:362px;top:611px;width:177px;height:20px;background:#f0f0f0"></div>
<svg style="left:515px;top:613px;" width="16" height="16" viewBox="0 0 16 16"><path d="M9 15L11.5 1L15.5 11Z" fill="#1e9be0"/><path d="M11.5 1L15.5 11L13 12Z" fill="#0d6fb8"/><path d="M1 3L5 1L9 3L9 8L5 10L1 8Z" fill="#d81820"/><path d="M1 3L5 5L9 3L5 1Z" fill="#f05058"/><path d="M5 5v5L1 8V3Z" fill="#b00c14"/><circle cx="6" cy="11" r="4.2" fill="#5628c0"/><circle cx="5.6" cy="10.2" r="2.6" fill="#a890f8"/><circle cx="5.4" cy="9.6" r="1.2" fill="#e8e0ff"/></svg>
<span class="t" style="left:377px;top:613px;letter-spacing:-0.167px;">FirstFloor</span>
<div style="left:362px;top:633px;width:177px;height:20px;background:#f0f0f0"></div>
<svg style="left:515px;top:635px;" width="16" height="16" viewBox="0 0 16 16"><path d="M9 15L11.5 1L15.5 11Z" fill="#1e9be0"/><path d="M11.5 1L15.5 11L13 12Z" fill="#0d6fb8"/><path d="M1 3L5 1L9 3L9 8L5 10L1 8Z" fill="#d81820"/><path d="M1 3L5 5L9 3L5 1Z" fill="#f05058"/><path d="M5 5v5L1 8V3Z" fill="#b00c14"/><circle cx="6" cy="11" r="4.2" fill="#5628c0"/><circle cx="5.6" cy="10.2" r="2.6" fill="#a890f8"/><circle cx="5.4" cy="9.6" r="1.2" fill="#e8e0ff"/></svg>
<span class="t" style="left:377px;top:635px;letter-spacing:-0.186px;">FirstRoof</span>
<div style="left:362px;top:655px;width:177px;height:20px;background:#f0f0f0"></div>
<svg style="left:515px;top:657px;" width="16" height="16" viewBox="0 0 16 16"><path d="M9 15L11.5 1L15.5 11Z" fill="#1e9be0"/><path d="M11.5 1L15.5 11L13 12Z" fill="#0d6fb8"/><path d="M1 3L5 1L9 3L9 8L5 10L1 8Z" fill="#d81820"/><path d="M1 3L5 5L9 3L5 1Z" fill="#f05058"/><path d="M5 5v5L1 8V3Z" fill="#b00c14"/><circle cx="6" cy="11" r="4.2" fill="#5628c0"/><circle cx="5.6" cy="10.2" r="2.6" fill="#a890f8"/><circle cx="5.4" cy="9.6" r="1.2" fill="#e8e0ff"/></svg>
<span class="t" style="left:377px;top:657px;letter-spacing:-0.185px;">SecondFloor</span>
<div style="left:362px;top:677px;width:177px;height:20px;background:#f0f0f0"></div>
<svg style="left:515px;top:679px;" width="16" height="16" viewBox="0 0 16 16"><path d="M9 15L11.5 1L15.5 11Z" fill="#1e9be0"/><path d="M11.5 1L15.5 11L13 12Z" fill="#0d6fb8"/><path d="M1 3L5 1L9 3L9 8L5 10L1 8Z" fill="#d81820"/><path d="M1 3L5 5L9 3L5 1Z" fill="#f05058"/><path d="M5 5v5L1 8V3Z" fill="#b00c14"/><circle cx="6" cy="11" r="4.2" fill="#5628c0"/><circle cx="5.6" cy="10.2" r="2.6" fill="#a890f8"/><circle cx="5.4" cy="9.6" r="1.2" fill="#e8e0ff"/></svg>
<span class="t" style="left:377px;top:679px;letter-spacing:-0.203px;">SecondRoof</span>
<div style="left:362px;top:699px;width:177px;height:20px;background:#f0f0f0"></div>
<svg style="left:515px;top:701px;" width="16" height="16" viewBox="0 0 16 16"><path d="M9 15L11.5 1L15.5 11Z" fill="#1e9be0"/><path d="M11.5 1L15.5 11L13 12Z" fill="#0d6fb8"/><path d="M1 3L5 1L9 3L9 8L5 10L1 8Z" fill="#d81820"/><path d="M1 3L5 5L9 3L5 1Z" fill="#f05058"/><path d="M5 5v5L1 8V3Z" fill="#b00c14"/><circle cx="6" cy="11" r="4.2" fill="#5628c0"/><circle cx="5.6" cy="10.2" r="2.6" fill="#a890f8"/><circle cx="5.4" cy="9.6" r="1.2" fill="#e8e0ff"/></svg>
<span class="t" style="left:377px;top:701px;letter-spacing:0.045px;">AllRoof</span>
<div style="left:362px;top:721px;width:177px;height:20px;background:#f0f0f0"></div>
<svg style="left:515px;top:723px;" width="16" height="16" viewBox="0 0 16 16"><path d="M9 15L11.5 1L15.5 11Z" fill="#1e9be0"/><path d="M11.5 1L15.5 11L13 12Z" fill="#0d6fb8"/><path d="M1 3L5 1L9 3L9 8L5 10L1 8Z" fill="#d81820"/><path d="M1 3L5 5L9 3L5 1Z" fill="#f05058"/><path d="M5 5v5L1 8V3Z" fill="#b00c14"/><circle cx="6" cy="11" r="4.2" fill="#5628c0"/><circle cx="5.6" cy="10.2" r="2.6" fill="#a890f8"/><circle cx="5.4" cy="9.6" r="1.2" fill="#e8e0ff"/></svg>
<span class="t" style="left:377px;top:723px;letter-spacing:0.097px;">AllWindows</span>
<div style="left:362px;top:743px;width:177px;height:20px;background:#f0f0f0"></div>
<svg style="left:515px;top:745px;" width="16" height="16" viewBox="0 0 16 16"><path d="M9 15L11.5 1L15.5 11Z" fill="#1e9be0"/><path d="M11.5 1L15.5 11L13 12Z" fill="#0d6fb8"/><path d="M1 3L5 1L9 3L9 8L5 10L1 8Z" fill="#d81820"/><path d="M1 3L5 5L9 3L5 1Z" fill="#f05058"/><path d="M5 5v5L1 8V3Z" fill="#b00c14"/><circle cx="6" cy="11" r="4.2" fill="#5628c0"/><circle cx="5.6" cy="10.2" r="2.6" fill="#a890f8"/><circle cx="5.4" cy="9.6" r="1.2" fill="#e8e0ff"/></svg>
<span class="t" style="left:377px;top:745px;letter-spacing:-0.182px;">Wreath R</span>
<div style="left:362px;top:765px;width:177px;height:20px;background:#f0f0f0"></div>
<svg style="left:515px;top:767px;" width="16" height="16" viewBox="0 0 16 16"><path d="M9 15L11.5 1L15.5 11Z" fill="#1e9be0"/><path d="M11.5 1L15.5 11L13 12Z" fill="#0d6fb8"/><path d="M1 3L5 1L9 3L9 8L5 10L1 8Z" fill="#d81820"/><path d="M1 3L5 5L9 3L5 1Z" fill="#f05058"/><path d="M5 5v5L1 8V3Z" fill="#b00c14"/><circle cx="6" cy="11" r="4.2" fill="#5628c0"/><circle cx="5.6" cy="10.2" r="2.6" fill="#a890f8"/><circle cx="5.4" cy="9.6" r="1.2" fill="#e8e0ff"/></svg>
<span class="t" style="left:377px;top:767px;letter-spacing:-0.560px;">Canes2</span>
<div style="left:362px;top:787px;width:177px;height:20px;background:#f0f0f0"></div>
<svg style="left:515px;top:789px;" width="16" height="16" viewBox="0 0 16 16"><path d="M9 15L11.5 1L15.5 11Z" fill="#1e9be0"/><path d="M11.5 1L15.5 11L13 12Z" fill="#0d6fb8"/><path d="M1 3L5 1L9 3L9 8L5 10L1 8Z" fill="#d81820"/><path d="M1 3L5 5L9 3L5 1Z" fill="#f05058"/><path d="M5 5v5L1 8V3Z" fill="#b00c14"/><circle cx="6" cy="11" r="4.2" fill="#5628c0"/><circle cx="5.6" cy="10.2" r="2.6" fill="#a890f8"/><circle cx="5.4" cy="9.6" r="1.2" fill="#e8e0ff"/></svg>
<span class="t" style="left:377px;top:789px;letter-spacing:-0.003px;">Override All</span>
<div style="left:362px;top:809px;width:177px;height:20px;background:#f0f0f0"></div>
<svg style="left:515px;top:811px;" width="16" height="16" viewBox="0 0 16 16"><path d="M9 15L11.5 1L15.5 11Z" fill="#1e9be0"/><path d="M11.5 1L15.5 11L13 12Z" fill="#0d6fb8"/><path d="M1 3L5 1L9 3L9 8L5 10L1 8Z" fill="#d81820"/><path d="M1 3L5 5L9 3L5 1Z" fill="#f05058"/><path d="M5 5v5L1 8V3Z" fill="#b00c14"/><circle cx="6" cy="11" r="4.2" fill="#5628c0"/><circle cx="5.6" cy="10.2" r="2.6" fill="#a890f8"/><circle cx="5.4" cy="9.6" r="1.2" fill="#e8e0ff"/></svg>
<span class="t" style="left:377px;top:811px;letter-spacing:-0.057px;">Porch Lights</span>
<div style="left:362px;top:831px;width:177px;height:20px;background:#f0f0f0"></div>
<svg style="left:515px;top:833px;" width="16" height="16" viewBox="0 0 16 16"><path d="M9 15L11.5 1L15.5 11Z" fill="#1e9be0"/><path d="M11.5 1L15.5 11L13 12Z" fill="#0d6fb8"/><path d="M1 3L5 1L9 3L9 8L5 10L1 8Z" fill="#d81820"/><path d="M1 3L5 5L9 3L5 1Z" fill="#f05058"/><path d="M5 5v5L1 8V3Z" fill="#b00c14"/><circle cx="6" cy="11" r="4.2" fill="#5628c0"/><circle cx="5.6" cy="10.2" r="2.6" fill="#a890f8"/><circle cx="5.4" cy="9.6" r="1.2" fill="#e8e0ff"/></svg>
<span class="t" style="left:377px;top:833px;letter-spacing:-0.158px;">Carriage Lights</span>
<div style="left:362px;top:853px;width:177px;height:20px;background:#f0f0f0"></div>
<svg style="left:515px;top:855px;" width="16" height="16" viewBox="0 0 16 16"><path d="M9 15L11.5 1L15.5 11Z" fill="#1e9be0"/><path d="M11.5 1L15.5 11L13 12Z" fill="#0d6fb8"/><path d="M1 3L5 1L9 3L9 8L5 10L1 8Z" fill="#d81820"/><path d="M1 3L5 5L9 3L5 1Z" fill="#f05058"/><path d="M5 5v5L1 8V3Z" fill="#b00c14"/><circle cx="6" cy="11" r="4.2" fill="#5628c0"/><circle cx="5.6" cy="10.2" r="2.6" fill="#a890f8"/><circle cx="5.4" cy="9.6" r="1.2" fill="#e8e0ff"/></svg>
<span class="t" style="left:377px;top:855px;letter-spacing:-0.076px;">All Lamps</span>
<div style="left:362px;top:875px;width:177px;height:20px;background:#f0f0f0"></div>
<svg style="left:515px;top:877px;" width="16" height="16" viewBox="0 0 16 16"><path d="M9 15L11.5 1L15.5 11Z" fill="#1e9be0"/><path d="M11.5 1L15.5 11L13 12Z" fill="#0d6fb8"/><path d="M1 3L5 1L9 3L9 8L5 10L1 8Z" fill="#d81820"/><path d="M1 3L5 5L9 3L5 1Z" fill="#f05058"/><path d="M5 5v5L1 8V3Z" fill="#b00c14"/><circle cx="6" cy="11" r="4.2" fill="#5628c0"/><circle cx="5.6" cy="10.2" r="2.6" fill="#a890f8"/><circle cx="5.4" cy="9.6" r="1.2" fill="#e8e0ff"/></svg>
<span class="t" style="left:377px;top:877px;letter-spacing:-0.037px;">EverythingWithLamps</span>
<div style="left:362px;top:897px;width:177px;height:20px;background:#f0f0f0"></div>
<svg style="left:515px;top:899px;" width="16" height="16" viewBox="0 0 16 16"><path d="M9 15L11.5 1L15.5 11Z" fill="#1e9be0"/><path d="M11.5 1L15.5 11L13 12Z" fill="#0d6fb8"/><path d="M1 3L5 1L9 3L9 8L5 10L1 8Z" fill="#d81820"/><path d="M1 3L5 5L9 3L5 1Z" fill="#f05058"/><path d="M5 5v5L1 8V3Z" fill="#b00c14"/><circle cx="6" cy="11" r="4.2" fill="#5628c0"/><circle cx="5.6" cy="10.2" r="2.6" fill="#a890f8"/><circle cx="5.4" cy="9.6" r="1.2" fill="#e8e0ff"/></svg>
<span class="t" style="left:377px;top:899px;letter-spacing:-0.195px;">MegaTree + Star</span>
<div style="left:362px;top:919px;width:177px;height:20px;background:#f0f0f0"></div>
<svg style="left:515px;top:921px;" width="16" height="16" viewBox="0 0 16 16"><path d="M9 15L11.5 1L15.5 11Z" fill="#1e9be0"/><path d="M11.5 1L15.5 11L13 12Z" fill="#0d6fb8"/><path d="M1 3L5 1L9 3L9 8L5 10L1 8Z" fill="#d81820"/><path d="M1 3L5 5L9 3L5 1Z" fill="#f05058"/><path d="M5 5v5L1 8V3Z" fill="#b00c14"/><circle cx="6" cy="11" r="4.2" fill="#5628c0"/><circle cx="5.6" cy="10.2" r="2.6" fill="#a890f8"/><circle cx="5.4" cy="9.6" r="1.2" fill="#e8e0ff"/></svg>
<span class="t" style="left:377px;top:921px;letter-spacing:-0.267px;">Star Group</span>
<div style="left:362px;top:941px;width:177px;height:20px;background:#f0f0f0"></div>
<svg style="left:515px;top:943px;" width="16" height="16" viewBox="0 0 16 16"><path d="M9 15L11.5 1L15.5 11Z" fill="#1e9be0"/><path d="M11.5 1L15.5 11L13 12Z" fill="#0d6fb8"/><path d="M1 3L5 1L9 3L9 8L5 10L1 8Z" fill="#d81820"/><path d="M1 3L5 5L9 3L5 1Z" fill="#f05058"/><path d="M5 5v5L1 8V3Z" fill="#b00c14"/><circle cx="6" cy="11" r="4.2" fill="#5628c0"/><circle cx="5.6" cy="10.2" r="2.6" fill="#a890f8"/><circle cx="5.4" cy="9.6" r="1.2" fill="#e8e0ff"/></svg>
<span class="t" style="left:377px;top:943px;letter-spacing:-0.139px;">MiniTrees</span>
<div style="left:362px;top:963px;width:177px;height:20px;background:#f0f0f0"></div>
<svg style="left:515px;top:965px;" width="16" height="16" viewBox="0 0 16 16"><path d="M9 15L11.5 1L15.5 11Z" fill="#1e9be0"/><path d="M11.5 1L15.5 11L13 12Z" fill="#0d6fb8"/><path d="M1 3L5 1L9 3L9 8L5 10L1 8Z" fill="#d81820"/><path d="M1 3L5 5L9 3L5 1Z" fill="#f05058"/><path d="M5 5v5L1 8V3Z" fill="#b00c14"/><circle cx="6" cy="11" r="4.2" fill="#5628c0"/><circle cx="5.6" cy="10.2" r="2.6" fill="#a890f8"/><circle cx="5.4" cy="9.6" r="1.2" fill="#e8e0ff"/></svg>
<span class="t" style="left:377px;top:965px;letter-spacing:-0.297px;">All Stars</span>
<div style="left:362px;top:985px;width:177px;height:20px;background:#f0f0f0"></div>
<svg style="left:515px;top:987px;" width="16" height="16" viewBox="0 0 16 16"><path d="M9 15L11.5 1L15.5 11Z" fill="#1e9be0"/><path d="M11.5 1L15.5 11L13 12Z" fill="#0d6fb8"/><path d="M1 3L5 1L9 3L9 8L5 10L1 8Z" fill="#d81820"/><path d="M1 3L5 5L9 3L5 1Z" fill="#f05058"/><path d="M5 5v5L1 8V3Z" fill="#b00c14"/><circle cx="6" cy="11" r="4.2" fill="#5628c0"/><circle cx="5.6" cy="10.2" r="2.6" fill="#a890f8"/><circle cx="5.4" cy="9.6" r="1.2" fill="#e8e0ff"/></svg>
<span class="t" style="left:377px;top:987px;letter-spacing:-0.299px;">All Trees</span>
<div style="left:362px;top:1007px;width:177px;height:20px;background:#f0f0f0"></div>
<svg style="left:515px;top:1009px;" width="16" height="16" viewBox="0 0 16 16"><path d="M9 15L11.5 1L15.5 11Z" fill="#1e9be0"/><path d="M11.5 1L15.5 11L13 12Z" fill="#0d6fb8"/><path d="M1 3L5 1L9 3L9 8L5 10L1 8Z" fill="#d81820"/><path d="M1 3L5 5L9 3L5 1Z" fill="#f05058"/><path d="M5 5v5L1 8V3Z" fill="#b00c14"/><circle cx="6" cy="11" r="4.2" fill="#5628c0"/><circle cx="5.6" cy="10.2" r="2.6" fill="#a890f8"/><circle cx="5.4" cy="9.6" r="1.2" fill="#e8e0ff"/></svg>
<span class="t" style="left:377px;top:1009px;letter-spacing:-0.102px;">All Wreaths</span>
<div style="left:362px;top:1029px;width:177px;height:20px;background:#f0f0f0"></div>
<svg style="left:515px;top:1031px;" width="16" height="16" viewBox="0 0 16 16"><path d="M9 15L11.5 1L15.5 11Z" fill="#1e9be0"/><path d="M11.5 1L15.5 11L13 12Z" fill="#0d6fb8"/><path d="M1 3L5 1L9 3L9 8L5 10L1 8Z" fill="#d81820"/><path d="M1 3L5 5L9 3L5 1Z" fill="#f05058"/><path d="M5 5v5L1 8V3Z" fill="#b00c14"/><circle cx="6" cy="11" r="4.2" fill="#5628c0"/><circle cx="5.6" cy="10.2" r="2.6" fill="#a890f8"/><circle cx="5.4" cy="9.6" r="1.2" fill="#e8e0ff"/></svg>
<span class="t" style="left:377px;top:1031px;letter-spacing:-0.138px;">Door Wreath L</span>
<div style="left:362px;top:1051px;width:177px;height:20px;background:#f0f0f0"></div>
<svg style="left:515px;top:1053px;" width="16" height="16" viewBox="0 0 16 16"><path d="M9 15L11.5 1L15.5 11Z" fill="#1e9be0"/><path d="M11.5 1L15.5 11L13 12Z" fill="#0d6fb8"/><path d="M1 3L5 1L9 3L9 8L5 10L1 8Z" fill="#d81820"/><path d="M1 3L5 5L9 3L5 1Z" fill="#f05058"/><path d="M5 5v5L1 8V3Z" fill="#b00c14"/><circle cx="6" cy="11" r="4.2" fill="#5628c0"/><circle cx="5.6" cy="10.2" r="2.6" fill="#a890f8"/><circle cx="5.4" cy="9.6" r="1.2" fill="#e8e0ff"/></svg>
<span class="t" style="left:377px;top:1053px;letter-spacing:-0.138px;">Door Wreath R</span>
<div style="left:362px;top:1073px;width:177px;height:20px;background:#f0f0f0"></div>
<svg style="left:515px;top:1075px;" width="16" height="16" viewBox="0 0 16 16"><path d="M9 15L11.5 1L15.5 11Z" fill="#1e9be0"/><path d="M11.5 1L15.5 11L13 12Z" fill="#0d6fb8"/><path d="M1 3L5 1L9 3L9 8L5 10L1 8Z" fill="#d81820"/><path d="M1 3L5 5L9 3L5 1Z" fill="#f05058"/><path d="M5 5v5L1 8V3Z" fill="#b00c14"/><circle cx="6" cy="11" r="4.2" fill="#5628c0"/><circle cx="5.6" cy="10.2" r="2.6" fill="#a890f8"/><circle cx="5.4" cy="9.6" r="1.2" fill="#e8e0ff"/></svg>
<span class="t" style="left:377px;top:1075px;letter-spacing:-0.292px;">Garage Wreath</span>
<div style="left:362px;top:1095px;width:177px;height:20px;background:#f0f0f0"></div>
<svg style="left:515px;top:1097px;" width="16" height="16" viewBox="0 0 16 16"><path d="M9 15L11.5 1L15.5 11Z" fill="#1e9be0"/><path d="M11.5 1L15.5 11L13 12Z" fill="#0d6fb8"/><path d="M1 3L5 1L9 3L9 8L5 10L1 8Z" fill="#d81820"/><path d="M1 3L5 5L9 3L5 1Z" fill="#f05058"/><path d="M5 5v5L1 8V3Z" fill="#b00c14"/><circle cx="6" cy="11" r="4.2" fill="#5628c0"/><circle cx="5.6" cy="10.2" r="2.6" fill="#a890f8"/><circle cx="5.4" cy="9.6" r="1.2" fill="#e8e0ff"/></svg>
<span class="t" style="left:377px;top:1097px;letter-spacing:-0.134px;">Mini Stars</span>
<div style="left:362px;top:1117px;width:177px;height:20px;background:#f0f0f0"></div>
<svg style="left:515px;top:1119px;" width="16" height="16" viewBox="0 0 16 16"><path d="M9 15L11.5 1L15.5 11Z" fill="#1e9be0"/><path d="M11.5 1L15.5 11L13 12Z" fill="#0d6fb8"/><path d="M1 3L5 1L9 3L9 8L5 10L1 8Z" fill="#d81820"/><path d="M1 3L5 5L9 3L5 1Z" fill="#f05058"/><path d="M5 5v5L1 8V3Z" fill="#b00c14"/><circle cx="6" cy="11" r="4.2" fill="#5628c0"/><circle cx="5.6" cy="10.2" r="2.6" fill="#a890f8"/><circle cx="5.4" cy="9.6" r="1.2" fill="#e8e0ff"/></svg>
<span class="t" style="left:377px;top:1119px;letter-spacing:-0.252px;">Mini Trees and Stars</span>
<div style="left:362px;top:1139px;width:177px;height:20px;background:#f0f0f0"></div>
<svg style="left:515px;top:1141px;" width="16" height="16" viewBox="0 0 16 16"><path d="M9 15L11.5 1L15.5 11Z" fill="#1e9be0"/><path d="M11.5 1L15.5 11L13 12Z" fill="#0d6fb8"/><path d="M1 3L5 1L9 3L9 8L5 10L1 8Z" fill="#d81820"/><path d="M1 3L5 5L9 3L5 1Z" fill="#f05058"/><path d="M5 5v5L1 8V3Z" fill="#b00c14"/><circle cx="6" cy="11" r="4.2" fill="#5628c0"/><circle cx="5.6" cy="10.2" r="2.6" fill="#a890f8"/><circle cx="5.4" cy="9.6" r="1.2" fill="#e8e0ff"/></svg>
<span class="t" style="left:377px;top:1141px;letter-spacing:-0.233px;">On The House</span>
<div style="left:362px;top:1161px;width:177px;height:20px;background:#f0f0f0"></div>
<svg style="left:515px;top:1163px;" width="16" height="16" viewBox="0 0 16 16"><path d="M9 15L11.5 1L15.5 11Z" fill="#1e9be0"/><path d="M11.5 1L15.5 11L13 12Z" fill="#0d6fb8"/><path d="M1 3L5 1L9 3L9 8L5 10L1 8Z" fill="#d81820"/><path d="M1 3L5 5L9 3L5 1Z" fill="#f05058"/><path d="M5 5v5L1 8V3Z" fill="#b00c14"/><circle cx="6" cy="11" r="4.2" fill="#5628c0"/><circle cx="5.6" cy="10.2" r="2.6" fill="#a890f8"/><circle cx="5.4" cy="9.6" r="1.2" fill="#e8e0ff"/></svg>
<span class="t" style="left:377px;top:1163px;letter-spacing:-0.169px;">Floods</span>
<div style="left:362px;top:1183px;width:177px;height:20px;background:#f0f0f0"></div>
<svg style="left:515px;top:1185px;" width="16" height="16" viewBox="0 0 16 16"><path d="M9 15L11.5 1L15.5 11Z" fill="#1e9be0"/><path d="M11.5 1L15.5 11L13 12Z" fill="#0d6fb8"/><path d="M1 3L5 1L9 3L9 8L5 10L1 8Z" fill="#d81820"/><path d="M1 3L5 5L9 3L5 1Z" fill="#f05058"/><path d="M5 5v5L1 8V3Z" fill="#b00c14"/><circle cx="6" cy="11" r="4.2" fill="#5628c0"/><circle cx="5.6" cy="10.2" r="2.6" fill="#a890f8"/><circle cx="5.4" cy="9.6" r="1.2" fill="#e8e0ff"/></svg>
<span class="t" style="left:377px;top:1185px;letter-spacing:-0.005px;">Halloween</span>
<div style="left:362px;top:1205px;width:177px;height:20px;background:#f0f0f0"></div>
<span class="t" style="left:377px;top:1207px;letter-spacing:-0.431px;">QR Code</span>
<div style="left:362px;top:1227px;width:177px;height:20px;background:#f0f0f0"></div>
<span class="t" style="left:377px;top:1229px;letter-spacing:-0.586px;">cc13</span>
<div style="left:362px;top:1249px;width:177px;height:20px;background:#f0f0f0"></div>
<span class="t" style="left:377px;top:1251px;letter-spacing:-0.503px;">Garage</span>
<div style="left:362px;top:1271px;width:177px;height:20px;background:#f0f0f0"></div>
<span class="t" style="left:377px;top:1273px;letter-spacing:-0.269px;">Porch</span>
<div style="left:362px;top:1293px;width:177px;height:20px;background:#f0f0f0"></div>
<span class="t" style="left:377px;top:1295px;letter-spacing:-0.096px;">DoorWreath1Inside-3</span>
<div style="left:362px;top:1315px;width:177px;height:20px;background:#f0f0f0"></div>
<span class="t" style="left:377px;top:1317px;letter-spacing:0.047px;">DoorWreath1InMid-3</span>
<div style="left:362px;top:1337px;width:177px;height:20px;background:#f0f0f0"></div>
<div style="left:361px;top:1357px;width:179px;height:16px;background:#f0f0f0"></div>
<div style="left:361px;top:1358px;width:13px;height:13px;background:#fff;border:1px solid #333"></div>
<span class="t" style="left:377px;top:1357px;letter-spacing:-0.360px;">Suspend Render</span>
<div style="left:541px;top:1357px;width:1795px;height:16px;background:#f0f0f0"></div>
<div style="left:557px;top:1357px;width:1761px;height:15px;background:#cdcdcd"></div>
<svg style="left:545px;top:1361px;" width="6" height="7.5" viewBox="0 0 6 7.5"><path d="M5.2 0.3L1.6 3.75L5.2 7.2" fill="none" stroke="#505050" stroke-width="2"/></svg>
<svg style="left:2325px;top:1361px;" width="6" height="7.5" viewBox="0 0 6 7.5"><path d="M0.8 0.3L4.4 3.75L0.8 7.2" fill="none" stroke="#505050" stroke-width="2"/></svg>
<div style="left:2337px;top:522px;width:16px;height:835px;background:#f0f0f0"></div>
<div style="left:2337px;top:539px;width:15px;height:339px;background:#cdcdcd"></div>
<svg style="left:2341px;top:528px;" width="7.5" height="6" viewBox="0 0 7.5 6"><path d="M0.3 5.2L3.75 1.6L7.2 5.2" fill="none" stroke="#505050" stroke-width="2"/></svg>
<svg style="left:2341px;top:1345px;" width="7.5" height="6" viewBox="0 0 7.5 6"><path d="M0.3 0.8L3.75 4.4L7.2 0.8" fill="none" stroke="#505050" stroke-width="2"/></svg>
<div style="left:2337px;top:1357px;width:16px;height:16px;background:#f0f0f0"></div>
<div style="left:237px;top:54px;width:33px;height:32px;background:#cce4f7;border:1px solid #b4d4ee"></div>
<svg style="left:16px;top:58px;overflow:hidden" width="24" height="24" viewBox="0 0 24 24"><g transform="translate(12,11.5) scale(1.08) translate(-12,-12)"><path d="M1 4.500C1 3.500 1.800 3 2.500 3H9L11 5H21.500C22.500 5 23 5.800 23 6.500V20.500C23 21.500 22.500 22 21.500 22H2.500C1.500 22 1 21.500 1 20.500Z" fill="#a8a89c"/><path d="M1 20.500V21C1 21.700 1.600 22.300 2.500 22.300H21.500C22.400 22.300 23 21.700 23 21V20.500" fill="#8a8a7e"/><path d="M3 9H21" stroke="#1a6a2a" stroke-width="1.3"/><rect x="10" y="8" width="4" height="4" rx="1" fill="#1a7a2a"/><path d="M12 11.500C14.500 12.500 14.500 17 13.500 19.500H10.500C9.500 17 9.500 12.500 12 11.500Z" fill="#f0e010"/></g></svg>
<svg style="left:51px;top:58px;overflow:hidden" width="24" height="24" viewBox="0 0 24 24"><g transform="translate(12,11.7) scale(1.03) translate(-12,-12)"><path d="M4 1.500H14L20.500 8V22.500H4Z" fill="#fffef4" stroke="#f0c830" stroke-width="1.8" stroke-linejoin="round"/><path d="M14 1.500V8H20.500Z" fill="#f0c830"/><path d="M7.500 8H13M7.500 11H17M7.500 14H17M7.500 17H17M7.500 20H17" stroke="#d8b040" stroke-width="1.5"/></g></svg>
<svg style="left:86px;top:58px;overflow:hidden" width="24" height="24" viewBox="0 0 24 24"><g transform="translate(12,12) scale(1.0) translate(-12,-12)"><path d="M1.500 3H17L19.500 6V21.500H1.500Z" fill="#f4fff8" stroke="#1a9a50" stroke-width="1.6" stroke-linejoin="round"/><path d="M6.500 8H23.500L21 21.500H2.500Z" fill="#10a850" stroke="#108a44" stroke-width="1" stroke-linejoin="round"/></g></svg>
<svg style="left:121px;top:58px;overflow:hidden" width="24" height="24" viewBox="0 0 24 24"><g transform="translate(12,12) scale(1.07) translate(-12,-12)"><path d="M1 2.500C1 1.500 1.700 1 2.500 1H20L23 4V21.500C23 22.500 22.300 23 21.500 23H2.500C1.700 23 1 22.500 1 21.500Z" fill="#2a90d8"/><path d="M1 21V21.500C1 22.500 1.700 23 2.500 23H21.500C22.300 23 23 22.500 23 21.500V21Z" fill="#1a6aa8"/><rect x="6.500" y="1.500" width="11.500" height="8" fill="#fff"/><rect x="14" y="3" width="2.500" height="5" fill="#1a4a78"/><rect x="3" y="13" width="18" height="9" fill="#fff"/><path d="M5 15.500H19M5 19H19" stroke="#1a5a98" stroke-width="1.600"/><path d="M5 17.300H19" stroke="#5aa0d8" stroke-width="1.200"/></g></svg>
<svg style="left:156px;top:58px;overflow:hidden" width="24" height="24" viewBox="0 0 24 24"><g transform="translate(12,12) scale(1.05) translate(-12,-12)"><path d="M5 8H22.500V23H5Z" fill="#fff" stroke="#e07820" stroke-width="1.6"/><path d="M1 2.500C1 1.500 1.700 1 2.500 1H17L20.500 4.500V19H1Z" fill="#e88020"/><rect x="5.500" y="1.500" width="9" height="6.500" fill="#fff"/><rect x="11" y="2.500" width="2" height="4.500" fill="#c06010"/><rect x="2.500" y="10.500" width="14.500" height="7.500" fill="#fff"/><path d="M4 12.500H15.500M4 14.500H15.500M4 16.500H15.500" stroke="#e07820" stroke-width="1"/><path d="M17.500 4.500L22.500 8.500V23H5" fill="none" stroke="#b86010" stroke-width="1.2"/></g></svg>
<svg style="left:191px;top:58px;overflow:hidden" width="24" height="24" viewBox="0 0 24 24"><g transform="translate(12,11.5) scale(1.04) translate(-12,-12)"><path d="M12 1.500C18.500 1.500 23.500 6 23.500 11C23.500 15 20 16.500 17 16.500C15 16.500 14 17.500 14 19C14 20.500 14.500 23 12 23C5.500 23 1 18.500 1 12.500C1 6 6 1.500 12 1.500Z" fill="#f0d8a0" stroke="#c8a868" stroke-width="1"/><circle cx="6.500" cy="12.500" r="3" fill="#e81818"/><circle cx="12.500" cy="6.500" r="3" fill="#10a040"/><circle cx="18" cy="12" r="3" fill="#1068d8"/></g></svg>
<svg style="left:241px;top:58px;overflow:hidden" width="24" height="24" viewBox="0 0 24 24"><g transform="translate(12,11.5) scale(1.04) translate(-12,-12)"><rect x="4" y="5" width="17" height="18" rx="1" fill="#dcd8c8"/><path d="M20 6V22H5" fill="none" stroke="#808878" stroke-width="1"/><path d="M9 5C9 2.500 10.500 1.500 12.500 1.500C14.500 1.500 16 2.500 16 5Z" fill="#484868"/><circle cx="12.500" cy="13.500" r="6.500" fill="#484c80"/><path d="M12.500 9.500V14H15.500" fill="none" stroke="#fff" stroke-width="1.600"/></g></svg>
<svg style="left:276px;top:58px;overflow:hidden" width="24" height="24" viewBox="0 0 24 24"><g transform="translate(12,11.5) scale(1.04) translate(-12,-12)"><rect x="4" y="4.500" width="17" height="18.500" rx="1" fill="#dcdcd4"/><path d="M8 4.500C8 2.500 10 1 12.500 1C15 1 17 2.500 17 4.500Z" fill="#485060"/><rect x="5" y="7" width="15" height="14" fill="#586070"/><g fill="#fff"><rect x="6" y="8.500" width="3.700" height="3"/><rect x="10.700" y="8.500" width="3.700" height="3"/><rect x="15.400" y="8.500" width="3.700" height="3"/><rect x="6" y="12.500" width="3.700" height="3"/><rect x="10.700" y="12.500" width="3.700" height="3"/><rect x="15.400" y="12.500" width="3.700" height="3"/><rect x="6" y="16.500" width="3.700" height="3"/><rect x="10.700" y="16.500" width="3.700" height="3"/><rect x="15.400" y="16.500" width="3.700" height="3"/></g></g></svg>
<svg style="left:326px;top:58px;overflow:hidden" width="24" height="24" viewBox="0 0 24 24"><rect x="0" y="0" width="24" height="24" rx="4" fill="#b6cc58"/><path d="M8 20L18.500 13.500V15.500L10 21Z" fill="#6a8020"/><path d="M7 5L18.500 12.500L7 20Z" fill="#fff"/></svg>
<svg style="left:361px;top:58px;overflow:hidden" width="24" height="24" viewBox="0 0 24 24"><rect x="0" y="0" width="24" height="24" rx="4" fill="#f4dccc"/><path d="M7 6H11V19H7ZM13.500 6H17.500V19H13.500Z" fill="#fff"/><path d="M11 7V20H7M17.500 7V20H13.500" fill="none" stroke="#d8c0b0" stroke-width="0.8"/></svg>
<svg style="left:396px;top:58px;overflow:hidden" width="24" height="24" viewBox="0 0 24 24"><rect x="0" y="0" width="24" height="24" rx="4" fill="#f4b8b8"/><rect x="5.500" y="5.500" width="13" height="13" fill="#fff"/><path d="M18.500 6.500V19H6.500" fill="none" stroke="#e0a0a0" stroke-width="0.9"/></svg>
<svg style="left:431px;top:58px;overflow:hidden" width="24" height="24" viewBox="0 0 24 24"><rect x="0" y="0" width="24" height="24" rx="4" fill="#4a989c"/><path d="M5.500 8H8V16H5.500ZM13.500 8V16L8 12ZM19 8V16L13.500 12Z" fill="#fff"/><path d="M6 17H8.500M10 17.500L13.500 17.500M15.500 17.500L19.500 17.500V9" fill="none" stroke="#2a6a70" stroke-width="1"/></svg>
<svg style="left:466px;top:58px;overflow:hidden" width="24" height="24" viewBox="0 0 24 24"><rect x="0" y="0" width="24" height="24" rx="4" fill="#5ac0a0"/><path d="M18.500 8H16V16H18.500ZM10.500 8V16L16 12ZM5 8V16L10.500 12Z" fill="#fff"/><path d="M5.500 17.500H9M11 17.500H15M16.500 17H19.500V9" fill="none" stroke="#2a8a68" stroke-width="1"/></svg>
<svg style="left:501px;top:58px;overflow:hidden" width="24" height="24" viewBox="0 0 24 24"><rect x="0" y="0" width="24" height="24" rx="4" fill="#7070b8"/><path d="M6 14.500C4.500 10 8 5.500 13 6.500" fill="none" stroke="#fff" stroke-width="2.4"/><path d="M12 3L17 7L12 10.500Z" fill="#fff"/><path d="M18 9.500C19.500 14 16 18.500 11 17.500" fill="none" stroke="#fff" stroke-width="2.4"/><path d="M12 21L7 17L12 13.500Z" fill="#fff"/><path d="M7.500 15.500C6 12 8 8.500 11 8" fill="none" stroke="#404080" stroke-width="1"/></svg>
<svg style="left:551px;top:58px;overflow:hidden" width="24" height="24" viewBox="0 0 24 24"><g transform="translate(12,11.7) scale(1.1) translate(-12,-12)"><path d="M16.8 10.4 L13.2 11.0 L14.4 14.0 L11.0 12.7 L9.9 15.8 L8.0 13.0 L5.1 14.9 L5.5 11.8 L1.7 11.8 L4.2 9.5 L1.2 7.6 L4.8 7.0 L3.6 4.0 L7.0 5.3 L8.1 2.2 L10.0 5.0 L12.9 3.1 L12.5 6.2 L16.3 6.2 L13.8 8.5Z" fill="#2a90d0"/><path d="M22.9 12.9 L22.9 15.1 L20.4 15.3 L19.9 16.7 L21.9 18.4 L20.6 20.1 L18.4 18.7 L17.2 19.7 L17.8 22.2 L15.7 22.8 L14.8 20.4 L13.2 20.4 L12.3 22.8 L10.2 22.2 L10.8 19.7 L9.6 18.7 L7.4 20.1 L6.1 18.4 L8.1 16.7 L7.6 15.3 L5.1 15.1 L5.1 12.9 L7.6 12.7 L8.1 11.3 L6.1 9.6 L7.4 7.9 L9.6 9.3 L10.8 8.3 L10.2 5.8 L12.3 5.2 L13.2 7.6 L14.8 7.6 L15.7 5.2 L17.8 5.8 L17.2 8.3 L18.4 9.3 L20.6 7.9 L21.9 9.6 L19.9 11.3 L20.4 12.7Z" fill="#1a80c8"/><path d="M14 16.500L11.500 13.500C11.500 12 13.500 12 14 13C14.500 12 16.500 12 16.500 13.500Z" fill="#fff"/></g></svg>
<svg style="left:586px;top:58px;overflow:hidden" width="24" height="24" viewBox="0 0 24 24"><g transform="translate(-1.2,-0.6) scale(1.1,1.04)"><path d="M2.5 6L4.5 1L6.5 6V22.500H2.5Z" fill="#e82838" /><path d="M2.0 8H7.0M2.0 20H7.0" stroke="#fff" stroke-width="1.2"/><rect x="1.8" y="5" width="5.400" height="18.500" rx="1" fill="none" stroke="#e82838" stroke-width="1"/><rect x="2.5" y="9.500" width="4" height="9" fill="#fff"/><ellipse cx="4.5" cy="14" rx="1.300" ry="2.800" fill="#1a3a78"/><path d="M10 6L12 1L14 6V22.500H10Z" fill="#18a850" /><path d="M9.5 8H14.5M9.5 20H14.5" stroke="#fff" stroke-width="1.2"/><rect x="9.3" y="5" width="5.400" height="18.500" rx="1" fill="none" stroke="#18a850" stroke-width="1"/><rect x="10" y="9.500" width="4" height="9" fill="#fff"/><ellipse cx="12" cy="14" rx="1.300" ry="2.800" fill="#1a3a78"/><path d="M17.5 6L19.5 1L21.5 6V22.500H17.5Z" fill="#2a80d8" /><path d="M17.0 8H22.0M17.0 20H22.0" stroke="#fff" stroke-width="1.2"/><rect x="16.8" y="5" width="5.400" height="18.500" rx="1" fill="none" stroke="#2a80d8" stroke-width="1"/><rect x="17.5" y="9.500" width="4" height="9" fill="#fff"/><ellipse cx="19.5" cy="14" rx="1.300" ry="2.800" fill="#1a3a78"/></g></svg>
<svg style="left:621px;top:58px;overflow:hidden" width="24" height="24" viewBox="0 0 24 24"><g transform="translate(12,11.5) scale(1.06) translate(-12,-12)"><rect x="1" y="1" width="14" height="14" rx="1.500" fill="#7a2a98"/><rect x="4.500" y="4.500" width="14" height="14" rx="1.500" fill="#fff" stroke="#7a2a98" stroke-width="1.6"/><path d="M23.4 15.1 L23.4 16.9 L21.2 17.5 L20.7 18.6 L21.9 20.6 L20.6 21.9 L18.6 20.7 L17.5 21.2 L16.9 23.4 L15.1 23.4 L14.5 21.2 L13.4 20.7 L11.4 21.9 L10.1 20.6 L11.3 18.6 L10.8 17.5 L8.6 16.9 L8.6 15.1 L10.8 14.5 L11.3 13.4 L10.1 11.4 L11.4 10.1 L13.4 11.3 L14.5 10.8 L15.1 8.6 L16.9 8.6 L17.5 10.8 L18.6 11.3 L20.6 10.1 L21.9 11.4 L20.7 13.4 L21.2 14.5Z" fill="#9a28a0"/><circle cx="16" cy="16" r="2.2" fill="#fff"/></g></svg>
<svg style="left:656px;top:58px;overflow:hidden" width="24" height="24" viewBox="0 0 24 24"><g transform="translate(12,11.7) scale(1.09) translate(-12,-12)"><rect x="1.800" y="1.800" width="13.500" height="13.500" rx="1" fill="#fff" stroke="#e0208a" stroke-width="1.6"/><rect x="9" y="9" width="13.500" height="13.500" rx="1" fill="#fff" stroke="#e0208a" stroke-width="1.6"/><rect x="9.800" y="9.800" width="5" height="5" fill="#f01890"/></g></svg>
<svg style="left:691px;top:58px;overflow:hidden" width="24" height="24" viewBox="0 0 24 24"><g transform="translate(12,11.4) scale(1.07) translate(-12,-12)"><path d="M12 1L22.500 23H1.500Z" fill="#e82850"/><circle cx="12.500" cy="14" r="3.600" fill="#f04868" stroke="#fff" stroke-width="1.500"/><path d="M10 17L6 21.500" stroke="#fff" stroke-width="2"/></g></svg>
<svg style="left:726px;top:58px;overflow:hidden" width="24" height="24" viewBox="0 0 24 24"><g transform="translate(12,11.5) scale(1.06) translate(-12,-12)"><path d="M12 1L23.500 11H20.500V23H3.500V11H0.500Z" fill="#f08020"/><circle cx="12.500" cy="14" r="3.600" fill="#f8a050" stroke="#fff" stroke-width="1.500"/><path d="M10 17L6.500 21" stroke="#fff" stroke-width="2"/></g></svg>
<svg style="left:761px;top:58px;overflow:hidden" width="24" height="24" viewBox="0 0 24 24"><g transform="translate(12,11.7) scale(1.05) translate(-12,-12)"><rect x="4" y="1" width="7" height="6.500" fill="#e8e020"/><rect x="4" y="8.500" width="7" height="6.500" fill="#e8e020"/><rect x="4" y="16.500" width="7" height="6.500" fill="#e8e020"/><path d="M12 19H20V9.500H14" fill="none" stroke="#a8c840" stroke-width="2"/><path d="M16 6.500L12 9.500L16 12.500Z" fill="#a8c840"/><path d="M20 8V20" stroke="#88a828" stroke-width="0.8"/></g></svg>
<svg style="left:796px;top:58px;overflow:hidden" width="24" height="24" viewBox="0 0 24 24"><g transform="translate(12,11.7) scale(1.04) translate(-12,-12)"><path d="M23.8 14.0 L18.4 14.9 L20.6 19.1 L15.5 17.3 L14.7 21.9 L11.6 18.1 L8.0 21.6 L7.8 17.0 L2.5 18.2 L5.3 14.2 L0.0 12.9 L4.9 10.8 L1.4 7.2 L6.8 7.7 L6.1 3.1 L10.4 6.0 L12.7 1.8 L14.4 6.2 L19.1 3.7 L17.7 8.3 L23.2 8.3 L19.2 11.5Z" fill="#50a048"/><circle cx="12" cy="11" r="7" fill="#fff"/><rect x="8.500" y="8" width="7" height="7" fill="#38b048"/></g></svg>
<svg style="left:831px;top:58px;overflow:hidden" width="24" height="24" viewBox="0 0 24 24"><g transform="translate(12,11.7) scale(1.04) translate(-12,-12)"><path d="M19.8 12.7 L15.3 13.4 L17.2 16.9 L12.9 15.4 L12.3 19.3 L9.7 16.1 L6.6 19.0 L6.5 15.1 L2.1 16.2 L4.4 12.8 L0.0 11.7 L4.1 10.0 L1.2 7.0 L5.7 7.4 L5.1 3.6 L8.6 6.0 L10.6 2.5 L12.0 6.2 L15.9 4.1 L14.8 7.9 L19.3 7.9 L16.0 10.6Z" fill="#68a860"/><circle cx="10" cy="10" r="6" fill="#fff"/><rect x="7" y="7.500" width="6" height="6" fill="#60b868"/><path d="M5 21.500L7 17L19.500 4.500L22.500 7.500L10 20Z" fill="#e8a040" stroke="#a87020" stroke-width="0.8"/><path d="M19.500 4.500L21 3C22 2.500 23.500 4 23 5L22.500 7.500Z" fill="#e87890"/><path d="M5 21.500L7 17L10 20Z" fill="#f0d8b0"/><path d="M5 21.500L5.800 19.700L7 21Z" fill="#404040"/></g></svg>
<svg style="left:881px;top:58px;overflow:hidden" width="24" height="24" viewBox="0 0 24 24"><rect x="0" y="0" width="24" height="24" rx="4" fill="#8c9870"/><path d="M10.500 16L6 21" stroke="#606a48" stroke-width="3" stroke-linecap="round"/><circle cx="14" cy="10" r="5.800" fill="none" stroke="#fff" stroke-width="2.4"/><path d="M9.500 14.500L4.500 20" stroke="#fff" stroke-width="3" stroke-linecap="round"/><path d="M11 10H17" stroke="#fff" stroke-width="2"/><path d="M14 7V13" stroke="#fff" stroke-width="2"/></svg>
<svg style="left:916px;top:58px;overflow:hidden" width="24" height="24" viewBox="0 0 24 24"><rect x="0" y="0" width="24" height="24" rx="4" fill="#e87058"/><path d="M10.500 16L6 21" stroke="#b84a38" stroke-width="3" stroke-linecap="round"/><circle cx="14" cy="10" r="5.800" fill="none" stroke="#fff" stroke-width="2.4"/><path d="M9.500 14.500L4.500 20" stroke="#fff" stroke-width="3" stroke-linecap="round"/><path d="M11 10H17" stroke="#fff" stroke-width="2"/></svg>
<svg style="left:951px;top:58px;overflow:hidden" width="24" height="24" viewBox="0 0 24 24"><rect x="0" y="0" width="24" height="24" rx="4" fill="#c05858"/><path d="M4 19L6 10C6 8 7 7 8 7L8.500 4.500C9 3.500 10 3.500 10.500 4.500L11 7C12 7 12.500 8 12.500 10V19Z" fill="#fff"/><path d="M13.500 5H17C16.500 7 19 7 19 9H20.500V12.500C18.500 12 18.500 14.500 20.500 14.500V19H13.500V14C15 14.500 15 12 13.500 12.500Z" fill="#fff"/><path d="M4 19.500H12.500M13.500 19.500H20.500" stroke="#803030" stroke-width="1"/></svg>
<svg style="left:1001px;top:58px;overflow:hidden" width="24" height="24" viewBox="0 0 24 24"><circle cx="12" cy="12" r="10" fill="#fff" stroke="#108890" stroke-width="2.6"/><text x="12" y="17.500" text-anchor="middle" font-family="Liberation Sans, sans-serif" font-weight="bold" font-size="15.500" fill="#108890">?</text></svg>
<svg style="left:1036px;top:58px;overflow:hidden" width="24" height="24" viewBox="0 0 24 24"><path d="M7.500 1H16.500L23 7.500V16.500L16.500 23H7.500L1 16.500V7.500Z" fill="#c8181c"/></svg>
<svg style="left:1071px;top:58px;overflow:hidden" width="24" height="24" viewBox="0 0 24 24"><path d="M12 1C16.500 1 19.500 4.500 19.500 8.500C19.500 12 17 13.500 16.500 17H7.500C7 13.500 4.500 12 4.500 8.500C4.500 4.500 7.500 1 12 1Z" fill="#585858" stroke="#484848" stroke-width="0.8"/><path d="M8 18.500H16M8 20.500H16M9.500 22.500H14.500" stroke="#a0a0a0" stroke-width="1.500"/></svg>
<svg style="left:1106px;top:58px;overflow:hidden" width="24" height="24" viewBox="0 0 24 24"><path d="M12 1C16.500 1 19.500 4.500 19.500 8.500C19.500 12 17 13.500 16.500 17H7.500C7 13.500 4.500 12 4.500 8.500C4.500 4.500 7.500 1 12 1Z" fill="#fdfdfd" stroke="#d0d0d0" stroke-width="0.8"/><path d="M8 18.500H16M8 20.500H16M9.500 22.500H14.500" stroke="#c0c0c0" stroke-width="1.500"/></svg>
</body></html>
